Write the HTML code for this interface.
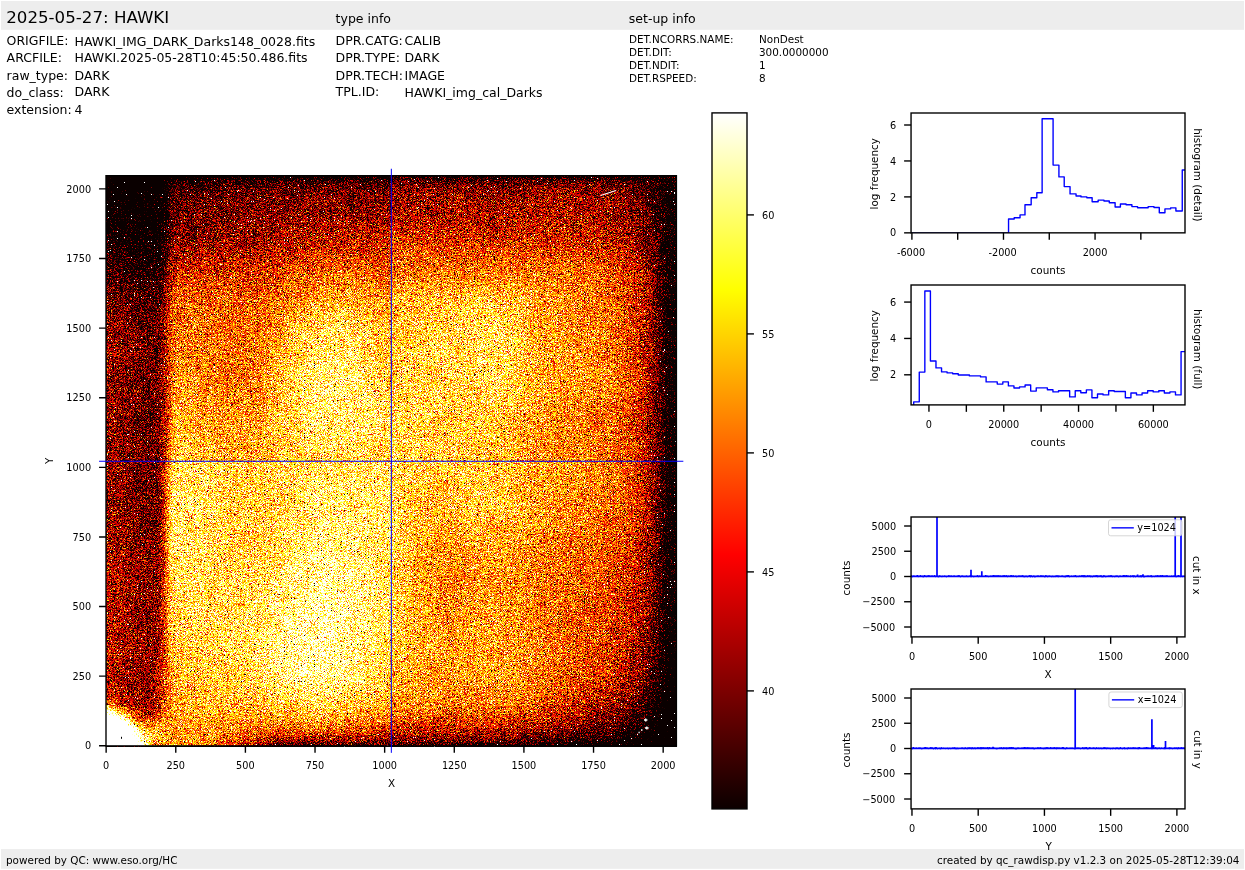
<!DOCTYPE html>
<html lang="en"><head><meta charset="utf-8"><title>HAWKI raw display</title>
<style>html,body{margin:0;padding:0;background:#fff}body{width:1245px;height:870px;overflow:hidden}svg{display:block}text{font-family:"DejaVu Sans","Liberation Sans",sans-serif;fill:#000}.sp{fill:none;stroke:#000;stroke-width:1.39;stroke-linecap:square}.tk{stroke:#000;stroke-width:1.39;fill:none}.bl{stroke:#0000ff;fill:none;stroke-width:1.39;stroke-linejoin:round}</style></head><body>
<svg width="1245" height="870" viewBox="0 0 1245 870">
<rect width="1245" height="870" fill="#fff"/>
<rect x="1" y="1" width="1243" height="28.8" fill="#ededed"/>
<rect x="1" y="849.1" width="1243" height="19.7" fill="#ededed"/>
<defs><filter id="hm" x="0" y="0" width="1" height="1" color-interpolation-filters="sRGB"><feTurbulence type="fractalNoise" baseFrequency="1.7" numOctaves="1" seed="7" result="t"/><feComponentTransfer in="t" result="t2"><feFuncG type="discrete" tableValues="0 0 0 0 0 0 0 0 0 0 0 0 0 0 0 0 0 0 0 0 0 0 0 0 0 0 .5 .5 .5 .5 .5 .5 .5 .5 .5 .5 .5 .5 .5 .5 .5 .5 .5 .5 .5 .5 .5 .5 .5 .5 .5 .5 .5 .5 .5 .5 .5 .5 .5 .5 .5 .5 .5 .5 .5 .5 .5 .5 .5 .5 .5 .5 .5 .5 1 1 1 1 1 1 1 1 1 1 1 1 1 1 1 1 1 1 1 1 1 1 1 1 1 1"/></feComponentTransfer><feColorMatrix in="t2" type="matrix" values="0.4953 1 0 0 -0.2476 0.4953 1 0 0 -0.2476 0.4953 1 0 0 -0.2476 0 0 0 0 1" result="nz"/><feComposite in="SourceGraphic" in2="nz" operator="arithmetic" k1="0" k2="1" k3="2" k4="-1" result="v"/><feComponentTransfer in="v"><feFuncR type="table" tableValues="0.042 0.042 0.042 0.042 0.042 0.042 0.042 0.042 0.042 0.042 0.042 0.042 0.042 0.042 0.042 0.042 0.042 0.042 0.042 0.042 0.042 0.107 0.173 0.238 0.304 0.370 0.435 0.501 0.567 0.632 0.698 0.764 0.829 0.895 0.960 1.000 1.000 1.000 1.000 1.000 1.000 1.000 1.000 1.000 1.000 1.000 1.000 1.000 1.000 1.000 1.000 1.000 1.000 1.000 1.000 1.000 1.000 1.000 1.000 1.000 1.000 1.000 1.000 1.000 1.000 1.000 1.000 1.000 1.000 1.000 1.000 1.000 1.000 1.000 1.000 1.000 1.000 1.000 1.000 1.000 1.000"/><feFuncG type="table" tableValues="0.000 0.000 0.000 0.000 0.000 0.000 0.000 0.000 0.000 0.000 0.000 0.000 0.000 0.000 0.000 0.000 0.000 0.000 0.000 0.000 0.000 0.000 0.000 0.000 0.000 0.000 0.000 0.000 0.000 0.000 0.000 0.000 0.000 0.000 0.000 0.026 0.092 0.157 0.223 0.289 0.354 0.420 0.485 0.551 0.617 0.682 0.748 0.814 0.879 0.945 1.000 1.000 1.000 1.000 1.000 1.000 1.000 1.000 1.000 1.000 1.000 1.000 1.000 1.000 1.000 1.000 1.000 1.000 1.000 1.000 1.000 1.000 1.000 1.000 1.000 1.000 1.000 1.000 1.000 1.000 1.000"/><feFuncB type="table" tableValues="0.000 0.000 0.000 0.000 0.000 0.000 0.000 0.000 0.000 0.000 0.000 0.000 0.000 0.000 0.000 0.000 0.000 0.000 0.000 0.000 0.000 0.000 0.000 0.000 0.000 0.000 0.000 0.000 0.000 0.000 0.000 0.000 0.000 0.000 0.000 0.000 0.000 0.000 0.000 0.000 0.000 0.000 0.000 0.000 0.000 0.000 0.000 0.000 0.000 0.000 0.016 0.114 0.212 0.311 0.409 0.508 0.606 0.705 0.803 0.902 1.000 1.000 1.000 1.000 1.000 1.000 1.000 1.000 1.000 1.000 1.000 1.000 1.000 1.000 1.000 1.000 1.000 1.000 1.000 1.000 1.000"/></feComponentTransfer></filter><linearGradient id="vm" x1="0" y1="0" x2="0" y2="1"><stop offset="0" stop-color="#fff"/><stop offset="1" stop-color="#000"/></linearGradient><mask id="mk" maskContentUnits="objectBoundingBox"><rect width="1" height="1" fill="url(#vm)"/></mask><linearGradient id="r0" gradientUnits="userSpaceOnUse" x1="106.0" y1="0" x2="676.4" y2="0"><stop offset="0.0000" stop-color="#ffffff"/><stop offset="0.0105" stop-color="#ffffff"/><stop offset="0.0245" stop-color="#ffffff"/><stop offset="0.0421" stop-color="#ffffff"/><stop offset="0.0596" stop-color="#e1e1e1"/><stop offset="0.0771" stop-color="#9e9e9e"/><stop offset="0.0912" stop-color="#929292"/><stop offset="0.1017" stop-color="#8e8e8e"/><stop offset="0.1069" stop-color="#8c8c8c"/><stop offset="0.1122" stop-color="#8a8a8a"/><stop offset="0.1175" stop-color="#898989"/><stop offset="0.1262" stop-color="#888888"/><stop offset="0.1403" stop-color="#8a8a8a"/><stop offset="0.1648" stop-color="#898989"/><stop offset="0.1911" stop-color="#818181"/><stop offset="0.2174" stop-color="#767676"/><stop offset="0.2437" stop-color="#696969"/><stop offset="0.2700" stop-color="#5b5b5b"/><stop offset="0.2963" stop-color="#4f4f4f"/><stop offset="0.3226" stop-color="#464646"/><stop offset="0.3489" stop-color="#444444"/><stop offset="0.3752" stop-color="#454545"/><stop offset="0.4015" stop-color="#444444"/><stop offset="0.4278" stop-color="#434343"/><stop offset="0.4541" stop-color="#434343"/><stop offset="0.4804" stop-color="#424242"/><stop offset="0.4988" stop-color="#414141"/><stop offset="0.5014" stop-color="#404040"/><stop offset="0.5242" stop-color="#3f3f3f"/><stop offset="0.5505" stop-color="#3f3f3f"/><stop offset="0.5768" stop-color="#3e3e3e"/><stop offset="0.6031" stop-color="#3d3d3d"/><stop offset="0.6294" stop-color="#3c3c3c"/><stop offset="0.6557" stop-color="#3b3b3b"/><stop offset="0.6820" stop-color="#393939"/><stop offset="0.7083" stop-color="#373737"/><stop offset="0.7346" stop-color="#353535"/><stop offset="0.7609" stop-color="#313131"/><stop offset="0.7872" stop-color="#2e2e2e"/><stop offset="0.8135" stop-color="#292929"/><stop offset="0.8398" stop-color="#242424"/><stop offset="0.8661" stop-color="#1e1e1e"/><stop offset="0.8871" stop-color="#181818"/><stop offset="0.9081" stop-color="#111111"/><stop offset="0.9257" stop-color="#0a0a0a"/><stop offset="0.9397" stop-color="#040404"/><stop offset="0.9537" stop-color="#000000"/><stop offset="0.9660" stop-color="#000000"/><stop offset="0.9765" stop-color="#000000"/><stop offset="0.9853" stop-color="#000000"/><stop offset="0.9923" stop-color="#000000"/><stop offset="1.0007" stop-color="#000000"/></linearGradient><linearGradient id="r1" gradientUnits="userSpaceOnUse" x1="106.0" y1="0" x2="676.4" y2="0"><stop offset="0.0000" stop-color="#ffffff"/><stop offset="0.0105" stop-color="#ffffff"/><stop offset="0.0245" stop-color="#ffffff"/><stop offset="0.0421" stop-color="#ffffff"/><stop offset="0.0596" stop-color="#dcdcdc"/><stop offset="0.0771" stop-color="#9f9f9f"/><stop offset="0.0912" stop-color="#949494"/><stop offset="0.1017" stop-color="#909090"/><stop offset="0.1069" stop-color="#8e8e8e"/><stop offset="0.1122" stop-color="#8c8c8c"/><stop offset="0.1175" stop-color="#8a8a8a"/><stop offset="0.1262" stop-color="#8a8a8a"/><stop offset="0.1403" stop-color="#8c8c8c"/><stop offset="0.1648" stop-color="#8b8b8b"/><stop offset="0.1911" stop-color="#858585"/><stop offset="0.2174" stop-color="#7c7c7c"/><stop offset="0.2437" stop-color="#727272"/><stop offset="0.2700" stop-color="#676767"/><stop offset="0.2963" stop-color="#5e5e5e"/><stop offset="0.3226" stop-color="#585858"/><stop offset="0.3489" stop-color="#575757"/><stop offset="0.3752" stop-color="#575757"/><stop offset="0.4015" stop-color="#565656"/><stop offset="0.4278" stop-color="#545454"/><stop offset="0.4541" stop-color="#535353"/><stop offset="0.4804" stop-color="#525252"/><stop offset="0.4988" stop-color="#515151"/><stop offset="0.5014" stop-color="#4f4f4f"/><stop offset="0.5242" stop-color="#4e4e4e"/><stop offset="0.5505" stop-color="#4d4d4d"/><stop offset="0.5768" stop-color="#4c4c4c"/><stop offset="0.6031" stop-color="#4b4b4b"/><stop offset="0.6294" stop-color="#4a4a4a"/><stop offset="0.6557" stop-color="#494949"/><stop offset="0.6820" stop-color="#484848"/><stop offset="0.7083" stop-color="#464646"/><stop offset="0.7346" stop-color="#434343"/><stop offset="0.7609" stop-color="#3f3f3f"/><stop offset="0.7872" stop-color="#3c3c3c"/><stop offset="0.8135" stop-color="#373737"/><stop offset="0.8398" stop-color="#323232"/><stop offset="0.8661" stop-color="#2b2b2b"/><stop offset="0.8871" stop-color="#252525"/><stop offset="0.9081" stop-color="#1e1e1e"/><stop offset="0.9257" stop-color="#171717"/><stop offset="0.9397" stop-color="#101010"/><stop offset="0.9537" stop-color="#080808"/><stop offset="0.9660" stop-color="#000000"/><stop offset="0.9765" stop-color="#000000"/><stop offset="0.9853" stop-color="#000000"/><stop offset="0.9923" stop-color="#000000"/><stop offset="1.0007" stop-color="#000000"/></linearGradient><linearGradient id="r2" gradientUnits="userSpaceOnUse" x1="106.0" y1="0" x2="676.4" y2="0"><stop offset="0.0000" stop-color="#ffffff"/><stop offset="0.0105" stop-color="#ffffff"/><stop offset="0.0245" stop-color="#ffffff"/><stop offset="0.0421" stop-color="#ffffff"/><stop offset="0.0596" stop-color="#d1d1d1"/><stop offset="0.0771" stop-color="#9e9e9e"/><stop offset="0.0912" stop-color="#959595"/><stop offset="0.1017" stop-color="#919191"/><stop offset="0.1069" stop-color="#8f8f8f"/><stop offset="0.1122" stop-color="#8d8d8d"/><stop offset="0.1175" stop-color="#8c8c8c"/><stop offset="0.1262" stop-color="#8b8b8b"/><stop offset="0.1403" stop-color="#8d8d8d"/><stop offset="0.1648" stop-color="#8d8d8d"/><stop offset="0.1911" stop-color="#888888"/><stop offset="0.2174" stop-color="#818181"/><stop offset="0.2437" stop-color="#797979"/><stop offset="0.2700" stop-color="#707070"/><stop offset="0.2963" stop-color="#696969"/><stop offset="0.3226" stop-color="#656565"/><stop offset="0.3489" stop-color="#646464"/><stop offset="0.3752" stop-color="#656565"/><stop offset="0.4015" stop-color="#636363"/><stop offset="0.4278" stop-color="#626262"/><stop offset="0.4541" stop-color="#606060"/><stop offset="0.4804" stop-color="#5e5e5e"/><stop offset="0.4988" stop-color="#5d5d5d"/><stop offset="0.5014" stop-color="#595959"/><stop offset="0.5242" stop-color="#595959"/><stop offset="0.5505" stop-color="#585858"/><stop offset="0.5768" stop-color="#575757"/><stop offset="0.6031" stop-color="#555555"/><stop offset="0.6294" stop-color="#555555"/><stop offset="0.6557" stop-color="#545454"/><stop offset="0.6820" stop-color="#535353"/><stop offset="0.7083" stop-color="#515151"/><stop offset="0.7346" stop-color="#4e4e4e"/><stop offset="0.7609" stop-color="#4a4a4a"/><stop offset="0.7872" stop-color="#464646"/><stop offset="0.8135" stop-color="#414141"/><stop offset="0.8398" stop-color="#3b3b3b"/><stop offset="0.8661" stop-color="#353535"/><stop offset="0.8871" stop-color="#2f2f2f"/><stop offset="0.9081" stop-color="#282828"/><stop offset="0.9257" stop-color="#202020"/><stop offset="0.9397" stop-color="#191919"/><stop offset="0.9537" stop-color="#101010"/><stop offset="0.9660" stop-color="#070707"/><stop offset="0.9765" stop-color="#000000"/><stop offset="0.9853" stop-color="#000000"/><stop offset="0.9923" stop-color="#000000"/><stop offset="1.0007" stop-color="#000000"/></linearGradient><linearGradient id="r3" gradientUnits="userSpaceOnUse" x1="106.0" y1="0" x2="676.4" y2="0"><stop offset="0.0000" stop-color="#ffffff"/><stop offset="0.0105" stop-color="#ffffff"/><stop offset="0.0245" stop-color="#ffffff"/><stop offset="0.0421" stop-color="#ffffff"/><stop offset="0.0596" stop-color="#c2c2c2"/><stop offset="0.0771" stop-color="#9b9b9b"/><stop offset="0.0912" stop-color="#959595"/><stop offset="0.1017" stop-color="#929292"/><stop offset="0.1069" stop-color="#909090"/><stop offset="0.1122" stop-color="#8e8e8e"/><stop offset="0.1175" stop-color="#8d8d8d"/><stop offset="0.1262" stop-color="#8c8c8c"/><stop offset="0.1403" stop-color="#8e8e8e"/><stop offset="0.1648" stop-color="#8e8e8e"/><stop offset="0.1911" stop-color="#8b8b8b"/><stop offset="0.2174" stop-color="#858585"/><stop offset="0.2437" stop-color="#7f7f7f"/><stop offset="0.2700" stop-color="#797979"/><stop offset="0.2963" stop-color="#737373"/><stop offset="0.3226" stop-color="#717171"/><stop offset="0.3489" stop-color="#717171"/><stop offset="0.3752" stop-color="#727272"/><stop offset="0.4015" stop-color="#707070"/><stop offset="0.4278" stop-color="#6e6e6e"/><stop offset="0.4541" stop-color="#6c6c6c"/><stop offset="0.4804" stop-color="#686868"/><stop offset="0.4988" stop-color="#676767"/><stop offset="0.5014" stop-color="#636363"/><stop offset="0.5242" stop-color="#626262"/><stop offset="0.5505" stop-color="#616161"/><stop offset="0.5768" stop-color="#606060"/><stop offset="0.6031" stop-color="#5f5f5f"/><stop offset="0.6294" stop-color="#5e5e5e"/><stop offset="0.6557" stop-color="#5e5e5e"/><stop offset="0.6820" stop-color="#5d5d5d"/><stop offset="0.7083" stop-color="#5b5b5b"/><stop offset="0.7346" stop-color="#575757"/><stop offset="0.7609" stop-color="#535353"/><stop offset="0.7872" stop-color="#4f4f4f"/><stop offset="0.8135" stop-color="#4a4a4a"/><stop offset="0.8398" stop-color="#444444"/><stop offset="0.8661" stop-color="#3e3e3e"/><stop offset="0.8871" stop-color="#383838"/><stop offset="0.9081" stop-color="#303030"/><stop offset="0.9257" stop-color="#292929"/><stop offset="0.9397" stop-color="#212121"/><stop offset="0.9537" stop-color="#171717"/><stop offset="0.9660" stop-color="#0d0d0d"/><stop offset="0.9765" stop-color="#020202"/><stop offset="0.9853" stop-color="#000000"/><stop offset="0.9923" stop-color="#000000"/><stop offset="1.0007" stop-color="#000000"/></linearGradient><linearGradient id="r4" gradientUnits="userSpaceOnUse" x1="106.0" y1="0" x2="676.4" y2="0"><stop offset="0.0000" stop-color="#ffffff"/><stop offset="0.0105" stop-color="#ffffff"/><stop offset="0.0245" stop-color="#ffffff"/><stop offset="0.0421" stop-color="#ffffff"/><stop offset="0.0596" stop-color="#acacac"/><stop offset="0.0771" stop-color="#949494"/><stop offset="0.0912" stop-color="#919191"/><stop offset="0.1017" stop-color="#909090"/><stop offset="0.1069" stop-color="#8f8f8f"/><stop offset="0.1122" stop-color="#8f8f8f"/><stop offset="0.1175" stop-color="#8e8e8e"/><stop offset="0.1262" stop-color="#8e8e8e"/><stop offset="0.1403" stop-color="#909090"/><stop offset="0.1648" stop-color="#909090"/><stop offset="0.1911" stop-color="#8e8e8e"/><stop offset="0.2174" stop-color="#8a8a8a"/><stop offset="0.2437" stop-color="#868686"/><stop offset="0.2700" stop-color="#818181"/><stop offset="0.2963" stop-color="#7e7e7e"/><stop offset="0.3226" stop-color="#7d7d7d"/><stop offset="0.3489" stop-color="#7e7e7e"/><stop offset="0.3752" stop-color="#808080"/><stop offset="0.4015" stop-color="#7d7d7d"/><stop offset="0.4278" stop-color="#7a7a7a"/><stop offset="0.4541" stop-color="#777777"/><stop offset="0.4804" stop-color="#747474"/><stop offset="0.4988" stop-color="#727272"/><stop offset="0.5014" stop-color="#6d6d6d"/><stop offset="0.5242" stop-color="#6c6c6c"/><stop offset="0.5505" stop-color="#6b6b6b"/><stop offset="0.5768" stop-color="#6a6a6a"/><stop offset="0.6031" stop-color="#686868"/><stop offset="0.6294" stop-color="#686868"/><stop offset="0.6557" stop-color="#686868"/><stop offset="0.6820" stop-color="#676767"/><stop offset="0.7083" stop-color="#656565"/><stop offset="0.7346" stop-color="#616161"/><stop offset="0.7609" stop-color="#5d5d5d"/><stop offset="0.7872" stop-color="#585858"/><stop offset="0.8135" stop-color="#535353"/><stop offset="0.8398" stop-color="#4e4e4e"/><stop offset="0.8661" stop-color="#474747"/><stop offset="0.8871" stop-color="#414141"/><stop offset="0.9081" stop-color="#3a3a3a"/><stop offset="0.9257" stop-color="#323232"/><stop offset="0.9397" stop-color="#2a2a2a"/><stop offset="0.9537" stop-color="#1f1f1f"/><stop offset="0.9660" stop-color="#141414"/><stop offset="0.9765" stop-color="#080808"/><stop offset="0.9853" stop-color="#000000"/><stop offset="0.9923" stop-color="#000000"/><stop offset="1.0007" stop-color="#000000"/></linearGradient><linearGradient id="r5" gradientUnits="userSpaceOnUse" x1="106.0" y1="0" x2="676.4" y2="0"><stop offset="0.0000" stop-color="#ffffff"/><stop offset="0.0105" stop-color="#ffffff"/><stop offset="0.0245" stop-color="#ffffff"/><stop offset="0.0421" stop-color="#d0d0d0"/><stop offset="0.0596" stop-color="#969696"/><stop offset="0.0771" stop-color="#898989"/><stop offset="0.0912" stop-color="#8a8a8a"/><stop offset="0.1017" stop-color="#8d8d8d"/><stop offset="0.1069" stop-color="#8d8d8d"/><stop offset="0.1122" stop-color="#8e8e8e"/><stop offset="0.1175" stop-color="#8e8e8e"/><stop offset="0.1262" stop-color="#8f8f8f"/><stop offset="0.1403" stop-color="#919191"/><stop offset="0.1648" stop-color="#929292"/><stop offset="0.1911" stop-color="#909090"/><stop offset="0.2174" stop-color="#8d8d8d"/><stop offset="0.2437" stop-color="#8b8b8b"/><stop offset="0.2700" stop-color="#888888"/><stop offset="0.2963" stop-color="#878787"/><stop offset="0.3226" stop-color="#878787"/><stop offset="0.3489" stop-color="#898989"/><stop offset="0.3752" stop-color="#8a8a8a"/><stop offset="0.4015" stop-color="#878787"/><stop offset="0.4278" stop-color="#848484"/><stop offset="0.4541" stop-color="#818181"/><stop offset="0.4804" stop-color="#7c7c7c"/><stop offset="0.4988" stop-color="#7b7b7b"/><stop offset="0.5014" stop-color="#757575"/><stop offset="0.5242" stop-color="#747474"/><stop offset="0.5505" stop-color="#737373"/><stop offset="0.5768" stop-color="#727272"/><stop offset="0.6031" stop-color="#707070"/><stop offset="0.6294" stop-color="#707070"/><stop offset="0.6557" stop-color="#707070"/><stop offset="0.6820" stop-color="#6f6f6f"/><stop offset="0.7083" stop-color="#6e6e6e"/><stop offset="0.7346" stop-color="#6a6a6a"/><stop offset="0.7609" stop-color="#656565"/><stop offset="0.7872" stop-color="#606060"/><stop offset="0.8135" stop-color="#5b5b5b"/><stop offset="0.8398" stop-color="#555555"/><stop offset="0.8661" stop-color="#4f4f4f"/><stop offset="0.8871" stop-color="#494949"/><stop offset="0.9081" stop-color="#414141"/><stop offset="0.9257" stop-color="#393939"/><stop offset="0.9397" stop-color="#313131"/><stop offset="0.9537" stop-color="#262626"/><stop offset="0.9660" stop-color="#1a1a1a"/><stop offset="0.9765" stop-color="#0d0d0d"/><stop offset="0.9853" stop-color="#000000"/><stop offset="0.9923" stop-color="#000000"/><stop offset="1.0007" stop-color="#000000"/></linearGradient><linearGradient id="r6" gradientUnits="userSpaceOnUse" x1="106.0" y1="0" x2="676.4" y2="0"><stop offset="0.0000" stop-color="#ffffff"/><stop offset="0.0105" stop-color="#ffffff"/><stop offset="0.0245" stop-color="#e6e6e6"/><stop offset="0.0421" stop-color="#9e9e9e"/><stop offset="0.0596" stop-color="#7f7f7f"/><stop offset="0.0771" stop-color="#797979"/><stop offset="0.0912" stop-color="#808080"/><stop offset="0.1017" stop-color="#878787"/><stop offset="0.1069" stop-color="#8a8a8a"/><stop offset="0.1122" stop-color="#8c8c8c"/><stop offset="0.1175" stop-color="#8e8e8e"/><stop offset="0.1262" stop-color="#909090"/><stop offset="0.1403" stop-color="#929292"/><stop offset="0.1648" stop-color="#949494"/><stop offset="0.1911" stop-color="#939393"/><stop offset="0.2174" stop-color="#919191"/><stop offset="0.2437" stop-color="#909090"/><stop offset="0.2700" stop-color="#8f8f8f"/><stop offset="0.2963" stop-color="#8f8f8f"/><stop offset="0.3226" stop-color="#919191"/><stop offset="0.3489" stop-color="#939393"/><stop offset="0.3752" stop-color="#959595"/><stop offset="0.4015" stop-color="#919191"/><stop offset="0.4278" stop-color="#8e8e8e"/><stop offset="0.4541" stop-color="#8b8b8b"/><stop offset="0.4804" stop-color="#858585"/><stop offset="0.4988" stop-color="#838383"/><stop offset="0.5014" stop-color="#7d7d7d"/><stop offset="0.5242" stop-color="#7c7c7c"/><stop offset="0.5505" stop-color="#7b7b7b"/><stop offset="0.5768" stop-color="#7a7a7a"/><stop offset="0.6031" stop-color="#787878"/><stop offset="0.6294" stop-color="#787878"/><stop offset="0.6557" stop-color="#787878"/><stop offset="0.6820" stop-color="#777777"/><stop offset="0.7083" stop-color="#767676"/><stop offset="0.7346" stop-color="#727272"/><stop offset="0.7609" stop-color="#6d6d6d"/><stop offset="0.7872" stop-color="#686868"/><stop offset="0.8135" stop-color="#636363"/><stop offset="0.8398" stop-color="#5d5d5d"/><stop offset="0.8661" stop-color="#575757"/><stop offset="0.8871" stop-color="#515151"/><stop offset="0.9081" stop-color="#494949"/><stop offset="0.9257" stop-color="#414141"/><stop offset="0.9397" stop-color="#383838"/><stop offset="0.9537" stop-color="#2d2d2d"/><stop offset="0.9660" stop-color="#202020"/><stop offset="0.9765" stop-color="#121212"/><stop offset="0.9853" stop-color="#040404"/><stop offset="0.9923" stop-color="#010101"/><stop offset="1.0007" stop-color="#000000"/></linearGradient><linearGradient id="r7" gradientUnits="userSpaceOnUse" x1="106.0" y1="0" x2="676.4" y2="0"><stop offset="0.0000" stop-color="#d6d6d6"/><stop offset="0.0105" stop-color="#c2c2c2"/><stop offset="0.0245" stop-color="#999999"/><stop offset="0.0421" stop-color="#767676"/><stop offset="0.0596" stop-color="#6a6a6a"/><stop offset="0.0771" stop-color="#686868"/><stop offset="0.0912" stop-color="#737373"/><stop offset="0.1017" stop-color="#7f7f7f"/><stop offset="0.1069" stop-color="#858585"/><stop offset="0.1122" stop-color="#8a8a8a"/><stop offset="0.1175" stop-color="#8e8e8e"/><stop offset="0.1262" stop-color="#929292"/><stop offset="0.1403" stop-color="#949494"/><stop offset="0.1648" stop-color="#959595"/><stop offset="0.1911" stop-color="#959595"/><stop offset="0.2174" stop-color="#949494"/><stop offset="0.2437" stop-color="#959595"/><stop offset="0.2700" stop-color="#959595"/><stop offset="0.2963" stop-color="#979797"/><stop offset="0.3226" stop-color="#9a9a9a"/><stop offset="0.3489" stop-color="#9d9d9d"/><stop offset="0.3752" stop-color="#9f9f9f"/><stop offset="0.4015" stop-color="#9b9b9b"/><stop offset="0.4278" stop-color="#979797"/><stop offset="0.4541" stop-color="#939393"/><stop offset="0.4804" stop-color="#8d8d8d"/><stop offset="0.4988" stop-color="#8b8b8b"/><stop offset="0.5014" stop-color="#858585"/><stop offset="0.5242" stop-color="#838383"/><stop offset="0.5505" stop-color="#828282"/><stop offset="0.5768" stop-color="#818181"/><stop offset="0.6031" stop-color="#7f7f7f"/><stop offset="0.6294" stop-color="#808080"/><stop offset="0.6557" stop-color="#808080"/><stop offset="0.6820" stop-color="#7f7f7f"/><stop offset="0.7083" stop-color="#7e7e7e"/><stop offset="0.7346" stop-color="#797979"/><stop offset="0.7609" stop-color="#747474"/><stop offset="0.7872" stop-color="#6f6f6f"/><stop offset="0.8135" stop-color="#6a6a6a"/><stop offset="0.8398" stop-color="#656565"/><stop offset="0.8661" stop-color="#5e5e5e"/><stop offset="0.8871" stop-color="#595959"/><stop offset="0.9081" stop-color="#515151"/><stop offset="0.9257" stop-color="#494949"/><stop offset="0.9397" stop-color="#404040"/><stop offset="0.9537" stop-color="#343434"/><stop offset="0.9660" stop-color="#272727"/><stop offset="0.9765" stop-color="#181818"/><stop offset="0.9853" stop-color="#090909"/><stop offset="0.9923" stop-color="#050505"/><stop offset="1.0007" stop-color="#020202"/></linearGradient><linearGradient id="r8" gradientUnits="userSpaceOnUse" x1="106.0" y1="0" x2="676.4" y2="0"><stop offset="0.0000" stop-color="#848484"/><stop offset="0.0105" stop-color="#7c7c7c"/><stop offset="0.0245" stop-color="#6c6c6c"/><stop offset="0.0421" stop-color="#616161"/><stop offset="0.0596" stop-color="#5c5c5c"/><stop offset="0.0771" stop-color="#5a5a5a"/><stop offset="0.0912" stop-color="#686868"/><stop offset="0.1017" stop-color="#797979"/><stop offset="0.1069" stop-color="#828282"/><stop offset="0.1122" stop-color="#898989"/><stop offset="0.1175" stop-color="#8e8e8e"/><stop offset="0.1262" stop-color="#939393"/><stop offset="0.1403" stop-color="#959595"/><stop offset="0.1648" stop-color="#969696"/><stop offset="0.1911" stop-color="#979797"/><stop offset="0.2174" stop-color="#979797"/><stop offset="0.2437" stop-color="#999999"/><stop offset="0.2700" stop-color="#9b9b9b"/><stop offset="0.2963" stop-color="#9e9e9e"/><stop offset="0.3226" stop-color="#a2a2a2"/><stop offset="0.3489" stop-color="#a5a5a5"/><stop offset="0.3752" stop-color="#a7a7a7"/><stop offset="0.4015" stop-color="#a3a3a3"/><stop offset="0.4278" stop-color="#9e9e9e"/><stop offset="0.4541" stop-color="#9b9b9b"/><stop offset="0.4804" stop-color="#949494"/><stop offset="0.4988" stop-color="#919191"/><stop offset="0.5014" stop-color="#8b8b8b"/><stop offset="0.5242" stop-color="#8a8a8a"/><stop offset="0.5505" stop-color="#888888"/><stop offset="0.5768" stop-color="#878787"/><stop offset="0.6031" stop-color="#858585"/><stop offset="0.6294" stop-color="#868686"/><stop offset="0.6557" stop-color="#878787"/><stop offset="0.6820" stop-color="#868686"/><stop offset="0.7083" stop-color="#858585"/><stop offset="0.7346" stop-color="#808080"/><stop offset="0.7609" stop-color="#7b7b7b"/><stop offset="0.7872" stop-color="#767676"/><stop offset="0.8135" stop-color="#707070"/><stop offset="0.8398" stop-color="#6b6b6b"/><stop offset="0.8661" stop-color="#656565"/><stop offset="0.8871" stop-color="#606060"/><stop offset="0.9081" stop-color="#585858"/><stop offset="0.9257" stop-color="#505050"/><stop offset="0.9397" stop-color="#474747"/><stop offset="0.9537" stop-color="#3b3b3b"/><stop offset="0.9660" stop-color="#2d2d2d"/><stop offset="0.9765" stop-color="#1d1d1d"/><stop offset="0.9853" stop-color="#0d0d0d"/><stop offset="0.9923" stop-color="#0a0a0a"/><stop offset="1.0007" stop-color="#080808"/></linearGradient><linearGradient id="r9" gradientUnits="userSpaceOnUse" x1="106.0" y1="0" x2="676.4" y2="0"><stop offset="0.0000" stop-color="#686868"/><stop offset="0.0105" stop-color="#676767"/><stop offset="0.0245" stop-color="#626262"/><stop offset="0.0421" stop-color="#5d5d5d"/><stop offset="0.0596" stop-color="#5a5a5a"/><stop offset="0.0771" stop-color="#585858"/><stop offset="0.0912" stop-color="#646464"/><stop offset="0.1017" stop-color="#787878"/><stop offset="0.1069" stop-color="#818181"/><stop offset="0.1122" stop-color="#8a8a8a"/><stop offset="0.1175" stop-color="#909090"/><stop offset="0.1262" stop-color="#949494"/><stop offset="0.1403" stop-color="#969696"/><stop offset="0.1648" stop-color="#989898"/><stop offset="0.1911" stop-color="#999999"/><stop offset="0.2174" stop-color="#9a9a9a"/><stop offset="0.2437" stop-color="#9d9d9d"/><stop offset="0.2700" stop-color="#a0a0a0"/><stop offset="0.2963" stop-color="#a3a3a3"/><stop offset="0.3226" stop-color="#a9a9a9"/><stop offset="0.3489" stop-color="#acacac"/><stop offset="0.3752" stop-color="#aeaeae"/><stop offset="0.4015" stop-color="#aaaaaa"/><stop offset="0.4278" stop-color="#a5a5a5"/><stop offset="0.4541" stop-color="#a1a1a1"/><stop offset="0.4804" stop-color="#9a9a9a"/><stop offset="0.4988" stop-color="#979797"/><stop offset="0.5014" stop-color="#909090"/><stop offset="0.5242" stop-color="#8f8f8f"/><stop offset="0.5505" stop-color="#8d8d8d"/><stop offset="0.5768" stop-color="#8c8c8c"/><stop offset="0.6031" stop-color="#8a8a8a"/><stop offset="0.6294" stop-color="#8b8b8b"/><stop offset="0.6557" stop-color="#8c8c8c"/><stop offset="0.6820" stop-color="#8b8b8b"/><stop offset="0.7083" stop-color="#8b8b8b"/><stop offset="0.7346" stop-color="#868686"/><stop offset="0.7609" stop-color="#818181"/><stop offset="0.7872" stop-color="#7c7c7c"/><stop offset="0.8135" stop-color="#767676"/><stop offset="0.8398" stop-color="#717171"/><stop offset="0.8661" stop-color="#6b6b6b"/><stop offset="0.8871" stop-color="#666666"/><stop offset="0.9081" stop-color="#5e5e5e"/><stop offset="0.9257" stop-color="#565656"/><stop offset="0.9397" stop-color="#4d4d4d"/><stop offset="0.9537" stop-color="#414141"/><stop offset="0.9660" stop-color="#333333"/><stop offset="0.9765" stop-color="#232323"/><stop offset="0.9853" stop-color="#121212"/><stop offset="0.9923" stop-color="#101010"/><stop offset="1.0007" stop-color="#0d0d0d"/></linearGradient><linearGradient id="r10" gradientUnits="userSpaceOnUse" x1="106.0" y1="0" x2="676.4" y2="0"><stop offset="0.0000" stop-color="#666666"/><stop offset="0.0105" stop-color="#656565"/><stop offset="0.0245" stop-color="#626262"/><stop offset="0.0421" stop-color="#5d5d5d"/><stop offset="0.0596" stop-color="#5a5a5a"/><stop offset="0.0771" stop-color="#585858"/><stop offset="0.0912" stop-color="#616161"/><stop offset="0.1017" stop-color="#777777"/><stop offset="0.1069" stop-color="#828282"/><stop offset="0.1122" stop-color="#8c8c8c"/><stop offset="0.1175" stop-color="#949494"/><stop offset="0.1262" stop-color="#979797"/><stop offset="0.1403" stop-color="#999999"/><stop offset="0.1648" stop-color="#9b9b9b"/><stop offset="0.1911" stop-color="#9d9d9d"/><stop offset="0.2174" stop-color="#9e9e9e"/><stop offset="0.2437" stop-color="#a1a1a1"/><stop offset="0.2700" stop-color="#a4a4a4"/><stop offset="0.2963" stop-color="#a9a9a9"/><stop offset="0.3226" stop-color="#afafaf"/><stop offset="0.3489" stop-color="#b2b2b2"/><stop offset="0.3752" stop-color="#b5b5b5"/><stop offset="0.4015" stop-color="#b0b0b0"/><stop offset="0.4278" stop-color="#acacac"/><stop offset="0.4541" stop-color="#a7a7a7"/><stop offset="0.4804" stop-color="#a0a0a0"/><stop offset="0.4988" stop-color="#9d9d9d"/><stop offset="0.5014" stop-color="#969696"/><stop offset="0.5242" stop-color="#939393"/><stop offset="0.5505" stop-color="#909090"/><stop offset="0.5768" stop-color="#8e8e8e"/><stop offset="0.6031" stop-color="#8d8d8d"/><stop offset="0.6294" stop-color="#8f8f8f"/><stop offset="0.6557" stop-color="#909090"/><stop offset="0.6820" stop-color="#909090"/><stop offset="0.7083" stop-color="#8f8f8f"/><stop offset="0.7346" stop-color="#8a8a8a"/><stop offset="0.7609" stop-color="#858585"/><stop offset="0.7872" stop-color="#808080"/><stop offset="0.8135" stop-color="#7a7a7a"/><stop offset="0.8398" stop-color="#757575"/><stop offset="0.8661" stop-color="#6f6f6f"/><stop offset="0.8871" stop-color="#6a6a6a"/><stop offset="0.9081" stop-color="#636363"/><stop offset="0.9257" stop-color="#5b5b5b"/><stop offset="0.9397" stop-color="#525252"/><stop offset="0.9537" stop-color="#464646"/><stop offset="0.9660" stop-color="#383838"/><stop offset="0.9765" stop-color="#282828"/><stop offset="0.9853" stop-color="#181818"/><stop offset="0.9923" stop-color="#151515"/><stop offset="1.0007" stop-color="#141414"/></linearGradient><linearGradient id="r11" gradientUnits="userSpaceOnUse" x1="106.0" y1="0" x2="676.4" y2="0"><stop offset="0.0000" stop-color="#666666"/><stop offset="0.0105" stop-color="#656565"/><stop offset="0.0245" stop-color="#626262"/><stop offset="0.0421" stop-color="#5d5d5d"/><stop offset="0.0596" stop-color="#5a5a5a"/><stop offset="0.0771" stop-color="#585858"/><stop offset="0.0912" stop-color="#5d5d5d"/><stop offset="0.1017" stop-color="#757575"/><stop offset="0.1069" stop-color="#828282"/><stop offset="0.1122" stop-color="#8e8e8e"/><stop offset="0.1175" stop-color="#969696"/><stop offset="0.1262" stop-color="#999999"/><stop offset="0.1403" stop-color="#9b9b9b"/><stop offset="0.1648" stop-color="#9d9d9d"/><stop offset="0.1911" stop-color="#a0a0a0"/><stop offset="0.2174" stop-color="#a1a1a1"/><stop offset="0.2437" stop-color="#a4a4a4"/><stop offset="0.2700" stop-color="#a7a7a7"/><stop offset="0.2963" stop-color="#adadad"/><stop offset="0.3226" stop-color="#b3b3b3"/><stop offset="0.3489" stop-color="#b7b7b7"/><stop offset="0.3752" stop-color="#bababa"/><stop offset="0.4015" stop-color="#b5b5b5"/><stop offset="0.4278" stop-color="#b0b0b0"/><stop offset="0.4541" stop-color="#ababab"/><stop offset="0.4804" stop-color="#a3a3a3"/><stop offset="0.4988" stop-color="#a1a1a1"/><stop offset="0.5014" stop-color="#999999"/><stop offset="0.5242" stop-color="#969696"/><stop offset="0.5505" stop-color="#929292"/><stop offset="0.5768" stop-color="#909090"/><stop offset="0.6031" stop-color="#8e8e8e"/><stop offset="0.6294" stop-color="#919191"/><stop offset="0.6557" stop-color="#939393"/><stop offset="0.6820" stop-color="#939393"/><stop offset="0.7083" stop-color="#929292"/><stop offset="0.7346" stop-color="#8d8d8d"/><stop offset="0.7609" stop-color="#888888"/><stop offset="0.7872" stop-color="#828282"/><stop offset="0.8135" stop-color="#7c7c7c"/><stop offset="0.8398" stop-color="#777777"/><stop offset="0.8661" stop-color="#727272"/><stop offset="0.8871" stop-color="#6d6d6d"/><stop offset="0.9081" stop-color="#676767"/><stop offset="0.9257" stop-color="#5f5f5f"/><stop offset="0.9397" stop-color="#565656"/><stop offset="0.9537" stop-color="#4a4a4a"/><stop offset="0.9660" stop-color="#3c3c3c"/><stop offset="0.9765" stop-color="#2d2d2d"/><stop offset="0.9853" stop-color="#1d1d1d"/><stop offset="0.9923" stop-color="#1a1a1a"/><stop offset="1.0007" stop-color="#191919"/></linearGradient><linearGradient id="r12" gradientUnits="userSpaceOnUse" x1="106.0" y1="0" x2="676.4" y2="0"><stop offset="0.0000" stop-color="#666666"/><stop offset="0.0105" stop-color="#656565"/><stop offset="0.0245" stop-color="#626262"/><stop offset="0.0421" stop-color="#5e5e5e"/><stop offset="0.0596" stop-color="#5a5a5a"/><stop offset="0.0771" stop-color="#585858"/><stop offset="0.0912" stop-color="#5a5a5a"/><stop offset="0.1017" stop-color="#717171"/><stop offset="0.1069" stop-color="#828282"/><stop offset="0.1122" stop-color="#919191"/><stop offset="0.1175" stop-color="#9a9a9a"/><stop offset="0.1262" stop-color="#9c9c9c"/><stop offset="0.1403" stop-color="#9e9e9e"/><stop offset="0.1648" stop-color="#a0a0a0"/><stop offset="0.1911" stop-color="#a1a1a1"/><stop offset="0.2174" stop-color="#a2a2a2"/><stop offset="0.2437" stop-color="#a5a5a5"/><stop offset="0.2700" stop-color="#a9a9a9"/><stop offset="0.2963" stop-color="#afafaf"/><stop offset="0.3226" stop-color="#b5b5b5"/><stop offset="0.3489" stop-color="#b9b9b9"/><stop offset="0.3752" stop-color="#bcbcbc"/><stop offset="0.4015" stop-color="#b7b7b7"/><stop offset="0.4278" stop-color="#b2b2b2"/><stop offset="0.4541" stop-color="#aeaeae"/><stop offset="0.4804" stop-color="#a7a7a7"/><stop offset="0.4988" stop-color="#a4a4a4"/><stop offset="0.5014" stop-color="#9d9d9d"/><stop offset="0.5242" stop-color="#999999"/><stop offset="0.5505" stop-color="#949494"/><stop offset="0.5768" stop-color="#919191"/><stop offset="0.6031" stop-color="#8e8e8e"/><stop offset="0.6294" stop-color="#919191"/><stop offset="0.6557" stop-color="#939393"/><stop offset="0.6820" stop-color="#929292"/><stop offset="0.7083" stop-color="#929292"/><stop offset="0.7346" stop-color="#8d8d8d"/><stop offset="0.7609" stop-color="#888888"/><stop offset="0.7872" stop-color="#828282"/><stop offset="0.8135" stop-color="#7d7d7d"/><stop offset="0.8398" stop-color="#797979"/><stop offset="0.8661" stop-color="#757575"/><stop offset="0.8871" stop-color="#717171"/><stop offset="0.9081" stop-color="#6a6a6a"/><stop offset="0.9257" stop-color="#636363"/><stop offset="0.9397" stop-color="#5a5a5a"/><stop offset="0.9537" stop-color="#4f4f4f"/><stop offset="0.9660" stop-color="#414141"/><stop offset="0.9765" stop-color="#313131"/><stop offset="0.9853" stop-color="#212121"/><stop offset="0.9923" stop-color="#1f1f1f"/><stop offset="1.0007" stop-color="#1d1d1d"/></linearGradient><linearGradient id="r13" gradientUnits="userSpaceOnUse" x1="106.0" y1="0" x2="676.4" y2="0"><stop offset="0.0000" stop-color="#666666"/><stop offset="0.0105" stop-color="#656565"/><stop offset="0.0245" stop-color="#626262"/><stop offset="0.0421" stop-color="#5e5e5e"/><stop offset="0.0596" stop-color="#5a5a5a"/><stop offset="0.0771" stop-color="#585858"/><stop offset="0.0912" stop-color="#595959"/><stop offset="0.1017" stop-color="#707070"/><stop offset="0.1069" stop-color="#838383"/><stop offset="0.1122" stop-color="#949494"/><stop offset="0.1175" stop-color="#9d9d9d"/><stop offset="0.1262" stop-color="#9e9e9e"/><stop offset="0.1403" stop-color="#a1a1a1"/><stop offset="0.1648" stop-color="#a3a3a3"/><stop offset="0.1911" stop-color="#a3a3a3"/><stop offset="0.2174" stop-color="#a3a3a3"/><stop offset="0.2437" stop-color="#a6a6a6"/><stop offset="0.2700" stop-color="#aaaaaa"/><stop offset="0.2963" stop-color="#b0b0b0"/><stop offset="0.3226" stop-color="#b7b7b7"/><stop offset="0.3489" stop-color="#bababa"/><stop offset="0.3752" stop-color="#bdbdbd"/><stop offset="0.4015" stop-color="#b8b8b8"/><stop offset="0.4278" stop-color="#b3b3b3"/><stop offset="0.4541" stop-color="#afafaf"/><stop offset="0.4804" stop-color="#a9a9a9"/><stop offset="0.4988" stop-color="#a7a7a7"/><stop offset="0.5014" stop-color="#9f9f9f"/><stop offset="0.5242" stop-color="#9b9b9b"/><stop offset="0.5505" stop-color="#969696"/><stop offset="0.5768" stop-color="#929292"/><stop offset="0.6031" stop-color="#8e8e8e"/><stop offset="0.6294" stop-color="#909090"/><stop offset="0.6557" stop-color="#929292"/><stop offset="0.6820" stop-color="#919191"/><stop offset="0.7083" stop-color="#909090"/><stop offset="0.7346" stop-color="#8b8b8b"/><stop offset="0.7609" stop-color="#868686"/><stop offset="0.7872" stop-color="#818181"/><stop offset="0.8135" stop-color="#7d7d7d"/><stop offset="0.8398" stop-color="#7a7a7a"/><stop offset="0.8661" stop-color="#777777"/><stop offset="0.8871" stop-color="#737373"/><stop offset="0.9081" stop-color="#6d6d6d"/><stop offset="0.9257" stop-color="#666666"/><stop offset="0.9397" stop-color="#5d5d5d"/><stop offset="0.9537" stop-color="#525252"/><stop offset="0.9660" stop-color="#444444"/><stop offset="0.9765" stop-color="#343434"/><stop offset="0.9853" stop-color="#242424"/><stop offset="0.9923" stop-color="#222222"/><stop offset="1.0007" stop-color="#212121"/></linearGradient><linearGradient id="r14" gradientUnits="userSpaceOnUse" x1="106.0" y1="0" x2="676.4" y2="0"><stop offset="0.0000" stop-color="#666666"/><stop offset="0.0105" stop-color="#656565"/><stop offset="0.0245" stop-color="#626262"/><stop offset="0.0421" stop-color="#5e5e5e"/><stop offset="0.0596" stop-color="#5a5a5a"/><stop offset="0.0771" stop-color="#585858"/><stop offset="0.0912" stop-color="#595959"/><stop offset="0.1017" stop-color="#717171"/><stop offset="0.1069" stop-color="#848484"/><stop offset="0.1122" stop-color="#969696"/><stop offset="0.1175" stop-color="#a0a0a0"/><stop offset="0.1262" stop-color="#a1a1a1"/><stop offset="0.1403" stop-color="#a2a2a2"/><stop offset="0.1648" stop-color="#a4a4a4"/><stop offset="0.1911" stop-color="#a4a4a4"/><stop offset="0.2174" stop-color="#a3a3a3"/><stop offset="0.2437" stop-color="#a6a6a6"/><stop offset="0.2700" stop-color="#a9a9a9"/><stop offset="0.2963" stop-color="#afafaf"/><stop offset="0.3226" stop-color="#b5b5b5"/><stop offset="0.3489" stop-color="#b9b9b9"/><stop offset="0.3752" stop-color="#bdbdbd"/><stop offset="0.4015" stop-color="#b8b8b8"/><stop offset="0.4278" stop-color="#b4b4b4"/><stop offset="0.4541" stop-color="#b0b0b0"/><stop offset="0.4804" stop-color="#aaaaaa"/><stop offset="0.4988" stop-color="#a7a7a7"/><stop offset="0.5014" stop-color="#a1a1a1"/><stop offset="0.5242" stop-color="#9b9b9b"/><stop offset="0.5505" stop-color="#959595"/><stop offset="0.5768" stop-color="#919191"/><stop offset="0.6031" stop-color="#8c8c8c"/><stop offset="0.6294" stop-color="#8f8f8f"/><stop offset="0.6557" stop-color="#919191"/><stop offset="0.6820" stop-color="#909090"/><stop offset="0.7083" stop-color="#8f8f8f"/><stop offset="0.7346" stop-color="#8b8b8b"/><stop offset="0.7609" stop-color="#868686"/><stop offset="0.7872" stop-color="#828282"/><stop offset="0.8135" stop-color="#7e7e7e"/><stop offset="0.8398" stop-color="#7c7c7c"/><stop offset="0.8661" stop-color="#787878"/><stop offset="0.8871" stop-color="#757575"/><stop offset="0.9081" stop-color="#6f6f6f"/><stop offset="0.9257" stop-color="#686868"/><stop offset="0.9397" stop-color="#5f5f5f"/><stop offset="0.9537" stop-color="#545454"/><stop offset="0.9660" stop-color="#464646"/><stop offset="0.9765" stop-color="#373737"/><stop offset="0.9853" stop-color="#272727"/><stop offset="0.9923" stop-color="#252525"/><stop offset="1.0007" stop-color="#242424"/></linearGradient><linearGradient id="r15" gradientUnits="userSpaceOnUse" x1="106.0" y1="0" x2="676.4" y2="0"><stop offset="0.0000" stop-color="#666666"/><stop offset="0.0105" stop-color="#656565"/><stop offset="0.0245" stop-color="#626262"/><stop offset="0.0421" stop-color="#5e5e5e"/><stop offset="0.0596" stop-color="#5a5a5a"/><stop offset="0.0771" stop-color="#585858"/><stop offset="0.0912" stop-color="#595959"/><stop offset="0.1017" stop-color="#727272"/><stop offset="0.1069" stop-color="#868686"/><stop offset="0.1122" stop-color="#989898"/><stop offset="0.1175" stop-color="#a2a2a2"/><stop offset="0.1262" stop-color="#a3a3a3"/><stop offset="0.1403" stop-color="#a4a4a4"/><stop offset="0.1648" stop-color="#a6a6a6"/><stop offset="0.1911" stop-color="#a4a4a4"/><stop offset="0.2174" stop-color="#a3a3a3"/><stop offset="0.2437" stop-color="#a5a5a5"/><stop offset="0.2700" stop-color="#a8a8a8"/><stop offset="0.2963" stop-color="#adadad"/><stop offset="0.3226" stop-color="#b3b3b3"/><stop offset="0.3489" stop-color="#b8b8b8"/><stop offset="0.3752" stop-color="#bcbcbc"/><stop offset="0.4015" stop-color="#b8b8b8"/><stop offset="0.4278" stop-color="#b4b4b4"/><stop offset="0.4541" stop-color="#b1b1b1"/><stop offset="0.4804" stop-color="#aaaaaa"/><stop offset="0.4988" stop-color="#a8a8a8"/><stop offset="0.5014" stop-color="#a3a3a3"/><stop offset="0.5242" stop-color="#9c9c9c"/><stop offset="0.5505" stop-color="#959595"/><stop offset="0.5768" stop-color="#8f8f8f"/><stop offset="0.6031" stop-color="#8a8a8a"/><stop offset="0.6294" stop-color="#8d8d8d"/><stop offset="0.6557" stop-color="#909090"/><stop offset="0.6820" stop-color="#8f8f8f"/><stop offset="0.7083" stop-color="#8f8f8f"/><stop offset="0.7346" stop-color="#8a8a8a"/><stop offset="0.7609" stop-color="#858585"/><stop offset="0.7872" stop-color="#828282"/><stop offset="0.8135" stop-color="#7e7e7e"/><stop offset="0.8398" stop-color="#7c7c7c"/><stop offset="0.8661" stop-color="#797979"/><stop offset="0.8871" stop-color="#767676"/><stop offset="0.9081" stop-color="#707070"/><stop offset="0.9257" stop-color="#696969"/><stop offset="0.9397" stop-color="#616161"/><stop offset="0.9537" stop-color="#565656"/><stop offset="0.9660" stop-color="#484848"/><stop offset="0.9765" stop-color="#393939"/><stop offset="0.9853" stop-color="#292929"/><stop offset="0.9923" stop-color="#272727"/><stop offset="1.0007" stop-color="#262626"/></linearGradient><linearGradient id="r16" gradientUnits="userSpaceOnUse" x1="106.0" y1="0" x2="676.4" y2="0"><stop offset="0.0000" stop-color="#666666"/><stop offset="0.0105" stop-color="#656565"/><stop offset="0.0245" stop-color="#626262"/><stop offset="0.0421" stop-color="#5e5e5e"/><stop offset="0.0596" stop-color="#5a5a5a"/><stop offset="0.0771" stop-color="#585858"/><stop offset="0.0912" stop-color="#595959"/><stop offset="0.1017" stop-color="#727272"/><stop offset="0.1069" stop-color="#878787"/><stop offset="0.1122" stop-color="#9a9a9a"/><stop offset="0.1175" stop-color="#a4a4a4"/><stop offset="0.1262" stop-color="#a5a5a5"/><stop offset="0.1403" stop-color="#a6a6a6"/><stop offset="0.1648" stop-color="#a6a6a6"/><stop offset="0.1911" stop-color="#a4a4a4"/><stop offset="0.2174" stop-color="#a2a2a2"/><stop offset="0.2437" stop-color="#a4a4a4"/><stop offset="0.2700" stop-color="#a6a6a6"/><stop offset="0.2963" stop-color="#ababab"/><stop offset="0.3226" stop-color="#b0b0b0"/><stop offset="0.3489" stop-color="#b5b5b5"/><stop offset="0.3752" stop-color="#bababa"/><stop offset="0.4015" stop-color="#b7b7b7"/><stop offset="0.4278" stop-color="#b3b3b3"/><stop offset="0.4541" stop-color="#b0b0b0"/><stop offset="0.4804" stop-color="#aaaaaa"/><stop offset="0.4988" stop-color="#a8a8a8"/><stop offset="0.5014" stop-color="#a3a3a3"/><stop offset="0.5242" stop-color="#9c9c9c"/><stop offset="0.5505" stop-color="#949494"/><stop offset="0.5768" stop-color="#8e8e8e"/><stop offset="0.6031" stop-color="#898989"/><stop offset="0.6294" stop-color="#8c8c8c"/><stop offset="0.6557" stop-color="#8f8f8f"/><stop offset="0.6820" stop-color="#8f8f8f"/><stop offset="0.7083" stop-color="#8e8e8e"/><stop offset="0.7346" stop-color="#8a8a8a"/><stop offset="0.7609" stop-color="#858585"/><stop offset="0.7872" stop-color="#828282"/><stop offset="0.8135" stop-color="#7f7f7f"/><stop offset="0.8398" stop-color="#7d7d7d"/><stop offset="0.8661" stop-color="#7a7a7a"/><stop offset="0.8871" stop-color="#777777"/><stop offset="0.9081" stop-color="#717171"/><stop offset="0.9257" stop-color="#6a6a6a"/><stop offset="0.9397" stop-color="#626262"/><stop offset="0.9537" stop-color="#575757"/><stop offset="0.9660" stop-color="#4a4a4a"/><stop offset="0.9765" stop-color="#3a3a3a"/><stop offset="0.9853" stop-color="#2a2a2a"/><stop offset="0.9923" stop-color="#292929"/><stop offset="1.0007" stop-color="#282828"/></linearGradient><linearGradient id="r17" gradientUnits="userSpaceOnUse" x1="106.0" y1="0" x2="676.4" y2="0"><stop offset="0.0000" stop-color="#656565"/><stop offset="0.0105" stop-color="#656565"/><stop offset="0.0245" stop-color="#626262"/><stop offset="0.0421" stop-color="#5d5d5d"/><stop offset="0.0596" stop-color="#595959"/><stop offset="0.0771" stop-color="#575757"/><stop offset="0.0912" stop-color="#595959"/><stop offset="0.1017" stop-color="#737373"/><stop offset="0.1069" stop-color="#888888"/><stop offset="0.1122" stop-color="#9b9b9b"/><stop offset="0.1175" stop-color="#a6a6a6"/><stop offset="0.1262" stop-color="#a7a7a7"/><stop offset="0.1403" stop-color="#a7a7a7"/><stop offset="0.1648" stop-color="#a7a7a7"/><stop offset="0.1911" stop-color="#a4a4a4"/><stop offset="0.2174" stop-color="#a2a2a2"/><stop offset="0.2437" stop-color="#a3a3a3"/><stop offset="0.2700" stop-color="#a4a4a4"/><stop offset="0.2963" stop-color="#a9a9a9"/><stop offset="0.3226" stop-color="#aeaeae"/><stop offset="0.3489" stop-color="#b3b3b3"/><stop offset="0.3752" stop-color="#b7b7b7"/><stop offset="0.4015" stop-color="#b5b5b5"/><stop offset="0.4278" stop-color="#b2b2b2"/><stop offset="0.4541" stop-color="#afafaf"/><stop offset="0.4804" stop-color="#aaaaaa"/><stop offset="0.4988" stop-color="#a8a8a8"/><stop offset="0.5014" stop-color="#a3a3a3"/><stop offset="0.5242" stop-color="#9b9b9b"/><stop offset="0.5505" stop-color="#929292"/><stop offset="0.5768" stop-color="#8d8d8d"/><stop offset="0.6031" stop-color="#888888"/><stop offset="0.6294" stop-color="#8b8b8b"/><stop offset="0.6557" stop-color="#8e8e8e"/><stop offset="0.6820" stop-color="#8e8e8e"/><stop offset="0.7083" stop-color="#8d8d8d"/><stop offset="0.7346" stop-color="#898989"/><stop offset="0.7609" stop-color="#868686"/><stop offset="0.7872" stop-color="#838383"/><stop offset="0.8135" stop-color="#808080"/><stop offset="0.8398" stop-color="#7e7e7e"/><stop offset="0.8661" stop-color="#7b7b7b"/><stop offset="0.8871" stop-color="#777777"/><stop offset="0.9081" stop-color="#727272"/><stop offset="0.9257" stop-color="#6b6b6b"/><stop offset="0.9397" stop-color="#636363"/><stop offset="0.9537" stop-color="#585858"/><stop offset="0.9660" stop-color="#4b4b4b"/><stop offset="0.9765" stop-color="#3c3c3c"/><stop offset="0.9853" stop-color="#2b2b2b"/><stop offset="0.9923" stop-color="#2a2a2a"/><stop offset="1.0007" stop-color="#292929"/></linearGradient><linearGradient id="r18" gradientUnits="userSpaceOnUse" x1="106.0" y1="0" x2="676.4" y2="0"><stop offset="0.0000" stop-color="#656565"/><stop offset="0.0105" stop-color="#646464"/><stop offset="0.0245" stop-color="#616161"/><stop offset="0.0421" stop-color="#5c5c5c"/><stop offset="0.0596" stop-color="#585858"/><stop offset="0.0771" stop-color="#575757"/><stop offset="0.0912" stop-color="#585858"/><stop offset="0.1017" stop-color="#727272"/><stop offset="0.1069" stop-color="#888888"/><stop offset="0.1122" stop-color="#9c9c9c"/><stop offset="0.1175" stop-color="#a7a7a7"/><stop offset="0.1262" stop-color="#a8a8a8"/><stop offset="0.1403" stop-color="#a8a8a8"/><stop offset="0.1648" stop-color="#a7a7a7"/><stop offset="0.1911" stop-color="#a4a4a4"/><stop offset="0.2174" stop-color="#a1a1a1"/><stop offset="0.2437" stop-color="#a1a1a1"/><stop offset="0.2700" stop-color="#a2a2a2"/><stop offset="0.2963" stop-color="#a6a6a6"/><stop offset="0.3226" stop-color="#ababab"/><stop offset="0.3489" stop-color="#b0b0b0"/><stop offset="0.3752" stop-color="#b5b5b5"/><stop offset="0.4015" stop-color="#b3b3b3"/><stop offset="0.4278" stop-color="#b1b1b1"/><stop offset="0.4541" stop-color="#aeaeae"/><stop offset="0.4804" stop-color="#aaaaaa"/><stop offset="0.4988" stop-color="#a8a8a8"/><stop offset="0.5014" stop-color="#a3a3a3"/><stop offset="0.5242" stop-color="#9b9b9b"/><stop offset="0.5505" stop-color="#929292"/><stop offset="0.5768" stop-color="#8e8e8e"/><stop offset="0.6031" stop-color="#898989"/><stop offset="0.6294" stop-color="#8d8d8d"/><stop offset="0.6557" stop-color="#909090"/><stop offset="0.6820" stop-color="#8f8f8f"/><stop offset="0.7083" stop-color="#8e8e8e"/><stop offset="0.7346" stop-color="#8b8b8b"/><stop offset="0.7609" stop-color="#878787"/><stop offset="0.7872" stop-color="#848484"/><stop offset="0.8135" stop-color="#818181"/><stop offset="0.8398" stop-color="#7f7f7f"/><stop offset="0.8661" stop-color="#7c7c7c"/><stop offset="0.8871" stop-color="#797979"/><stop offset="0.9081" stop-color="#737373"/><stop offset="0.9257" stop-color="#6d6d6d"/><stop offset="0.9397" stop-color="#656565"/><stop offset="0.9537" stop-color="#595959"/><stop offset="0.9660" stop-color="#4c4c4c"/><stop offset="0.9765" stop-color="#3c3c3c"/><stop offset="0.9853" stop-color="#2c2c2c"/><stop offset="0.9923" stop-color="#2b2b2b"/><stop offset="1.0007" stop-color="#2a2a2a"/></linearGradient><linearGradient id="r19" gradientUnits="userSpaceOnUse" x1="106.0" y1="0" x2="676.4" y2="0"><stop offset="0.0000" stop-color="#636363"/><stop offset="0.0105" stop-color="#636363"/><stop offset="0.0245" stop-color="#606060"/><stop offset="0.0421" stop-color="#5b5b5b"/><stop offset="0.0596" stop-color="#575757"/><stop offset="0.0771" stop-color="#555555"/><stop offset="0.0912" stop-color="#575757"/><stop offset="0.1017" stop-color="#727272"/><stop offset="0.1069" stop-color="#898989"/><stop offset="0.1122" stop-color="#9d9d9d"/><stop offset="0.1175" stop-color="#a9a9a9"/><stop offset="0.1262" stop-color="#a9a9a9"/><stop offset="0.1403" stop-color="#a8a8a8"/><stop offset="0.1648" stop-color="#a7a7a7"/><stop offset="0.1911" stop-color="#a3a3a3"/><stop offset="0.2174" stop-color="#9f9f9f"/><stop offset="0.2437" stop-color="#9f9f9f"/><stop offset="0.2700" stop-color="#9f9f9f"/><stop offset="0.2963" stop-color="#a4a4a4"/><stop offset="0.3226" stop-color="#a9a9a9"/><stop offset="0.3489" stop-color="#aeaeae"/><stop offset="0.3752" stop-color="#b2b2b2"/><stop offset="0.4015" stop-color="#b1b1b1"/><stop offset="0.4278" stop-color="#b0b0b0"/><stop offset="0.4541" stop-color="#aeaeae"/><stop offset="0.4804" stop-color="#aaaaaa"/><stop offset="0.4988" stop-color="#a8a8a8"/><stop offset="0.5014" stop-color="#a3a3a3"/><stop offset="0.5242" stop-color="#9b9b9b"/><stop offset="0.5505" stop-color="#929292"/><stop offset="0.5768" stop-color="#8f8f8f"/><stop offset="0.6031" stop-color="#8b8b8b"/><stop offset="0.6294" stop-color="#8e8e8e"/><stop offset="0.6557" stop-color="#919191"/><stop offset="0.6820" stop-color="#909090"/><stop offset="0.7083" stop-color="#8f8f8f"/><stop offset="0.7346" stop-color="#8c8c8c"/><stop offset="0.7609" stop-color="#898989"/><stop offset="0.7872" stop-color="#868686"/><stop offset="0.8135" stop-color="#828282"/><stop offset="0.8398" stop-color="#818181"/><stop offset="0.8661" stop-color="#7e7e7e"/><stop offset="0.8871" stop-color="#7a7a7a"/><stop offset="0.9081" stop-color="#757575"/><stop offset="0.9257" stop-color="#6e6e6e"/><stop offset="0.9397" stop-color="#666666"/><stop offset="0.9537" stop-color="#5b5b5b"/><stop offset="0.9660" stop-color="#4d4d4d"/><stop offset="0.9765" stop-color="#3d3d3d"/><stop offset="0.9853" stop-color="#2d2d2d"/><stop offset="0.9923" stop-color="#2b2b2b"/><stop offset="1.0007" stop-color="#2b2b2b"/></linearGradient><linearGradient id="r20" gradientUnits="userSpaceOnUse" x1="106.0" y1="0" x2="676.4" y2="0"><stop offset="0.0000" stop-color="#626262"/><stop offset="0.0105" stop-color="#616161"/><stop offset="0.0245" stop-color="#5e5e5e"/><stop offset="0.0421" stop-color="#5a5a5a"/><stop offset="0.0596" stop-color="#565656"/><stop offset="0.0771" stop-color="#545454"/><stop offset="0.0912" stop-color="#555555"/><stop offset="0.1017" stop-color="#717171"/><stop offset="0.1069" stop-color="#888888"/><stop offset="0.1122" stop-color="#9d9d9d"/><stop offset="0.1175" stop-color="#a9a9a9"/><stop offset="0.1262" stop-color="#a9a9a9"/><stop offset="0.1403" stop-color="#a8a8a8"/><stop offset="0.1648" stop-color="#a7a7a7"/><stop offset="0.1911" stop-color="#a3a3a3"/><stop offset="0.2174" stop-color="#9f9f9f"/><stop offset="0.2437" stop-color="#9f9f9f"/><stop offset="0.2700" stop-color="#9e9e9e"/><stop offset="0.2963" stop-color="#a2a2a2"/><stop offset="0.3226" stop-color="#a8a8a8"/><stop offset="0.3489" stop-color="#acacac"/><stop offset="0.3752" stop-color="#b0b0b0"/><stop offset="0.4015" stop-color="#afafaf"/><stop offset="0.4278" stop-color="#afafaf"/><stop offset="0.4541" stop-color="#adadad"/><stop offset="0.4804" stop-color="#a9a9a9"/><stop offset="0.4988" stop-color="#a8a8a8"/><stop offset="0.5014" stop-color="#a4a4a4"/><stop offset="0.5242" stop-color="#9e9e9e"/><stop offset="0.5505" stop-color="#969696"/><stop offset="0.5768" stop-color="#949494"/><stop offset="0.6031" stop-color="#919191"/><stop offset="0.6294" stop-color="#949494"/><stop offset="0.6557" stop-color="#979797"/><stop offset="0.6820" stop-color="#959595"/><stop offset="0.7083" stop-color="#939393"/><stop offset="0.7346" stop-color="#8f8f8f"/><stop offset="0.7609" stop-color="#8b8b8b"/><stop offset="0.7872" stop-color="#898989"/><stop offset="0.8135" stop-color="#868686"/><stop offset="0.8398" stop-color="#848484"/><stop offset="0.8661" stop-color="#818181"/><stop offset="0.8871" stop-color="#7e7e7e"/><stop offset="0.9081" stop-color="#787878"/><stop offset="0.9257" stop-color="#717171"/><stop offset="0.9397" stop-color="#686868"/><stop offset="0.9537" stop-color="#5c5c5c"/><stop offset="0.9660" stop-color="#4e4e4e"/><stop offset="0.9765" stop-color="#3e3e3e"/><stop offset="0.9853" stop-color="#2c2c2c"/><stop offset="0.9923" stop-color="#2b2b2b"/><stop offset="1.0007" stop-color="#2a2a2a"/></linearGradient><linearGradient id="r21" gradientUnits="userSpaceOnUse" x1="106.0" y1="0" x2="676.4" y2="0"><stop offset="0.0000" stop-color="#606060"/><stop offset="0.0105" stop-color="#5f5f5f"/><stop offset="0.0245" stop-color="#5d5d5d"/><stop offset="0.0421" stop-color="#585858"/><stop offset="0.0596" stop-color="#545454"/><stop offset="0.0771" stop-color="#525252"/><stop offset="0.0912" stop-color="#545454"/><stop offset="0.1017" stop-color="#6f6f6f"/><stop offset="0.1069" stop-color="#878787"/><stop offset="0.1122" stop-color="#9c9c9c"/><stop offset="0.1175" stop-color="#a8a8a8"/><stop offset="0.1262" stop-color="#a9a9a9"/><stop offset="0.1403" stop-color="#a8a8a8"/><stop offset="0.1648" stop-color="#a7a7a7"/><stop offset="0.1911" stop-color="#a3a3a3"/><stop offset="0.2174" stop-color="#9f9f9f"/><stop offset="0.2437" stop-color="#9e9e9e"/><stop offset="0.2700" stop-color="#9d9d9d"/><stop offset="0.2963" stop-color="#a1a1a1"/><stop offset="0.3226" stop-color="#a6a6a6"/><stop offset="0.3489" stop-color="#aaaaaa"/><stop offset="0.3752" stop-color="#adadad"/><stop offset="0.4015" stop-color="#adadad"/><stop offset="0.4278" stop-color="#adadad"/><stop offset="0.4541" stop-color="#acacac"/><stop offset="0.4804" stop-color="#a9a9a9"/><stop offset="0.4988" stop-color="#a8a8a8"/><stop offset="0.5014" stop-color="#a6a6a6"/><stop offset="0.5242" stop-color="#a0a0a0"/><stop offset="0.5505" stop-color="#9a9a9a"/><stop offset="0.5768" stop-color="#999999"/><stop offset="0.6031" stop-color="#989898"/><stop offset="0.6294" stop-color="#9a9a9a"/><stop offset="0.6557" stop-color="#9d9d9d"/><stop offset="0.6820" stop-color="#9a9a9a"/><stop offset="0.7083" stop-color="#979797"/><stop offset="0.7346" stop-color="#939393"/><stop offset="0.7609" stop-color="#8e8e8e"/><stop offset="0.7872" stop-color="#8c8c8c"/><stop offset="0.8135" stop-color="#898989"/><stop offset="0.8398" stop-color="#878787"/><stop offset="0.8661" stop-color="#848484"/><stop offset="0.8871" stop-color="#818181"/><stop offset="0.9081" stop-color="#7b7b7b"/><stop offset="0.9257" stop-color="#737373"/><stop offset="0.9397" stop-color="#6b6b6b"/><stop offset="0.9537" stop-color="#5e5e5e"/><stop offset="0.9660" stop-color="#4f4f4f"/><stop offset="0.9765" stop-color="#3e3e3e"/><stop offset="0.9853" stop-color="#2c2c2c"/><stop offset="0.9923" stop-color="#2a2a2a"/><stop offset="1.0007" stop-color="#2a2a2a"/></linearGradient><linearGradient id="r22" gradientUnits="userSpaceOnUse" x1="106.0" y1="0" x2="676.4" y2="0"><stop offset="0.0000" stop-color="#5f5f5f"/><stop offset="0.0105" stop-color="#5e5e5e"/><stop offset="0.0245" stop-color="#5b5b5b"/><stop offset="0.0421" stop-color="#575757"/><stop offset="0.0596" stop-color="#535353"/><stop offset="0.0771" stop-color="#515151"/><stop offset="0.0912" stop-color="#525252"/><stop offset="0.1017" stop-color="#6d6d6d"/><stop offset="0.1069" stop-color="#848484"/><stop offset="0.1122" stop-color="#9a9a9a"/><stop offset="0.1175" stop-color="#a7a7a7"/><stop offset="0.1262" stop-color="#a9a9a9"/><stop offset="0.1403" stop-color="#a8a8a8"/><stop offset="0.1648" stop-color="#a7a7a7"/><stop offset="0.1911" stop-color="#a3a3a3"/><stop offset="0.2174" stop-color="#9f9f9f"/><stop offset="0.2437" stop-color="#9e9e9e"/><stop offset="0.2700" stop-color="#9d9d9d"/><stop offset="0.2963" stop-color="#a1a1a1"/><stop offset="0.3226" stop-color="#a5a5a5"/><stop offset="0.3489" stop-color="#a9a9a9"/><stop offset="0.3752" stop-color="#acacac"/><stop offset="0.4015" stop-color="#acacac"/><stop offset="0.4278" stop-color="#acacac"/><stop offset="0.4541" stop-color="#ababab"/><stop offset="0.4804" stop-color="#a9a9a9"/><stop offset="0.4988" stop-color="#a8a8a8"/><stop offset="0.5014" stop-color="#a6a6a6"/><stop offset="0.5242" stop-color="#a1a1a1"/><stop offset="0.5505" stop-color="#9b9b9b"/><stop offset="0.5768" stop-color="#9a9a9a"/><stop offset="0.6031" stop-color="#9a9a9a"/><stop offset="0.6294" stop-color="#9c9c9c"/><stop offset="0.6557" stop-color="#9e9e9e"/><stop offset="0.6820" stop-color="#9c9c9c"/><stop offset="0.7083" stop-color="#999999"/><stop offset="0.7346" stop-color="#949494"/><stop offset="0.7609" stop-color="#8f8f8f"/><stop offset="0.7872" stop-color="#8d8d8d"/><stop offset="0.8135" stop-color="#8a8a8a"/><stop offset="0.8398" stop-color="#898989"/><stop offset="0.8661" stop-color="#868686"/><stop offset="0.8871" stop-color="#828282"/><stop offset="0.9081" stop-color="#7c7c7c"/><stop offset="0.9257" stop-color="#757575"/><stop offset="0.9397" stop-color="#6c6c6c"/><stop offset="0.9537" stop-color="#5f5f5f"/><stop offset="0.9660" stop-color="#505050"/><stop offset="0.9765" stop-color="#3f3f3f"/><stop offset="0.9853" stop-color="#2c2c2c"/><stop offset="0.9923" stop-color="#2a2a2a"/><stop offset="1.0007" stop-color="#2a2a2a"/></linearGradient><linearGradient id="r23" gradientUnits="userSpaceOnUse" x1="106.0" y1="0" x2="676.4" y2="0"><stop offset="0.0000" stop-color="#5e5e5e"/><stop offset="0.0105" stop-color="#5d5d5d"/><stop offset="0.0245" stop-color="#5a5a5a"/><stop offset="0.0421" stop-color="#555555"/><stop offset="0.0596" stop-color="#515151"/><stop offset="0.0771" stop-color="#505050"/><stop offset="0.0912" stop-color="#515151"/><stop offset="0.1017" stop-color="#6b6b6b"/><stop offset="0.1069" stop-color="#828282"/><stop offset="0.1122" stop-color="#979797"/><stop offset="0.1175" stop-color="#a6a6a6"/><stop offset="0.1262" stop-color="#a9a9a9"/><stop offset="0.1403" stop-color="#a8a8a8"/><stop offset="0.1648" stop-color="#a7a7a7"/><stop offset="0.1911" stop-color="#a3a3a3"/><stop offset="0.2174" stop-color="#9f9f9f"/><stop offset="0.2437" stop-color="#9e9e9e"/><stop offset="0.2700" stop-color="#9d9d9d"/><stop offset="0.2963" stop-color="#a0a0a0"/><stop offset="0.3226" stop-color="#a4a4a4"/><stop offset="0.3489" stop-color="#a8a8a8"/><stop offset="0.3752" stop-color="#ababab"/><stop offset="0.4015" stop-color="#ababab"/><stop offset="0.4278" stop-color="#ababab"/><stop offset="0.4541" stop-color="#aaaaaa"/><stop offset="0.4804" stop-color="#a9a9a9"/><stop offset="0.4988" stop-color="#a8a8a8"/><stop offset="0.5014" stop-color="#a6a6a6"/><stop offset="0.5242" stop-color="#a1a1a1"/><stop offset="0.5505" stop-color="#9b9b9b"/><stop offset="0.5768" stop-color="#9b9b9b"/><stop offset="0.6031" stop-color="#9b9b9b"/><stop offset="0.6294" stop-color="#9d9d9d"/><stop offset="0.6557" stop-color="#9f9f9f"/><stop offset="0.6820" stop-color="#9d9d9d"/><stop offset="0.7083" stop-color="#9b9b9b"/><stop offset="0.7346" stop-color="#969696"/><stop offset="0.7609" stop-color="#919191"/><stop offset="0.7872" stop-color="#8e8e8e"/><stop offset="0.8135" stop-color="#8c8c8c"/><stop offset="0.8398" stop-color="#8a8a8a"/><stop offset="0.8661" stop-color="#878787"/><stop offset="0.8871" stop-color="#838383"/><stop offset="0.9081" stop-color="#7d7d7d"/><stop offset="0.9257" stop-color="#767676"/><stop offset="0.9397" stop-color="#6d6d6d"/><stop offset="0.9537" stop-color="#606060"/><stop offset="0.9660" stop-color="#505050"/><stop offset="0.9765" stop-color="#3f3f3f"/><stop offset="0.9853" stop-color="#2c2c2c"/><stop offset="0.9923" stop-color="#2a2a2a"/><stop offset="1.0007" stop-color="#2a2a2a"/></linearGradient><linearGradient id="r24" gradientUnits="userSpaceOnUse" x1="106.0" y1="0" x2="676.4" y2="0"><stop offset="0.0000" stop-color="#5d5d5d"/><stop offset="0.0105" stop-color="#5c5c5c"/><stop offset="0.0245" stop-color="#595959"/><stop offset="0.0421" stop-color="#545454"/><stop offset="0.0596" stop-color="#505050"/><stop offset="0.0771" stop-color="#4f4f4f"/><stop offset="0.0912" stop-color="#505050"/><stop offset="0.1017" stop-color="#696969"/><stop offset="0.1069" stop-color="#7f7f7f"/><stop offset="0.1122" stop-color="#949494"/><stop offset="0.1175" stop-color="#a4a4a4"/><stop offset="0.1262" stop-color="#a9a9a9"/><stop offset="0.1403" stop-color="#a8a8a8"/><stop offset="0.1648" stop-color="#a7a7a7"/><stop offset="0.1911" stop-color="#a4a4a4"/><stop offset="0.2174" stop-color="#a1a1a1"/><stop offset="0.2437" stop-color="#9f9f9f"/><stop offset="0.2700" stop-color="#9e9e9e"/><stop offset="0.2963" stop-color="#a1a1a1"/><stop offset="0.3226" stop-color="#a4a4a4"/><stop offset="0.3489" stop-color="#a7a7a7"/><stop offset="0.3752" stop-color="#a9a9a9"/><stop offset="0.4015" stop-color="#a9a9a9"/><stop offset="0.4278" stop-color="#a9a9a9"/><stop offset="0.4541" stop-color="#a9a9a9"/><stop offset="0.4804" stop-color="#a7a7a7"/><stop offset="0.4988" stop-color="#a7a7a7"/><stop offset="0.5014" stop-color="#a6a6a6"/><stop offset="0.5242" stop-color="#a2a2a2"/><stop offset="0.5505" stop-color="#9d9d9d"/><stop offset="0.5768" stop-color="#9d9d9d"/><stop offset="0.6031" stop-color="#9d9d9d"/><stop offset="0.6294" stop-color="#9e9e9e"/><stop offset="0.6557" stop-color="#9f9f9f"/><stop offset="0.6820" stop-color="#9d9d9d"/><stop offset="0.7083" stop-color="#9b9b9b"/><stop offset="0.7346" stop-color="#979797"/><stop offset="0.7609" stop-color="#929292"/><stop offset="0.7872" stop-color="#909090"/><stop offset="0.8135" stop-color="#8d8d8d"/><stop offset="0.8398" stop-color="#8b8b8b"/><stop offset="0.8661" stop-color="#888888"/><stop offset="0.8871" stop-color="#858585"/><stop offset="0.9081" stop-color="#7e7e7e"/><stop offset="0.9257" stop-color="#777777"/><stop offset="0.9397" stop-color="#6e6e6e"/><stop offset="0.9537" stop-color="#616161"/><stop offset="0.9660" stop-color="#515151"/><stop offset="0.9765" stop-color="#3f3f3f"/><stop offset="0.9853" stop-color="#2c2c2c"/><stop offset="0.9923" stop-color="#2a2a2a"/><stop offset="1.0007" stop-color="#2a2a2a"/></linearGradient><linearGradient id="r25" gradientUnits="userSpaceOnUse" x1="106.0" y1="0" x2="676.4" y2="0"><stop offset="0.0000" stop-color="#5c5c5c"/><stop offset="0.0105" stop-color="#5b5b5b"/><stop offset="0.0245" stop-color="#585858"/><stop offset="0.0421" stop-color="#545454"/><stop offset="0.0596" stop-color="#505050"/><stop offset="0.0771" stop-color="#4e4e4e"/><stop offset="0.0912" stop-color="#4f4f4f"/><stop offset="0.1017" stop-color="#686868"/><stop offset="0.1069" stop-color="#7d7d7d"/><stop offset="0.1122" stop-color="#929292"/><stop offset="0.1175" stop-color="#a3a3a3"/><stop offset="0.1262" stop-color="#a9a9a9"/><stop offset="0.1403" stop-color="#a8a8a8"/><stop offset="0.1648" stop-color="#a7a7a7"/><stop offset="0.1911" stop-color="#a4a4a4"/><stop offset="0.2174" stop-color="#a2a2a2"/><stop offset="0.2437" stop-color="#a1a1a1"/><stop offset="0.2700" stop-color="#9f9f9f"/><stop offset="0.2963" stop-color="#a1a1a1"/><stop offset="0.3226" stop-color="#a4a4a4"/><stop offset="0.3489" stop-color="#a6a6a6"/><stop offset="0.3752" stop-color="#a8a8a8"/><stop offset="0.4015" stop-color="#a8a8a8"/><stop offset="0.4278" stop-color="#a8a8a8"/><stop offset="0.4541" stop-color="#a8a8a8"/><stop offset="0.4804" stop-color="#a6a6a6"/><stop offset="0.4988" stop-color="#a6a6a6"/><stop offset="0.5014" stop-color="#a6a6a6"/><stop offset="0.5242" stop-color="#a2a2a2"/><stop offset="0.5505" stop-color="#9e9e9e"/><stop offset="0.5768" stop-color="#9e9e9e"/><stop offset="0.6031" stop-color="#9e9e9e"/><stop offset="0.6294" stop-color="#9f9f9f"/><stop offset="0.6557" stop-color="#9f9f9f"/><stop offset="0.6820" stop-color="#9d9d9d"/><stop offset="0.7083" stop-color="#9b9b9b"/><stop offset="0.7346" stop-color="#979797"/><stop offset="0.7609" stop-color="#939393"/><stop offset="0.7872" stop-color="#919191"/><stop offset="0.8135" stop-color="#8e8e8e"/><stop offset="0.8398" stop-color="#8d8d8d"/><stop offset="0.8661" stop-color="#898989"/><stop offset="0.8871" stop-color="#868686"/><stop offset="0.9081" stop-color="#7f7f7f"/><stop offset="0.9257" stop-color="#787878"/><stop offset="0.9397" stop-color="#6e6e6e"/><stop offset="0.9537" stop-color="#616161"/><stop offset="0.9660" stop-color="#515151"/><stop offset="0.9765" stop-color="#3f3f3f"/><stop offset="0.9853" stop-color="#2c2c2c"/><stop offset="0.9923" stop-color="#2a2a2a"/><stop offset="1.0007" stop-color="#2a2a2a"/></linearGradient><linearGradient id="r26" gradientUnits="userSpaceOnUse" x1="106.0" y1="0" x2="676.4" y2="0"><stop offset="0.0000" stop-color="#5c5c5c"/><stop offset="0.0105" stop-color="#5b5b5b"/><stop offset="0.0245" stop-color="#585858"/><stop offset="0.0421" stop-color="#545454"/><stop offset="0.0596" stop-color="#505050"/><stop offset="0.0771" stop-color="#4e4e4e"/><stop offset="0.0912" stop-color="#4f4f4f"/><stop offset="0.1017" stop-color="#646464"/><stop offset="0.1069" stop-color="#777777"/><stop offset="0.1122" stop-color="#898989"/><stop offset="0.1175" stop-color="#989898"/><stop offset="0.1262" stop-color="#9d9d9d"/><stop offset="0.1403" stop-color="#9c9c9c"/><stop offset="0.1648" stop-color="#999999"/><stop offset="0.1911" stop-color="#979797"/><stop offset="0.2174" stop-color="#959595"/><stop offset="0.2437" stop-color="#969696"/><stop offset="0.2700" stop-color="#989898"/><stop offset="0.2963" stop-color="#9b9b9b"/><stop offset="0.3226" stop-color="#9e9e9e"/><stop offset="0.3489" stop-color="#a1a1a1"/><stop offset="0.3752" stop-color="#a4a4a4"/><stop offset="0.4015" stop-color="#a4a4a4"/><stop offset="0.4278" stop-color="#a4a4a4"/><stop offset="0.4541" stop-color="#a3a3a3"/><stop offset="0.4804" stop-color="#9f9f9f"/><stop offset="0.4988" stop-color="#9e9e9e"/><stop offset="0.5014" stop-color="#a4a4a4"/><stop offset="0.5242" stop-color="#a3a3a3"/><stop offset="0.5505" stop-color="#a1a1a1"/><stop offset="0.5768" stop-color="#9e9e9e"/><stop offset="0.6031" stop-color="#9b9b9b"/><stop offset="0.6294" stop-color="#9b9b9b"/><stop offset="0.6557" stop-color="#9b9b9b"/><stop offset="0.6820" stop-color="#999999"/><stop offset="0.7083" stop-color="#979797"/><stop offset="0.7346" stop-color="#929292"/><stop offset="0.7609" stop-color="#8d8d8d"/><stop offset="0.7872" stop-color="#8c8c8c"/><stop offset="0.8135" stop-color="#8b8b8b"/><stop offset="0.8398" stop-color="#898989"/><stop offset="0.8661" stop-color="#868686"/><stop offset="0.8871" stop-color="#828282"/><stop offset="0.9081" stop-color="#7c7c7c"/><stop offset="0.9257" stop-color="#757575"/><stop offset="0.9397" stop-color="#6c6c6c"/><stop offset="0.9537" stop-color="#5f5f5f"/><stop offset="0.9660" stop-color="#505050"/><stop offset="0.9765" stop-color="#3f3f3f"/><stop offset="0.9853" stop-color="#2d2d2d"/><stop offset="0.9923" stop-color="#2b2b2b"/><stop offset="1.0007" stop-color="#2b2b2b"/></linearGradient><linearGradient id="r27" gradientUnits="userSpaceOnUse" x1="106.0" y1="0" x2="676.4" y2="0"><stop offset="0.0000" stop-color="#5c5c5c"/><stop offset="0.0105" stop-color="#5b5b5b"/><stop offset="0.0245" stop-color="#585858"/><stop offset="0.0421" stop-color="#545454"/><stop offset="0.0596" stop-color="#505050"/><stop offset="0.0771" stop-color="#4e4e4e"/><stop offset="0.0912" stop-color="#4f4f4f"/><stop offset="0.1017" stop-color="#636363"/><stop offset="0.1069" stop-color="#767676"/><stop offset="0.1122" stop-color="#888888"/><stop offset="0.1175" stop-color="#969696"/><stop offset="0.1262" stop-color="#9d9d9d"/><stop offset="0.1403" stop-color="#9b9b9b"/><stop offset="0.1648" stop-color="#989898"/><stop offset="0.1911" stop-color="#969696"/><stop offset="0.2174" stop-color="#949494"/><stop offset="0.2437" stop-color="#959595"/><stop offset="0.2700" stop-color="#979797"/><stop offset="0.2963" stop-color="#9b9b9b"/><stop offset="0.3226" stop-color="#9f9f9f"/><stop offset="0.3489" stop-color="#a2a2a2"/><stop offset="0.3752" stop-color="#a6a6a6"/><stop offset="0.4015" stop-color="#a6a6a6"/><stop offset="0.4278" stop-color="#a6a6a6"/><stop offset="0.4541" stop-color="#a4a4a4"/><stop offset="0.4804" stop-color="#a0a0a0"/><stop offset="0.4988" stop-color="#9f9f9f"/><stop offset="0.5014" stop-color="#a4a4a4"/><stop offset="0.5242" stop-color="#a2a2a2"/><stop offset="0.5505" stop-color="#a1a1a1"/><stop offset="0.5768" stop-color="#9e9e9e"/><stop offset="0.6031" stop-color="#9c9c9c"/><stop offset="0.6294" stop-color="#9c9c9c"/><stop offset="0.6557" stop-color="#9c9c9c"/><stop offset="0.6820" stop-color="#9a9a9a"/><stop offset="0.7083" stop-color="#989898"/><stop offset="0.7346" stop-color="#929292"/><stop offset="0.7609" stop-color="#8d8d8d"/><stop offset="0.7872" stop-color="#8c8c8c"/><stop offset="0.8135" stop-color="#8a8a8a"/><stop offset="0.8398" stop-color="#888888"/><stop offset="0.8661" stop-color="#858585"/><stop offset="0.8871" stop-color="#828282"/><stop offset="0.9081" stop-color="#7c7c7c"/><stop offset="0.9257" stop-color="#757575"/><stop offset="0.9397" stop-color="#6c6c6c"/><stop offset="0.9537" stop-color="#5f5f5f"/><stop offset="0.9660" stop-color="#505050"/><stop offset="0.9765" stop-color="#3f3f3f"/><stop offset="0.9853" stop-color="#2d2d2d"/><stop offset="0.9923" stop-color="#2b2b2b"/><stop offset="1.0007" stop-color="#2b2b2b"/></linearGradient><linearGradient id="r28" gradientUnits="userSpaceOnUse" x1="106.0" y1="0" x2="676.4" y2="0"><stop offset="0.0000" stop-color="#5c5c5c"/><stop offset="0.0105" stop-color="#5b5b5b"/><stop offset="0.0245" stop-color="#585858"/><stop offset="0.0421" stop-color="#545454"/><stop offset="0.0596" stop-color="#505050"/><stop offset="0.0771" stop-color="#4e4e4e"/><stop offset="0.0912" stop-color="#4f4f4f"/><stop offset="0.1017" stop-color="#626262"/><stop offset="0.1069" stop-color="#737373"/><stop offset="0.1122" stop-color="#848484"/><stop offset="0.1175" stop-color="#939393"/><stop offset="0.1262" stop-color="#9a9a9a"/><stop offset="0.1403" stop-color="#989898"/><stop offset="0.1648" stop-color="#959595"/><stop offset="0.1911" stop-color="#939393"/><stop offset="0.2174" stop-color="#919191"/><stop offset="0.2437" stop-color="#929292"/><stop offset="0.2700" stop-color="#939393"/><stop offset="0.2963" stop-color="#9a9a9a"/><stop offset="0.3226" stop-color="#a1a1a1"/><stop offset="0.3489" stop-color="#a6a6a6"/><stop offset="0.3752" stop-color="#ababab"/><stop offset="0.4015" stop-color="#ababab"/><stop offset="0.4278" stop-color="#ababab"/><stop offset="0.4541" stop-color="#a8a8a8"/><stop offset="0.4804" stop-color="#a3a3a3"/><stop offset="0.4988" stop-color="#a2a2a2"/><stop offset="0.5014" stop-color="#a3a3a3"/><stop offset="0.5242" stop-color="#a2a2a2"/><stop offset="0.5505" stop-color="#a1a1a1"/><stop offset="0.5768" stop-color="#9f9f9f"/><stop offset="0.6031" stop-color="#9d9d9d"/><stop offset="0.6294" stop-color="#9d9d9d"/><stop offset="0.6557" stop-color="#9d9d9d"/><stop offset="0.6820" stop-color="#9b9b9b"/><stop offset="0.7083" stop-color="#999999"/><stop offset="0.7346" stop-color="#939393"/><stop offset="0.7609" stop-color="#8d8d8d"/><stop offset="0.7872" stop-color="#8b8b8b"/><stop offset="0.8135" stop-color="#898989"/><stop offset="0.8398" stop-color="#878787"/><stop offset="0.8661" stop-color="#848484"/><stop offset="0.8871" stop-color="#818181"/><stop offset="0.9081" stop-color="#7b7b7b"/><stop offset="0.9257" stop-color="#747474"/><stop offset="0.9397" stop-color="#6b6b6b"/><stop offset="0.9537" stop-color="#5f5f5f"/><stop offset="0.9660" stop-color="#505050"/><stop offset="0.9765" stop-color="#3f3f3f"/><stop offset="0.9853" stop-color="#2d2d2d"/><stop offset="0.9923" stop-color="#2b2b2b"/><stop offset="1.0007" stop-color="#2b2b2b"/></linearGradient><linearGradient id="r29" gradientUnits="userSpaceOnUse" x1="106.0" y1="0" x2="676.4" y2="0"><stop offset="0.0000" stop-color="#5c5c5c"/><stop offset="0.0105" stop-color="#5b5b5b"/><stop offset="0.0245" stop-color="#585858"/><stop offset="0.0421" stop-color="#545454"/><stop offset="0.0596" stop-color="#505050"/><stop offset="0.0771" stop-color="#4e4e4e"/><stop offset="0.0912" stop-color="#4f4f4f"/><stop offset="0.1017" stop-color="#626262"/><stop offset="0.1069" stop-color="#727272"/><stop offset="0.1122" stop-color="#838383"/><stop offset="0.1175" stop-color="#919191"/><stop offset="0.1262" stop-color="#989898"/><stop offset="0.1403" stop-color="#969696"/><stop offset="0.1648" stop-color="#949494"/><stop offset="0.1911" stop-color="#919191"/><stop offset="0.2174" stop-color="#8f8f8f"/><stop offset="0.2437" stop-color="#909090"/><stop offset="0.2700" stop-color="#919191"/><stop offset="0.2963" stop-color="#9a9a9a"/><stop offset="0.3226" stop-color="#a2a2a2"/><stop offset="0.3489" stop-color="#a8a8a8"/><stop offset="0.3752" stop-color="#adadad"/><stop offset="0.4015" stop-color="#adadad"/><stop offset="0.4278" stop-color="#adadad"/><stop offset="0.4541" stop-color="#aaaaaa"/><stop offset="0.4804" stop-color="#a5a5a5"/><stop offset="0.4988" stop-color="#a3a3a3"/><stop offset="0.5014" stop-color="#a2a2a2"/><stop offset="0.5242" stop-color="#a1a1a1"/><stop offset="0.5505" stop-color="#a1a1a1"/><stop offset="0.5768" stop-color="#9f9f9f"/><stop offset="0.6031" stop-color="#9e9e9e"/><stop offset="0.6294" stop-color="#9e9e9e"/><stop offset="0.6557" stop-color="#9e9e9e"/><stop offset="0.6820" stop-color="#9c9c9c"/><stop offset="0.7083" stop-color="#9a9a9a"/><stop offset="0.7346" stop-color="#949494"/><stop offset="0.7609" stop-color="#8d8d8d"/><stop offset="0.7872" stop-color="#8b8b8b"/><stop offset="0.8135" stop-color="#888888"/><stop offset="0.8398" stop-color="#868686"/><stop offset="0.8661" stop-color="#838383"/><stop offset="0.8871" stop-color="#808080"/><stop offset="0.9081" stop-color="#7a7a7a"/><stop offset="0.9257" stop-color="#737373"/><stop offset="0.9397" stop-color="#6a6a6a"/><stop offset="0.9537" stop-color="#5e5e5e"/><stop offset="0.9660" stop-color="#505050"/><stop offset="0.9765" stop-color="#3f3f3f"/><stop offset="0.9853" stop-color="#2d2d2d"/><stop offset="0.9923" stop-color="#2c2c2c"/><stop offset="1.0007" stop-color="#2b2b2b"/></linearGradient><linearGradient id="r30" gradientUnits="userSpaceOnUse" x1="106.0" y1="0" x2="676.4" y2="0"><stop offset="0.0000" stop-color="#5c5c5c"/><stop offset="0.0105" stop-color="#5b5b5b"/><stop offset="0.0245" stop-color="#585858"/><stop offset="0.0421" stop-color="#545454"/><stop offset="0.0596" stop-color="#505050"/><stop offset="0.0771" stop-color="#4e4e4e"/><stop offset="0.0912" stop-color="#4f4f4f"/><stop offset="0.1017" stop-color="#616161"/><stop offset="0.1069" stop-color="#707070"/><stop offset="0.1122" stop-color="#808080"/><stop offset="0.1175" stop-color="#8d8d8d"/><stop offset="0.1262" stop-color="#959595"/><stop offset="0.1403" stop-color="#939393"/><stop offset="0.1648" stop-color="#909090"/><stop offset="0.1911" stop-color="#8d8d8d"/><stop offset="0.2174" stop-color="#8a8a8a"/><stop offset="0.2437" stop-color="#8c8c8c"/><stop offset="0.2700" stop-color="#8e8e8e"/><stop offset="0.2963" stop-color="#989898"/><stop offset="0.3226" stop-color="#a2a2a2"/><stop offset="0.3489" stop-color="#a8a8a8"/><stop offset="0.3752" stop-color="#afafaf"/><stop offset="0.4015" stop-color="#aeaeae"/><stop offset="0.4278" stop-color="#adadad"/><stop offset="0.4541" stop-color="#aaaaaa"/><stop offset="0.4804" stop-color="#a4a4a4"/><stop offset="0.4988" stop-color="#a2a2a2"/><stop offset="0.5014" stop-color="#a1a1a1"/><stop offset="0.5242" stop-color="#a1a1a1"/><stop offset="0.5505" stop-color="#a1a1a1"/><stop offset="0.5768" stop-color="#a0a0a0"/><stop offset="0.6031" stop-color="#9f9f9f"/><stop offset="0.6294" stop-color="#a0a0a0"/><stop offset="0.6557" stop-color="#a1a1a1"/><stop offset="0.6820" stop-color="#9f9f9f"/><stop offset="0.7083" stop-color="#9e9e9e"/><stop offset="0.7346" stop-color="#979797"/><stop offset="0.7609" stop-color="#919191"/><stop offset="0.7872" stop-color="#8e8e8e"/><stop offset="0.8135" stop-color="#8c8c8c"/><stop offset="0.8398" stop-color="#8a8a8a"/><stop offset="0.8661" stop-color="#878787"/><stop offset="0.8871" stop-color="#838383"/><stop offset="0.9081" stop-color="#7d7d7d"/><stop offset="0.9257" stop-color="#757575"/><stop offset="0.9397" stop-color="#6c6c6c"/><stop offset="0.9537" stop-color="#606060"/><stop offset="0.9660" stop-color="#505050"/><stop offset="0.9765" stop-color="#3f3f3f"/><stop offset="0.9853" stop-color="#2c2c2c"/><stop offset="0.9923" stop-color="#2b2b2b"/><stop offset="1.0007" stop-color="#2a2a2a"/></linearGradient><linearGradient id="r31" gradientUnits="userSpaceOnUse" x1="106.0" y1="0" x2="676.4" y2="0"><stop offset="0.0000" stop-color="#5c5c5c"/><stop offset="0.0105" stop-color="#5b5b5b"/><stop offset="0.0245" stop-color="#585858"/><stop offset="0.0421" stop-color="#545454"/><stop offset="0.0596" stop-color="#505050"/><stop offset="0.0771" stop-color="#4e4e4e"/><stop offset="0.0912" stop-color="#4f4f4f"/><stop offset="0.1017" stop-color="#606060"/><stop offset="0.1069" stop-color="#6f6f6f"/><stop offset="0.1122" stop-color="#7e7e7e"/><stop offset="0.1175" stop-color="#8a8a8a"/><stop offset="0.1262" stop-color="#919191"/><stop offset="0.1403" stop-color="#8f8f8f"/><stop offset="0.1648" stop-color="#8c8c8c"/><stop offset="0.1911" stop-color="#888888"/><stop offset="0.2174" stop-color="#858585"/><stop offset="0.2437" stop-color="#888888"/><stop offset="0.2700" stop-color="#8b8b8b"/><stop offset="0.2963" stop-color="#969696"/><stop offset="0.3226" stop-color="#a2a2a2"/><stop offset="0.3489" stop-color="#a9a9a9"/><stop offset="0.3752" stop-color="#b0b0b0"/><stop offset="0.4015" stop-color="#afafaf"/><stop offset="0.4278" stop-color="#adadad"/><stop offset="0.4541" stop-color="#a9a9a9"/><stop offset="0.4804" stop-color="#a3a3a3"/><stop offset="0.4988" stop-color="#a1a1a1"/><stop offset="0.5014" stop-color="#9f9f9f"/><stop offset="0.5242" stop-color="#a0a0a0"/><stop offset="0.5505" stop-color="#a1a1a1"/><stop offset="0.5768" stop-color="#a1a1a1"/><stop offset="0.6031" stop-color="#a1a1a1"/><stop offset="0.6294" stop-color="#a2a2a2"/><stop offset="0.6557" stop-color="#a3a3a3"/><stop offset="0.6820" stop-color="#a2a2a2"/><stop offset="0.7083" stop-color="#a2a2a2"/><stop offset="0.7346" stop-color="#9b9b9b"/><stop offset="0.7609" stop-color="#959595"/><stop offset="0.7872" stop-color="#929292"/><stop offset="0.8135" stop-color="#909090"/><stop offset="0.8398" stop-color="#8e8e8e"/><stop offset="0.8661" stop-color="#8b8b8b"/><stop offset="0.8871" stop-color="#868686"/><stop offset="0.9081" stop-color="#808080"/><stop offset="0.9257" stop-color="#787878"/><stop offset="0.9397" stop-color="#6e6e6e"/><stop offset="0.9537" stop-color="#616161"/><stop offset="0.9660" stop-color="#515151"/><stop offset="0.9765" stop-color="#3f3f3f"/><stop offset="0.9853" stop-color="#2b2b2b"/><stop offset="0.9923" stop-color="#2a2a2a"/><stop offset="1.0007" stop-color="#292929"/></linearGradient><linearGradient id="r32" gradientUnits="userSpaceOnUse" x1="106.0" y1="0" x2="676.4" y2="0"><stop offset="0.0000" stop-color="#5c5c5c"/><stop offset="0.0105" stop-color="#5b5b5b"/><stop offset="0.0245" stop-color="#585858"/><stop offset="0.0421" stop-color="#545454"/><stop offset="0.0596" stop-color="#505050"/><stop offset="0.0771" stop-color="#4e4e4e"/><stop offset="0.0912" stop-color="#4f4f4f"/><stop offset="0.1017" stop-color="#5f5f5f"/><stop offset="0.1069" stop-color="#6d6d6d"/><stop offset="0.1122" stop-color="#7c7c7c"/><stop offset="0.1175" stop-color="#878787"/><stop offset="0.1262" stop-color="#8e8e8e"/><stop offset="0.1403" stop-color="#8c8c8c"/><stop offset="0.1648" stop-color="#8a8a8a"/><stop offset="0.1911" stop-color="#878787"/><stop offset="0.2174" stop-color="#838383"/><stop offset="0.2437" stop-color="#868686"/><stop offset="0.2700" stop-color="#898989"/><stop offset="0.2963" stop-color="#949494"/><stop offset="0.3226" stop-color="#9f9f9f"/><stop offset="0.3489" stop-color="#a7a7a7"/><stop offset="0.3752" stop-color="#afafaf"/><stop offset="0.4015" stop-color="#adadad"/><stop offset="0.4278" stop-color="#acacac"/><stop offset="0.4541" stop-color="#a8a8a8"/><stop offset="0.4804" stop-color="#a2a2a2"/><stop offset="0.4988" stop-color="#9f9f9f"/><stop offset="0.5014" stop-color="#9e9e9e"/><stop offset="0.5242" stop-color="#9f9f9f"/><stop offset="0.5505" stop-color="#a1a1a1"/><stop offset="0.5768" stop-color="#a1a1a1"/><stop offset="0.6031" stop-color="#a1a1a1"/><stop offset="0.6294" stop-color="#a2a2a2"/><stop offset="0.6557" stop-color="#a4a4a4"/><stop offset="0.6820" stop-color="#a4a4a4"/><stop offset="0.7083" stop-color="#a3a3a3"/><stop offset="0.7346" stop-color="#9c9c9c"/><stop offset="0.7609" stop-color="#959595"/><stop offset="0.7872" stop-color="#929292"/><stop offset="0.8135" stop-color="#8f8f8f"/><stop offset="0.8398" stop-color="#8d8d8d"/><stop offset="0.8661" stop-color="#8a8a8a"/><stop offset="0.8871" stop-color="#868686"/><stop offset="0.9081" stop-color="#7f7f7f"/><stop offset="0.9257" stop-color="#777777"/><stop offset="0.9397" stop-color="#6e6e6e"/><stop offset="0.9537" stop-color="#616161"/><stop offset="0.9660" stop-color="#515151"/><stop offset="0.9765" stop-color="#3f3f3f"/><stop offset="0.9853" stop-color="#2b2b2b"/><stop offset="0.9923" stop-color="#2a2a2a"/><stop offset="1.0007" stop-color="#292929"/></linearGradient><linearGradient id="r33" gradientUnits="userSpaceOnUse" x1="106.0" y1="0" x2="676.4" y2="0"><stop offset="0.0000" stop-color="#5c5c5c"/><stop offset="0.0105" stop-color="#5b5b5b"/><stop offset="0.0245" stop-color="#585858"/><stop offset="0.0421" stop-color="#545454"/><stop offset="0.0596" stop-color="#505050"/><stop offset="0.0771" stop-color="#4e4e4e"/><stop offset="0.0912" stop-color="#4f4f4f"/><stop offset="0.1017" stop-color="#5e5e5e"/><stop offset="0.1069" stop-color="#6c6c6c"/><stop offset="0.1122" stop-color="#797979"/><stop offset="0.1175" stop-color="#848484"/><stop offset="0.1262" stop-color="#8a8a8a"/><stop offset="0.1403" stop-color="#898989"/><stop offset="0.1648" stop-color="#878787"/><stop offset="0.1911" stop-color="#858585"/><stop offset="0.2174" stop-color="#828282"/><stop offset="0.2437" stop-color="#858585"/><stop offset="0.2700" stop-color="#878787"/><stop offset="0.2963" stop-color="#929292"/><stop offset="0.3226" stop-color="#9d9d9d"/><stop offset="0.3489" stop-color="#a5a5a5"/><stop offset="0.3752" stop-color="#adadad"/><stop offset="0.4015" stop-color="#acacac"/><stop offset="0.4278" stop-color="#ababab"/><stop offset="0.4541" stop-color="#a7a7a7"/><stop offset="0.4804" stop-color="#a0a0a0"/><stop offset="0.4988" stop-color="#9e9e9e"/><stop offset="0.5014" stop-color="#9d9d9d"/><stop offset="0.5242" stop-color="#9f9f9f"/><stop offset="0.5505" stop-color="#a1a1a1"/><stop offset="0.5768" stop-color="#a1a1a1"/><stop offset="0.6031" stop-color="#a1a1a1"/><stop offset="0.6294" stop-color="#a3a3a3"/><stop offset="0.6557" stop-color="#a6a6a6"/><stop offset="0.6820" stop-color="#a5a5a5"/><stop offset="0.7083" stop-color="#a4a4a4"/><stop offset="0.7346" stop-color="#9c9c9c"/><stop offset="0.7609" stop-color="#949494"/><stop offset="0.7872" stop-color="#919191"/><stop offset="0.8135" stop-color="#8e8e8e"/><stop offset="0.8398" stop-color="#8c8c8c"/><stop offset="0.8661" stop-color="#898989"/><stop offset="0.8871" stop-color="#858585"/><stop offset="0.9081" stop-color="#7e7e7e"/><stop offset="0.9257" stop-color="#767676"/><stop offset="0.9397" stop-color="#6d6d6d"/><stop offset="0.9537" stop-color="#606060"/><stop offset="0.9660" stop-color="#505050"/><stop offset="0.9765" stop-color="#3e3e3e"/><stop offset="0.9853" stop-color="#2b2b2b"/><stop offset="0.9923" stop-color="#292929"/><stop offset="1.0007" stop-color="#292929"/></linearGradient><linearGradient id="r34" gradientUnits="userSpaceOnUse" x1="106.0" y1="0" x2="676.4" y2="0"><stop offset="0.0000" stop-color="#5c5c5c"/><stop offset="0.0105" stop-color="#5b5b5b"/><stop offset="0.0245" stop-color="#585858"/><stop offset="0.0421" stop-color="#545454"/><stop offset="0.0596" stop-color="#505050"/><stop offset="0.0771" stop-color="#4e4e4e"/><stop offset="0.0912" stop-color="#4f4f4f"/><stop offset="0.1017" stop-color="#5e5e5e"/><stop offset="0.1069" stop-color="#6b6b6b"/><stop offset="0.1122" stop-color="#777777"/><stop offset="0.1175" stop-color="#828282"/><stop offset="0.1262" stop-color="#888888"/><stop offset="0.1403" stop-color="#878787"/><stop offset="0.1648" stop-color="#868686"/><stop offset="0.1911" stop-color="#848484"/><stop offset="0.2174" stop-color="#818181"/><stop offset="0.2437" stop-color="#838383"/><stop offset="0.2700" stop-color="#858585"/><stop offset="0.2963" stop-color="#909090"/><stop offset="0.3226" stop-color="#9a9a9a"/><stop offset="0.3489" stop-color="#a2a2a2"/><stop offset="0.3752" stop-color="#aaaaaa"/><stop offset="0.4015" stop-color="#a9a9a9"/><stop offset="0.4278" stop-color="#a8a8a8"/><stop offset="0.4541" stop-color="#a4a4a4"/><stop offset="0.4804" stop-color="#9e9e9e"/><stop offset="0.4988" stop-color="#9c9c9c"/><stop offset="0.5014" stop-color="#9c9c9c"/><stop offset="0.5242" stop-color="#9d9d9d"/><stop offset="0.5505" stop-color="#9f9f9f"/><stop offset="0.5768" stop-color="#a0a0a0"/><stop offset="0.6031" stop-color="#a1a1a1"/><stop offset="0.6294" stop-color="#a3a3a3"/><stop offset="0.6557" stop-color="#a5a5a5"/><stop offset="0.6820" stop-color="#a4a4a4"/><stop offset="0.7083" stop-color="#a3a3a3"/><stop offset="0.7346" stop-color="#9b9b9b"/><stop offset="0.7609" stop-color="#939393"/><stop offset="0.7872" stop-color="#909090"/><stop offset="0.8135" stop-color="#8d8d8d"/><stop offset="0.8398" stop-color="#8b8b8b"/><stop offset="0.8661" stop-color="#888888"/><stop offset="0.8871" stop-color="#848484"/><stop offset="0.9081" stop-color="#7d7d7d"/><stop offset="0.9257" stop-color="#757575"/><stop offset="0.9397" stop-color="#6c6c6c"/><stop offset="0.9537" stop-color="#5f5f5f"/><stop offset="0.9660" stop-color="#505050"/><stop offset="0.9765" stop-color="#3e3e3e"/><stop offset="0.9853" stop-color="#2b2b2b"/><stop offset="0.9923" stop-color="#292929"/><stop offset="1.0007" stop-color="#292929"/></linearGradient><linearGradient id="r35" gradientUnits="userSpaceOnUse" x1="106.0" y1="0" x2="676.4" y2="0"><stop offset="0.0000" stop-color="#5b5b5b"/><stop offset="0.0105" stop-color="#5a5a5a"/><stop offset="0.0245" stop-color="#575757"/><stop offset="0.0421" stop-color="#535353"/><stop offset="0.0596" stop-color="#4f4f4f"/><stop offset="0.0771" stop-color="#4d4d4d"/><stop offset="0.0912" stop-color="#4e4e4e"/><stop offset="0.1017" stop-color="#5d5d5d"/><stop offset="0.1069" stop-color="#696969"/><stop offset="0.1122" stop-color="#767676"/><stop offset="0.1175" stop-color="#808080"/><stop offset="0.1262" stop-color="#868686"/><stop offset="0.1403" stop-color="#858585"/><stop offset="0.1648" stop-color="#858585"/><stop offset="0.1911" stop-color="#838383"/><stop offset="0.2174" stop-color="#818181"/><stop offset="0.2437" stop-color="#828282"/><stop offset="0.2700" stop-color="#838383"/><stop offset="0.2963" stop-color="#8e8e8e"/><stop offset="0.3226" stop-color="#989898"/><stop offset="0.3489" stop-color="#9f9f9f"/><stop offset="0.3752" stop-color="#a6a6a6"/><stop offset="0.4015" stop-color="#a6a6a6"/><stop offset="0.4278" stop-color="#a6a6a6"/><stop offset="0.4541" stop-color="#a2a2a2"/><stop offset="0.4804" stop-color="#9b9b9b"/><stop offset="0.4988" stop-color="#999999"/><stop offset="0.5014" stop-color="#9a9a9a"/><stop offset="0.5242" stop-color="#9c9c9c"/><stop offset="0.5505" stop-color="#9e9e9e"/><stop offset="0.5768" stop-color="#9f9f9f"/><stop offset="0.6031" stop-color="#a1a1a1"/><stop offset="0.6294" stop-color="#a3a3a3"/><stop offset="0.6557" stop-color="#a5a5a5"/><stop offset="0.6820" stop-color="#a4a4a4"/><stop offset="0.7083" stop-color="#a2a2a2"/><stop offset="0.7346" stop-color="#9a9a9a"/><stop offset="0.7609" stop-color="#929292"/><stop offset="0.7872" stop-color="#8f8f8f"/><stop offset="0.8135" stop-color="#8c8c8c"/><stop offset="0.8398" stop-color="#8a8a8a"/><stop offset="0.8661" stop-color="#878787"/><stop offset="0.8871" stop-color="#828282"/><stop offset="0.9081" stop-color="#7c7c7c"/><stop offset="0.9257" stop-color="#747474"/><stop offset="0.9397" stop-color="#6b6b6b"/><stop offset="0.9537" stop-color="#5e5e5e"/><stop offset="0.9660" stop-color="#4f4f4f"/><stop offset="0.9765" stop-color="#3e3e3e"/><stop offset="0.9853" stop-color="#2b2b2b"/><stop offset="0.9923" stop-color="#292929"/><stop offset="1.0007" stop-color="#292929"/></linearGradient><linearGradient id="r36" gradientUnits="userSpaceOnUse" x1="106.0" y1="0" x2="676.4" y2="0"><stop offset="0.0000" stop-color="#585858"/><stop offset="0.0105" stop-color="#575757"/><stop offset="0.0245" stop-color="#545454"/><stop offset="0.0421" stop-color="#505050"/><stop offset="0.0596" stop-color="#4c4c4c"/><stop offset="0.0771" stop-color="#4a4a4a"/><stop offset="0.0912" stop-color="#4b4b4b"/><stop offset="0.1017" stop-color="#5a5a5a"/><stop offset="0.1069" stop-color="#666666"/><stop offset="0.1122" stop-color="#737373"/><stop offset="0.1175" stop-color="#7d7d7d"/><stop offset="0.1262" stop-color="#838383"/><stop offset="0.1403" stop-color="#838383"/><stop offset="0.1648" stop-color="#828282"/><stop offset="0.1911" stop-color="#818181"/><stop offset="0.2174" stop-color="#808080"/><stop offset="0.2437" stop-color="#808080"/><stop offset="0.2700" stop-color="#808080"/><stop offset="0.2963" stop-color="#888888"/><stop offset="0.3226" stop-color="#909090"/><stop offset="0.3489" stop-color="#969696"/><stop offset="0.3752" stop-color="#9d9d9d"/><stop offset="0.4015" stop-color="#9d9d9d"/><stop offset="0.4278" stop-color="#9d9d9d"/><stop offset="0.4541" stop-color="#9a9a9a"/><stop offset="0.4804" stop-color="#949494"/><stop offset="0.4988" stop-color="#939393"/><stop offset="0.5014" stop-color="#989898"/><stop offset="0.5242" stop-color="#9a9a9a"/><stop offset="0.5505" stop-color="#9b9b9b"/><stop offset="0.5768" stop-color="#9d9d9d"/><stop offset="0.6031" stop-color="#9e9e9e"/><stop offset="0.6294" stop-color="#a0a0a0"/><stop offset="0.6557" stop-color="#a2a2a2"/><stop offset="0.6820" stop-color="#a0a0a0"/><stop offset="0.7083" stop-color="#9f9f9f"/><stop offset="0.7346" stop-color="#989898"/><stop offset="0.7609" stop-color="#919191"/><stop offset="0.7872" stop-color="#8e8e8e"/><stop offset="0.8135" stop-color="#8b8b8b"/><stop offset="0.8398" stop-color="#898989"/><stop offset="0.8661" stop-color="#868686"/><stop offset="0.8871" stop-color="#828282"/><stop offset="0.9081" stop-color="#7b7b7b"/><stop offset="0.9257" stop-color="#737373"/><stop offset="0.9397" stop-color="#6a6a6a"/><stop offset="0.9537" stop-color="#5e5e5e"/><stop offset="0.9660" stop-color="#4e4e4e"/><stop offset="0.9765" stop-color="#3d3d3d"/><stop offset="0.9853" stop-color="#2b2b2b"/><stop offset="0.9923" stop-color="#292929"/><stop offset="1.0007" stop-color="#282828"/></linearGradient><linearGradient id="r37" gradientUnits="userSpaceOnUse" x1="106.0" y1="0" x2="676.4" y2="0"><stop offset="0.0000" stop-color="#525252"/><stop offset="0.0105" stop-color="#525252"/><stop offset="0.0245" stop-color="#4f4f4f"/><stop offset="0.0421" stop-color="#4a4a4a"/><stop offset="0.0596" stop-color="#464646"/><stop offset="0.0771" stop-color="#444444"/><stop offset="0.0912" stop-color="#464646"/><stop offset="0.1017" stop-color="#555555"/><stop offset="0.1069" stop-color="#626262"/><stop offset="0.1122" stop-color="#6f6f6f"/><stop offset="0.1175" stop-color="#7a7a7a"/><stop offset="0.1262" stop-color="#818181"/><stop offset="0.1403" stop-color="#808080"/><stop offset="0.1648" stop-color="#808080"/><stop offset="0.1911" stop-color="#808080"/><stop offset="0.2174" stop-color="#808080"/><stop offset="0.2437" stop-color="#7e7e7e"/><stop offset="0.2700" stop-color="#7d7d7d"/><stop offset="0.2963" stop-color="#838383"/><stop offset="0.3226" stop-color="#888888"/><stop offset="0.3489" stop-color="#8e8e8e"/><stop offset="0.3752" stop-color="#949494"/><stop offset="0.4015" stop-color="#949494"/><stop offset="0.4278" stop-color="#949494"/><stop offset="0.4541" stop-color="#929292"/><stop offset="0.4804" stop-color="#8e8e8e"/><stop offset="0.4988" stop-color="#8c8c8c"/><stop offset="0.5014" stop-color="#959595"/><stop offset="0.5242" stop-color="#979797"/><stop offset="0.5505" stop-color="#999999"/><stop offset="0.5768" stop-color="#9a9a9a"/><stop offset="0.6031" stop-color="#9b9b9b"/><stop offset="0.6294" stop-color="#9d9d9d"/><stop offset="0.6557" stop-color="#9e9e9e"/><stop offset="0.6820" stop-color="#9d9d9d"/><stop offset="0.7083" stop-color="#9c9c9c"/><stop offset="0.7346" stop-color="#969696"/><stop offset="0.7609" stop-color="#909090"/><stop offset="0.7872" stop-color="#8d8d8d"/><stop offset="0.8135" stop-color="#8a8a8a"/><stop offset="0.8398" stop-color="#888888"/><stop offset="0.8661" stop-color="#858585"/><stop offset="0.8871" stop-color="#818181"/><stop offset="0.9081" stop-color="#7a7a7a"/><stop offset="0.9257" stop-color="#727272"/><stop offset="0.9397" stop-color="#6a6a6a"/><stop offset="0.9537" stop-color="#5d5d5d"/><stop offset="0.9660" stop-color="#4e4e4e"/><stop offset="0.9765" stop-color="#3c3c3c"/><stop offset="0.9853" stop-color="#2a2a2a"/><stop offset="0.9923" stop-color="#282828"/><stop offset="1.0007" stop-color="#282828"/></linearGradient><linearGradient id="r38" gradientUnits="userSpaceOnUse" x1="106.0" y1="0" x2="676.4" y2="0"><stop offset="0.0000" stop-color="#4c4c4c"/><stop offset="0.0105" stop-color="#4b4b4b"/><stop offset="0.0245" stop-color="#484848"/><stop offset="0.0421" stop-color="#434343"/><stop offset="0.0596" stop-color="#3f3f3f"/><stop offset="0.0771" stop-color="#3e3e3e"/><stop offset="0.0912" stop-color="#3f3f3f"/><stop offset="0.1017" stop-color="#4d4d4d"/><stop offset="0.1069" stop-color="#5a5a5a"/><stop offset="0.1122" stop-color="#666666"/><stop offset="0.1175" stop-color="#707070"/><stop offset="0.1262" stop-color="#777777"/><stop offset="0.1403" stop-color="#777777"/><stop offset="0.1648" stop-color="#777777"/><stop offset="0.1911" stop-color="#777777"/><stop offset="0.2174" stop-color="#787878"/><stop offset="0.2437" stop-color="#777777"/><stop offset="0.2700" stop-color="#777777"/><stop offset="0.2963" stop-color="#7b7b7b"/><stop offset="0.3226" stop-color="#808080"/><stop offset="0.3489" stop-color="#848484"/><stop offset="0.3752" stop-color="#888888"/><stop offset="0.4015" stop-color="#898989"/><stop offset="0.4278" stop-color="#8a8a8a"/><stop offset="0.4541" stop-color="#888888"/><stop offset="0.4804" stop-color="#858585"/><stop offset="0.4988" stop-color="#858585"/><stop offset="0.5014" stop-color="#8d8d8d"/><stop offset="0.5242" stop-color="#8e8e8e"/><stop offset="0.5505" stop-color="#8f8f8f"/><stop offset="0.5768" stop-color="#8f8f8f"/><stop offset="0.6031" stop-color="#8f8f8f"/><stop offset="0.6294" stop-color="#909090"/><stop offset="0.6557" stop-color="#909090"/><stop offset="0.6820" stop-color="#909090"/><stop offset="0.7083" stop-color="#909090"/><stop offset="0.7346" stop-color="#8d8d8d"/><stop offset="0.7609" stop-color="#8b8b8b"/><stop offset="0.7872" stop-color="#898989"/><stop offset="0.8135" stop-color="#868686"/><stop offset="0.8398" stop-color="#848484"/><stop offset="0.8661" stop-color="#818181"/><stop offset="0.8871" stop-color="#7d7d7d"/><stop offset="0.9081" stop-color="#777777"/><stop offset="0.9257" stop-color="#6f6f6f"/><stop offset="0.9397" stop-color="#676767"/><stop offset="0.9537" stop-color="#5b5b5b"/><stop offset="0.9660" stop-color="#4c4c4c"/><stop offset="0.9765" stop-color="#3c3c3c"/><stop offset="0.9853" stop-color="#2a2a2a"/><stop offset="0.9923" stop-color="#292929"/><stop offset="1.0007" stop-color="#282828"/></linearGradient><linearGradient id="r39" gradientUnits="userSpaceOnUse" x1="106.0" y1="0" x2="676.4" y2="0"><stop offset="0.0000" stop-color="#444444"/><stop offset="0.0105" stop-color="#434343"/><stop offset="0.0245" stop-color="#404040"/><stop offset="0.0421" stop-color="#3c3c3c"/><stop offset="0.0596" stop-color="#383838"/><stop offset="0.0771" stop-color="#363636"/><stop offset="0.0912" stop-color="#373737"/><stop offset="0.1017" stop-color="#454545"/><stop offset="0.1069" stop-color="#515151"/><stop offset="0.1122" stop-color="#5d5d5d"/><stop offset="0.1175" stop-color="#676767"/><stop offset="0.1262" stop-color="#6d6d6d"/><stop offset="0.1403" stop-color="#6d6d6d"/><stop offset="0.1648" stop-color="#6e6e6e"/><stop offset="0.1911" stop-color="#6f6f6f"/><stop offset="0.2174" stop-color="#707070"/><stop offset="0.2437" stop-color="#717171"/><stop offset="0.2700" stop-color="#717171"/><stop offset="0.2963" stop-color="#747474"/><stop offset="0.3226" stop-color="#777777"/><stop offset="0.3489" stop-color="#7a7a7a"/><stop offset="0.3752" stop-color="#7d7d7d"/><stop offset="0.4015" stop-color="#7e7e7e"/><stop offset="0.4278" stop-color="#808080"/><stop offset="0.4541" stop-color="#7f7f7f"/><stop offset="0.4804" stop-color="#7d7d7d"/><stop offset="0.4988" stop-color="#7d7d7d"/><stop offset="0.5014" stop-color="#848484"/><stop offset="0.5242" stop-color="#848484"/><stop offset="0.5505" stop-color="#848484"/><stop offset="0.5768" stop-color="#848484"/><stop offset="0.6031" stop-color="#838383"/><stop offset="0.6294" stop-color="#838383"/><stop offset="0.6557" stop-color="#838383"/><stop offset="0.6820" stop-color="#848484"/><stop offset="0.7083" stop-color="#848484"/><stop offset="0.7346" stop-color="#848484"/><stop offset="0.7609" stop-color="#858585"/><stop offset="0.7872" stop-color="#848484"/><stop offset="0.8135" stop-color="#828282"/><stop offset="0.8398" stop-color="#808080"/><stop offset="0.8661" stop-color="#7d7d7d"/><stop offset="0.8871" stop-color="#797979"/><stop offset="0.9081" stop-color="#737373"/><stop offset="0.9257" stop-color="#6c6c6c"/><stop offset="0.9397" stop-color="#646464"/><stop offset="0.9537" stop-color="#585858"/><stop offset="0.9660" stop-color="#4a4a4a"/><stop offset="0.9765" stop-color="#3b3b3b"/><stop offset="0.9853" stop-color="#2a2a2a"/><stop offset="0.9923" stop-color="#292929"/><stop offset="1.0007" stop-color="#282828"/></linearGradient><linearGradient id="r40" gradientUnits="userSpaceOnUse" x1="106.0" y1="0" x2="676.4" y2="0"><stop offset="0.0000" stop-color="#3c3c3c"/><stop offset="0.0105" stop-color="#3b3b3b"/><stop offset="0.0245" stop-color="#383838"/><stop offset="0.0421" stop-color="#333333"/><stop offset="0.0596" stop-color="#303030"/><stop offset="0.0771" stop-color="#2e2e2e"/><stop offset="0.0912" stop-color="#2f2f2f"/><stop offset="0.1017" stop-color="#3c3c3c"/><stop offset="0.1069" stop-color="#474747"/><stop offset="0.1122" stop-color="#535353"/><stop offset="0.1175" stop-color="#5c5c5c"/><stop offset="0.1262" stop-color="#626262"/><stop offset="0.1403" stop-color="#626262"/><stop offset="0.1648" stop-color="#636363"/><stop offset="0.1911" stop-color="#646464"/><stop offset="0.2174" stop-color="#656565"/><stop offset="0.2437" stop-color="#666666"/><stop offset="0.2700" stop-color="#676767"/><stop offset="0.2963" stop-color="#6a6a6a"/><stop offset="0.3226" stop-color="#6e6e6e"/><stop offset="0.3489" stop-color="#707070"/><stop offset="0.3752" stop-color="#737373"/><stop offset="0.4015" stop-color="#747474"/><stop offset="0.4278" stop-color="#757575"/><stop offset="0.4541" stop-color="#757575"/><stop offset="0.4804" stop-color="#747474"/><stop offset="0.4988" stop-color="#747474"/><stop offset="0.5014" stop-color="#7c7c7c"/><stop offset="0.5242" stop-color="#7b7b7b"/><stop offset="0.5505" stop-color="#7b7b7b"/><stop offset="0.5768" stop-color="#7a7a7a"/><stop offset="0.6031" stop-color="#7a7a7a"/><stop offset="0.6294" stop-color="#7a7a7a"/><stop offset="0.6557" stop-color="#797979"/><stop offset="0.6820" stop-color="#797979"/><stop offset="0.7083" stop-color="#797979"/><stop offset="0.7346" stop-color="#7a7a7a"/><stop offset="0.7609" stop-color="#7a7a7a"/><stop offset="0.7872" stop-color="#797979"/><stop offset="0.8135" stop-color="#797979"/><stop offset="0.8398" stop-color="#777777"/><stop offset="0.8661" stop-color="#747474"/><stop offset="0.8871" stop-color="#707070"/><stop offset="0.9081" stop-color="#6b6b6b"/><stop offset="0.9257" stop-color="#656565"/><stop offset="0.9397" stop-color="#5d5d5d"/><stop offset="0.9537" stop-color="#535353"/><stop offset="0.9660" stop-color="#474747"/><stop offset="0.9765" stop-color="#3a3a3a"/><stop offset="0.9853" stop-color="#2b2b2b"/><stop offset="0.9923" stop-color="#2a2a2a"/><stop offset="1.0007" stop-color="#292929"/></linearGradient><linearGradient id="r41" gradientUnits="userSpaceOnUse" x1="106.0" y1="0" x2="676.4" y2="0"><stop offset="0.0000" stop-color="#323232"/><stop offset="0.0105" stop-color="#313131"/><stop offset="0.0245" stop-color="#2f2f2f"/><stop offset="0.0421" stop-color="#2b2b2b"/><stop offset="0.0596" stop-color="#282828"/><stop offset="0.0771" stop-color="#262626"/><stop offset="0.0912" stop-color="#272727"/><stop offset="0.1017" stop-color="#343434"/><stop offset="0.1069" stop-color="#3e3e3e"/><stop offset="0.1122" stop-color="#494949"/><stop offset="0.1175" stop-color="#525252"/><stop offset="0.1262" stop-color="#575757"/><stop offset="0.1403" stop-color="#575757"/><stop offset="0.1648" stop-color="#585858"/><stop offset="0.1911" stop-color="#595959"/><stop offset="0.2174" stop-color="#5b5b5b"/><stop offset="0.2437" stop-color="#5c5c5c"/><stop offset="0.2700" stop-color="#5d5d5d"/><stop offset="0.2963" stop-color="#616161"/><stop offset="0.3226" stop-color="#656565"/><stop offset="0.3489" stop-color="#676767"/><stop offset="0.3752" stop-color="#696969"/><stop offset="0.4015" stop-color="#6a6a6a"/><stop offset="0.4278" stop-color="#6b6b6b"/><stop offset="0.4541" stop-color="#6b6b6b"/><stop offset="0.4804" stop-color="#6b6b6b"/><stop offset="0.4988" stop-color="#6b6b6b"/><stop offset="0.5014" stop-color="#737373"/><stop offset="0.5242" stop-color="#727272"/><stop offset="0.5505" stop-color="#717171"/><stop offset="0.5768" stop-color="#717171"/><stop offset="0.6031" stop-color="#707070"/><stop offset="0.6294" stop-color="#707070"/><stop offset="0.6557" stop-color="#707070"/><stop offset="0.6820" stop-color="#6f6f6f"/><stop offset="0.7083" stop-color="#6e6e6e"/><stop offset="0.7346" stop-color="#6f6f6f"/><stop offset="0.7609" stop-color="#6f6f6f"/><stop offset="0.7872" stop-color="#6f6f6f"/><stop offset="0.8135" stop-color="#6f6f6f"/><stop offset="0.8398" stop-color="#6d6d6d"/><stop offset="0.8661" stop-color="#6b6b6b"/><stop offset="0.8871" stop-color="#686868"/><stop offset="0.9081" stop-color="#636363"/><stop offset="0.9257" stop-color="#5d5d5d"/><stop offset="0.9397" stop-color="#575757"/><stop offset="0.9537" stop-color="#4e4e4e"/><stop offset="0.9660" stop-color="#444444"/><stop offset="0.9765" stop-color="#383838"/><stop offset="0.9853" stop-color="#2c2c2c"/><stop offset="0.9923" stop-color="#2b2b2b"/><stop offset="1.0007" stop-color="#2a2a2a"/></linearGradient><linearGradient id="r42" gradientUnits="userSpaceOnUse" x1="106.0" y1="0" x2="676.4" y2="0"><stop offset="0.0000" stop-color="#272727"/><stop offset="0.0105" stop-color="#272727"/><stop offset="0.0245" stop-color="#262626"/><stop offset="0.0421" stop-color="#232323"/><stop offset="0.0596" stop-color="#212121"/><stop offset="0.0771" stop-color="#1f1f1f"/><stop offset="0.0912" stop-color="#202020"/><stop offset="0.1017" stop-color="#2d2d2d"/><stop offset="0.1069" stop-color="#393939"/><stop offset="0.1122" stop-color="#444444"/><stop offset="0.1175" stop-color="#4d4d4d"/><stop offset="0.1262" stop-color="#535353"/><stop offset="0.1403" stop-color="#545454"/><stop offset="0.1648" stop-color="#545454"/><stop offset="0.1911" stop-color="#555555"/><stop offset="0.2174" stop-color="#575757"/><stop offset="0.2437" stop-color="#585858"/><stop offset="0.2700" stop-color="#595959"/><stop offset="0.2963" stop-color="#5b5b5b"/><stop offset="0.3226" stop-color="#5d5d5d"/><stop offset="0.3489" stop-color="#5f5f5f"/><stop offset="0.3752" stop-color="#606060"/><stop offset="0.4015" stop-color="#616161"/><stop offset="0.4278" stop-color="#626262"/><stop offset="0.4541" stop-color="#616161"/><stop offset="0.4804" stop-color="#616161"/><stop offset="0.4988" stop-color="#616161"/><stop offset="0.5014" stop-color="#6a6a6a"/><stop offset="0.5242" stop-color="#6a6a6a"/><stop offset="0.5505" stop-color="#6a6a6a"/><stop offset="0.5768" stop-color="#696969"/><stop offset="0.6031" stop-color="#696969"/><stop offset="0.6294" stop-color="#696969"/><stop offset="0.6557" stop-color="#686868"/><stop offset="0.6820" stop-color="#686868"/><stop offset="0.7083" stop-color="#676767"/><stop offset="0.7346" stop-color="#686868"/><stop offset="0.7609" stop-color="#686868"/><stop offset="0.7872" stop-color="#696969"/><stop offset="0.8135" stop-color="#696969"/><stop offset="0.8398" stop-color="#676767"/><stop offset="0.8661" stop-color="#656565"/><stop offset="0.8871" stop-color="#626262"/><stop offset="0.9081" stop-color="#5d5d5d"/><stop offset="0.9257" stop-color="#585858"/><stop offset="0.9397" stop-color="#535353"/><stop offset="0.9537" stop-color="#4b4b4b"/><stop offset="0.9660" stop-color="#424242"/><stop offset="0.9765" stop-color="#373737"/><stop offset="0.9853" stop-color="#2c2c2c"/><stop offset="0.9923" stop-color="#2b2b2b"/><stop offset="1.0007" stop-color="#2a2a2a"/></linearGradient><linearGradient id="r43" gradientUnits="userSpaceOnUse" x1="106.0" y1="0" x2="676.4" y2="0"><stop offset="0.0000" stop-color="#202020"/><stop offset="0.0105" stop-color="#202020"/><stop offset="0.0245" stop-color="#1f1f1f"/><stop offset="0.0421" stop-color="#1e1e1e"/><stop offset="0.0596" stop-color="#1c1c1c"/><stop offset="0.0771" stop-color="#1a1a1a"/><stop offset="0.0912" stop-color="#1c1c1c"/><stop offset="0.1017" stop-color="#292929"/><stop offset="0.1069" stop-color="#343434"/><stop offset="0.1122" stop-color="#404040"/><stop offset="0.1175" stop-color="#494949"/><stop offset="0.1262" stop-color="#4f4f4f"/><stop offset="0.1403" stop-color="#505050"/><stop offset="0.1648" stop-color="#505050"/><stop offset="0.1911" stop-color="#525252"/><stop offset="0.2174" stop-color="#535353"/><stop offset="0.2437" stop-color="#545454"/><stop offset="0.2700" stop-color="#545454"/><stop offset="0.2963" stop-color="#555555"/><stop offset="0.3226" stop-color="#565656"/><stop offset="0.3489" stop-color="#575757"/><stop offset="0.3752" stop-color="#585858"/><stop offset="0.4015" stop-color="#585858"/><stop offset="0.4278" stop-color="#585858"/><stop offset="0.4541" stop-color="#585858"/><stop offset="0.4804" stop-color="#585858"/><stop offset="0.4988" stop-color="#585858"/><stop offset="0.5014" stop-color="#626262"/><stop offset="0.5242" stop-color="#626262"/><stop offset="0.5505" stop-color="#626262"/><stop offset="0.5768" stop-color="#626262"/><stop offset="0.6031" stop-color="#626262"/><stop offset="0.6294" stop-color="#616161"/><stop offset="0.6557" stop-color="#616161"/><stop offset="0.6820" stop-color="#606060"/><stop offset="0.7083" stop-color="#606060"/><stop offset="0.7346" stop-color="#616161"/><stop offset="0.7609" stop-color="#626262"/><stop offset="0.7872" stop-color="#636363"/><stop offset="0.8135" stop-color="#636363"/><stop offset="0.8398" stop-color="#616161"/><stop offset="0.8661" stop-color="#5f5f5f"/><stop offset="0.8871" stop-color="#5c5c5c"/><stop offset="0.9081" stop-color="#585858"/><stop offset="0.9257" stop-color="#545454"/><stop offset="0.9397" stop-color="#4e4e4e"/><stop offset="0.9537" stop-color="#474747"/><stop offset="0.9660" stop-color="#3f3f3f"/><stop offset="0.9765" stop-color="#363636"/><stop offset="0.9853" stop-color="#2c2c2c"/><stop offset="0.9923" stop-color="#2b2b2b"/><stop offset="1.0007" stop-color="#2a2a2a"/></linearGradient><linearGradient id="r44" gradientUnits="userSpaceOnUse" x1="106.0" y1="0" x2="676.4" y2="0"><stop offset="0.0000" stop-color="#1c1c1c"/><stop offset="0.0105" stop-color="#1c1c1c"/><stop offset="0.0245" stop-color="#1c1c1c"/><stop offset="0.0421" stop-color="#1b1b1b"/><stop offset="0.0596" stop-color="#1a1a1a"/><stop offset="0.0771" stop-color="#181818"/><stop offset="0.0912" stop-color="#191919"/><stop offset="0.1017" stop-color="#272727"/><stop offset="0.1069" stop-color="#323232"/><stop offset="0.1122" stop-color="#3e3e3e"/><stop offset="0.1175" stop-color="#484848"/><stop offset="0.1262" stop-color="#4e4e4e"/><stop offset="0.1403" stop-color="#4e4e4e"/><stop offset="0.1648" stop-color="#4f4f4f"/><stop offset="0.1911" stop-color="#505050"/><stop offset="0.2174" stop-color="#525252"/><stop offset="0.2437" stop-color="#525252"/><stop offset="0.2700" stop-color="#535353"/><stop offset="0.2963" stop-color="#545454"/><stop offset="0.3226" stop-color="#545454"/><stop offset="0.3489" stop-color="#565656"/><stop offset="0.3752" stop-color="#575757"/><stop offset="0.4015" stop-color="#575757"/><stop offset="0.4278" stop-color="#575757"/><stop offset="0.4541" stop-color="#575757"/><stop offset="0.4804" stop-color="#575757"/><stop offset="0.4988" stop-color="#575757"/><stop offset="0.5014" stop-color="#616161"/><stop offset="0.5242" stop-color="#616161"/><stop offset="0.5505" stop-color="#616161"/><stop offset="0.5768" stop-color="#616161"/><stop offset="0.6031" stop-color="#616161"/><stop offset="0.6294" stop-color="#606060"/><stop offset="0.6557" stop-color="#5f5f5f"/><stop offset="0.6820" stop-color="#5f5f5f"/><stop offset="0.7083" stop-color="#5f5f5f"/><stop offset="0.7346" stop-color="#606060"/><stop offset="0.7609" stop-color="#616161"/><stop offset="0.7872" stop-color="#616161"/><stop offset="0.8135" stop-color="#626262"/><stop offset="0.8398" stop-color="#606060"/><stop offset="0.8661" stop-color="#5e5e5e"/><stop offset="0.8871" stop-color="#5b5b5b"/><stop offset="0.9081" stop-color="#575757"/><stop offset="0.9257" stop-color="#525252"/><stop offset="0.9397" stop-color="#4d4d4d"/><stop offset="0.9537" stop-color="#464646"/><stop offset="0.9660" stop-color="#3e3e3e"/><stop offset="0.9765" stop-color="#353535"/><stop offset="0.9853" stop-color="#2b2b2b"/><stop offset="0.9923" stop-color="#2a2a2a"/><stop offset="1.0007" stop-color="#292929"/></linearGradient><linearGradient id="r45" gradientUnits="userSpaceOnUse" x1="106.0" y1="0" x2="676.4" y2="0"><stop offset="0.0000" stop-color="#1a1a1a"/><stop offset="0.0105" stop-color="#1a1a1a"/><stop offset="0.0245" stop-color="#1a1a1a"/><stop offset="0.0421" stop-color="#191919"/><stop offset="0.0596" stop-color="#181818"/><stop offset="0.0771" stop-color="#161616"/><stop offset="0.0912" stop-color="#171717"/><stop offset="0.1017" stop-color="#242424"/><stop offset="0.1069" stop-color="#303030"/><stop offset="0.1122" stop-color="#3b3b3b"/><stop offset="0.1175" stop-color="#454545"/><stop offset="0.1262" stop-color="#4b4b4b"/><stop offset="0.1403" stop-color="#4b4b4b"/><stop offset="0.1648" stop-color="#4c4c4c"/><stop offset="0.1911" stop-color="#4e4e4e"/><stop offset="0.2174" stop-color="#4f4f4f"/><stop offset="0.2437" stop-color="#505050"/><stop offset="0.2700" stop-color="#505050"/><stop offset="0.2963" stop-color="#515151"/><stop offset="0.3226" stop-color="#525252"/><stop offset="0.3489" stop-color="#535353"/><stop offset="0.3752" stop-color="#545454"/><stop offset="0.4015" stop-color="#545454"/><stop offset="0.4278" stop-color="#545454"/><stop offset="0.4541" stop-color="#545454"/><stop offset="0.4804" stop-color="#545454"/><stop offset="0.4988" stop-color="#545454"/><stop offset="0.5014" stop-color="#5e5e5e"/><stop offset="0.5242" stop-color="#5e5e5e"/><stop offset="0.5505" stop-color="#5e5e5e"/><stop offset="0.5768" stop-color="#5e5e5e"/><stop offset="0.6031" stop-color="#5e5e5e"/><stop offset="0.6294" stop-color="#5d5d5d"/><stop offset="0.6557" stop-color="#5d5d5d"/><stop offset="0.6820" stop-color="#5c5c5c"/><stop offset="0.7083" stop-color="#5c5c5c"/><stop offset="0.7346" stop-color="#5d5d5d"/><stop offset="0.7609" stop-color="#5e5e5e"/><stop offset="0.7872" stop-color="#5f5f5f"/><stop offset="0.8135" stop-color="#5f5f5f"/><stop offset="0.8398" stop-color="#5d5d5d"/><stop offset="0.8661" stop-color="#5b5b5b"/><stop offset="0.8871" stop-color="#585858"/><stop offset="0.9081" stop-color="#545454"/><stop offset="0.9257" stop-color="#505050"/><stop offset="0.9397" stop-color="#4b4b4b"/><stop offset="0.9537" stop-color="#444444"/><stop offset="0.9660" stop-color="#3c3c3c"/><stop offset="0.9765" stop-color="#343434"/><stop offset="0.9853" stop-color="#2b2b2b"/><stop offset="0.9923" stop-color="#292929"/><stop offset="1.0007" stop-color="#282828"/></linearGradient><linearGradient id="r46" gradientUnits="userSpaceOnUse" x1="106.0" y1="0" x2="676.4" y2="0"><stop offset="0.0000" stop-color="#171717"/><stop offset="0.0105" stop-color="#171717"/><stop offset="0.0245" stop-color="#171717"/><stop offset="0.0421" stop-color="#171717"/><stop offset="0.0596" stop-color="#151515"/><stop offset="0.0771" stop-color="#131313"/><stop offset="0.0912" stop-color="#141414"/><stop offset="0.1017" stop-color="#212121"/><stop offset="0.1069" stop-color="#2c2c2c"/><stop offset="0.1122" stop-color="#373737"/><stop offset="0.1175" stop-color="#414141"/><stop offset="0.1262" stop-color="#464646"/><stop offset="0.1403" stop-color="#474747"/><stop offset="0.1648" stop-color="#484848"/><stop offset="0.1911" stop-color="#494949"/><stop offset="0.2174" stop-color="#4a4a4a"/><stop offset="0.2437" stop-color="#4b4b4b"/><stop offset="0.2700" stop-color="#4c4c4c"/><stop offset="0.2963" stop-color="#4d4d4d"/><stop offset="0.3226" stop-color="#4e4e4e"/><stop offset="0.3489" stop-color="#4f4f4f"/><stop offset="0.3752" stop-color="#505050"/><stop offset="0.4015" stop-color="#505050"/><stop offset="0.4278" stop-color="#4f4f4f"/><stop offset="0.4541" stop-color="#4f4f4f"/><stop offset="0.4804" stop-color="#4f4f4f"/><stop offset="0.4988" stop-color="#4f4f4f"/><stop offset="0.5014" stop-color="#5a5a5a"/><stop offset="0.5242" stop-color="#5a5a5a"/><stop offset="0.5505" stop-color="#5a5a5a"/><stop offset="0.5768" stop-color="#5a5a5a"/><stop offset="0.6031" stop-color="#595959"/><stop offset="0.6294" stop-color="#595959"/><stop offset="0.6557" stop-color="#595959"/><stop offset="0.6820" stop-color="#585858"/><stop offset="0.7083" stop-color="#585858"/><stop offset="0.7346" stop-color="#595959"/><stop offset="0.7609" stop-color="#5a5a5a"/><stop offset="0.7872" stop-color="#5b5b5b"/><stop offset="0.8135" stop-color="#5b5b5b"/><stop offset="0.8398" stop-color="#595959"/><stop offset="0.8661" stop-color="#575757"/><stop offset="0.8871" stop-color="#545454"/><stop offset="0.9081" stop-color="#505050"/><stop offset="0.9257" stop-color="#4c4c4c"/><stop offset="0.9397" stop-color="#484848"/><stop offset="0.9537" stop-color="#424242"/><stop offset="0.9660" stop-color="#3b3b3b"/><stop offset="0.9765" stop-color="#333333"/><stop offset="0.9853" stop-color="#2b2b2b"/><stop offset="0.9923" stop-color="#292929"/><stop offset="1.0007" stop-color="#282828"/></linearGradient><linearGradient id="r47" gradientUnits="userSpaceOnUse" x1="106.0" y1="0" x2="676.4" y2="0"><stop offset="0.0000" stop-color="#121212"/><stop offset="0.0105" stop-color="#121212"/><stop offset="0.0245" stop-color="#121212"/><stop offset="0.0421" stop-color="#121212"/><stop offset="0.0596" stop-color="#101010"/><stop offset="0.0771" stop-color="#0e0e0e"/><stop offset="0.0912" stop-color="#101010"/><stop offset="0.1017" stop-color="#1c1c1c"/><stop offset="0.1069" stop-color="#272727"/><stop offset="0.1122" stop-color="#313131"/><stop offset="0.1175" stop-color="#3a3a3a"/><stop offset="0.1262" stop-color="#3f3f3f"/><stop offset="0.1403" stop-color="#404040"/><stop offset="0.1648" stop-color="#414141"/><stop offset="0.1911" stop-color="#434343"/><stop offset="0.2174" stop-color="#444444"/><stop offset="0.2437" stop-color="#454545"/><stop offset="0.2700" stop-color="#464646"/><stop offset="0.2963" stop-color="#474747"/><stop offset="0.3226" stop-color="#484848"/><stop offset="0.3489" stop-color="#484848"/><stop offset="0.3752" stop-color="#494949"/><stop offset="0.4015" stop-color="#494949"/><stop offset="0.4278" stop-color="#494949"/><stop offset="0.4541" stop-color="#494949"/><stop offset="0.4804" stop-color="#494949"/><stop offset="0.4988" stop-color="#494949"/><stop offset="0.5014" stop-color="#535353"/><stop offset="0.5242" stop-color="#535353"/><stop offset="0.5505" stop-color="#535353"/><stop offset="0.5768" stop-color="#535353"/><stop offset="0.6031" stop-color="#535353"/><stop offset="0.6294" stop-color="#535353"/><stop offset="0.6557" stop-color="#525252"/><stop offset="0.6820" stop-color="#525252"/><stop offset="0.7083" stop-color="#525252"/><stop offset="0.7346" stop-color="#535353"/><stop offset="0.7609" stop-color="#545454"/><stop offset="0.7872" stop-color="#545454"/><stop offset="0.8135" stop-color="#555555"/><stop offset="0.8398" stop-color="#535353"/><stop offset="0.8661" stop-color="#515151"/><stop offset="0.8871" stop-color="#4e4e4e"/><stop offset="0.9081" stop-color="#4b4b4b"/><stop offset="0.9257" stop-color="#474747"/><stop offset="0.9397" stop-color="#434343"/><stop offset="0.9537" stop-color="#3e3e3e"/><stop offset="0.9660" stop-color="#383838"/><stop offset="0.9765" stop-color="#323232"/><stop offset="0.9853" stop-color="#2c2c2c"/><stop offset="0.9923" stop-color="#2a2a2a"/><stop offset="1.0007" stop-color="#292929"/></linearGradient><linearGradient id="r48" gradientUnits="userSpaceOnUse" x1="106.0" y1="0" x2="676.4" y2="0"><stop offset="0.0000" stop-color="#090909"/><stop offset="0.0105" stop-color="#090909"/><stop offset="0.0245" stop-color="#090909"/><stop offset="0.0421" stop-color="#080808"/><stop offset="0.0596" stop-color="#070707"/><stop offset="0.0771" stop-color="#050505"/><stop offset="0.0912" stop-color="#060606"/><stop offset="0.1017" stop-color="#121212"/><stop offset="0.1069" stop-color="#1d1d1d"/><stop offset="0.1122" stop-color="#272727"/><stop offset="0.1175" stop-color="#303030"/><stop offset="0.1262" stop-color="#353535"/><stop offset="0.1403" stop-color="#363636"/><stop offset="0.1648" stop-color="#373737"/><stop offset="0.1911" stop-color="#383838"/><stop offset="0.2174" stop-color="#3a3a3a"/><stop offset="0.2437" stop-color="#3b3b3b"/><stop offset="0.2700" stop-color="#3c3c3c"/><stop offset="0.2963" stop-color="#3d3d3d"/><stop offset="0.3226" stop-color="#3d3d3d"/><stop offset="0.3489" stop-color="#3e3e3e"/><stop offset="0.3752" stop-color="#3f3f3f"/><stop offset="0.4015" stop-color="#3f3f3f"/><stop offset="0.4278" stop-color="#3f3f3f"/><stop offset="0.4541" stop-color="#3f3f3f"/><stop offset="0.4804" stop-color="#3f3f3f"/><stop offset="0.4988" stop-color="#3f3f3f"/><stop offset="0.5014" stop-color="#494949"/><stop offset="0.5242" stop-color="#494949"/><stop offset="0.5505" stop-color="#494949"/><stop offset="0.5768" stop-color="#494949"/><stop offset="0.6031" stop-color="#494949"/><stop offset="0.6294" stop-color="#484848"/><stop offset="0.6557" stop-color="#484848"/><stop offset="0.6820" stop-color="#484848"/><stop offset="0.7083" stop-color="#484848"/><stop offset="0.7346" stop-color="#494949"/><stop offset="0.7609" stop-color="#4a4a4a"/><stop offset="0.7872" stop-color="#4a4a4a"/><stop offset="0.8135" stop-color="#4b4b4b"/><stop offset="0.8398" stop-color="#494949"/><stop offset="0.8661" stop-color="#474747"/><stop offset="0.8871" stop-color="#454545"/><stop offset="0.9081" stop-color="#424242"/><stop offset="0.9257" stop-color="#3f3f3f"/><stop offset="0.9397" stop-color="#3d3d3d"/><stop offset="0.9537" stop-color="#393939"/><stop offset="0.9660" stop-color="#353535"/><stop offset="0.9765" stop-color="#313131"/><stop offset="0.9853" stop-color="#2d2d2d"/><stop offset="0.9923" stop-color="#2c2c2c"/><stop offset="1.0007" stop-color="#2b2b2b"/></linearGradient><linearGradient id="r49" gradientUnits="userSpaceOnUse" x1="106.0" y1="0" x2="676.4" y2="0"><stop offset="0.0000" stop-color="#000000"/><stop offset="0.0105" stop-color="#000000"/><stop offset="0.0245" stop-color="#000000"/><stop offset="0.0421" stop-color="#000000"/><stop offset="0.0596" stop-color="#000000"/><stop offset="0.0771" stop-color="#000000"/><stop offset="0.0912" stop-color="#000000"/><stop offset="0.1017" stop-color="#040404"/><stop offset="0.1069" stop-color="#0f0f0f"/><stop offset="0.1122" stop-color="#191919"/><stop offset="0.1175" stop-color="#212121"/><stop offset="0.1262" stop-color="#272727"/><stop offset="0.1403" stop-color="#282828"/><stop offset="0.1648" stop-color="#292929"/><stop offset="0.1911" stop-color="#2a2a2a"/><stop offset="0.2174" stop-color="#2b2b2b"/><stop offset="0.2437" stop-color="#2d2d2d"/><stop offset="0.2700" stop-color="#2e2e2e"/><stop offset="0.2963" stop-color="#2f2f2f"/><stop offset="0.3226" stop-color="#2f2f2f"/><stop offset="0.3489" stop-color="#303030"/><stop offset="0.3752" stop-color="#303030"/><stop offset="0.4015" stop-color="#303030"/><stop offset="0.4278" stop-color="#303030"/><stop offset="0.4541" stop-color="#303030"/><stop offset="0.4804" stop-color="#303030"/><stop offset="0.4988" stop-color="#303030"/><stop offset="0.5014" stop-color="#3b3b3b"/><stop offset="0.5242" stop-color="#3b3b3b"/><stop offset="0.5505" stop-color="#3b3b3b"/><stop offset="0.5768" stop-color="#3a3a3a"/><stop offset="0.6031" stop-color="#3a3a3a"/><stop offset="0.6294" stop-color="#3a3a3a"/><stop offset="0.6557" stop-color="#3a3a3a"/><stop offset="0.6820" stop-color="#3a3a3a"/><stop offset="0.7083" stop-color="#3a3a3a"/><stop offset="0.7346" stop-color="#3b3b3b"/><stop offset="0.7609" stop-color="#3b3b3b"/><stop offset="0.7872" stop-color="#3c3c3c"/><stop offset="0.8135" stop-color="#3d3d3d"/><stop offset="0.8398" stop-color="#3b3b3b"/><stop offset="0.8661" stop-color="#393939"/><stop offset="0.8871" stop-color="#383838"/><stop offset="0.9081" stop-color="#363636"/><stop offset="0.9257" stop-color="#353535"/><stop offset="0.9397" stop-color="#343434"/><stop offset="0.9537" stop-color="#323232"/><stop offset="0.9660" stop-color="#313131"/><stop offset="0.9765" stop-color="#313131"/><stop offset="0.9853" stop-color="#303030"/><stop offset="0.9923" stop-color="#2f2f2f"/><stop offset="1.0007" stop-color="#2e2e2e"/></linearGradient><linearGradient id="r50" gradientUnits="userSpaceOnUse" x1="106.0" y1="0" x2="676.4" y2="0"><stop offset="0.0000" stop-color="#000000"/><stop offset="0.0105" stop-color="#000000"/><stop offset="0.0245" stop-color="#000000"/><stop offset="0.0421" stop-color="#000000"/><stop offset="0.0596" stop-color="#000000"/><stop offset="0.0771" stop-color="#000000"/><stop offset="0.0912" stop-color="#000000"/><stop offset="0.1017" stop-color="#000000"/><stop offset="0.1069" stop-color="#000000"/><stop offset="0.1122" stop-color="#070707"/><stop offset="0.1175" stop-color="#0f0f0f"/><stop offset="0.1262" stop-color="#151515"/><stop offset="0.1403" stop-color="#161616"/><stop offset="0.1648" stop-color="#171717"/><stop offset="0.1911" stop-color="#181818"/><stop offset="0.2174" stop-color="#1a1a1a"/><stop offset="0.2437" stop-color="#1b1b1b"/><stop offset="0.2700" stop-color="#1c1c1c"/><stop offset="0.2963" stop-color="#1d1d1d"/><stop offset="0.3226" stop-color="#1d1d1d"/><stop offset="0.3489" stop-color="#1e1e1e"/><stop offset="0.3752" stop-color="#1f1f1f"/><stop offset="0.4015" stop-color="#1e1e1e"/><stop offset="0.4278" stop-color="#1e1e1e"/><stop offset="0.4541" stop-color="#1e1e1e"/><stop offset="0.4804" stop-color="#1e1e1e"/><stop offset="0.4988" stop-color="#1e1e1e"/><stop offset="0.5014" stop-color="#292929"/><stop offset="0.5242" stop-color="#292929"/><stop offset="0.5505" stop-color="#292929"/><stop offset="0.5768" stop-color="#282828"/><stop offset="0.6031" stop-color="#282828"/><stop offset="0.6294" stop-color="#282828"/><stop offset="0.6557" stop-color="#282828"/><stop offset="0.6820" stop-color="#282828"/><stop offset="0.7083" stop-color="#282828"/><stop offset="0.7346" stop-color="#292929"/><stop offset="0.7609" stop-color="#292929"/><stop offset="0.7872" stop-color="#2a2a2a"/><stop offset="0.8135" stop-color="#2b2b2b"/><stop offset="0.8398" stop-color="#2a2a2a"/><stop offset="0.8661" stop-color="#282828"/><stop offset="0.8871" stop-color="#272727"/><stop offset="0.9081" stop-color="#272727"/><stop offset="0.9257" stop-color="#272727"/><stop offset="0.9397" stop-color="#282828"/><stop offset="0.9537" stop-color="#2a2a2a"/><stop offset="0.9660" stop-color="#2c2c2c"/><stop offset="0.9765" stop-color="#303030"/><stop offset="0.9853" stop-color="#343434"/><stop offset="0.9923" stop-color="#333333"/><stop offset="1.0007" stop-color="#323232"/></linearGradient></defs><g filter="url(#hm)"><rect x="106.0" y="175.7" width="570.4" height="570.2" fill="#000"/><rect x="106.0" y="742.20" width="570.4" height="4.00" fill="url(#r0)"/><rect x="106.0" y="742.50" width="570.4" height="3.40" fill="url(#r1)" mask="url(#mk)"/><rect x="106.0" y="738.70" width="570.4" height="4.10" fill="url(#r1)"/><rect x="106.0" y="739.00" width="570.4" height="3.50" fill="url(#r2)" mask="url(#mk)"/><rect x="106.0" y="734.70" width="570.4" height="4.60" fill="url(#r2)"/><rect x="106.0" y="735.00" width="570.4" height="4.00" fill="url(#r3)" mask="url(#mk)"/><rect x="106.0" y="729.70" width="570.4" height="5.60" fill="url(#r3)"/><rect x="106.0" y="730.00" width="570.4" height="5.00" fill="url(#r4)" mask="url(#mk)"/><rect x="106.0" y="724.70" width="570.4" height="5.60" fill="url(#r4)"/><rect x="106.0" y="725.00" width="570.4" height="5.00" fill="url(#r5)" mask="url(#mk)"/><rect x="106.0" y="718.70" width="570.4" height="6.60" fill="url(#r5)"/><rect x="106.0" y="719.00" width="570.4" height="6.00" fill="url(#r6)" mask="url(#mk)"/><rect x="106.0" y="711.70" width="570.4" height="7.60" fill="url(#r6)"/><rect x="106.0" y="712.00" width="570.4" height="7.00" fill="url(#r7)" mask="url(#mk)"/><rect x="106.0" y="703.70" width="570.4" height="8.60" fill="url(#r7)"/><rect x="106.0" y="704.00" width="570.4" height="8.00" fill="url(#r8)" mask="url(#mk)"/><rect x="106.0" y="693.70" width="570.4" height="10.60" fill="url(#r8)"/><rect x="106.0" y="694.00" width="570.4" height="10.00" fill="url(#r9)" mask="url(#mk)"/><rect x="106.0" y="681.70" width="570.4" height="12.60" fill="url(#r9)"/><rect x="106.0" y="682.00" width="570.4" height="12.00" fill="url(#r10)" mask="url(#mk)"/><rect x="106.0" y="669.70" width="570.4" height="12.60" fill="url(#r10)"/><rect x="106.0" y="670.00" width="570.4" height="12.00" fill="url(#r11)" mask="url(#mk)"/><rect x="106.0" y="654.70" width="570.4" height="15.60" fill="url(#r11)"/><rect x="106.0" y="655.00" width="570.4" height="15.00" fill="url(#r12)" mask="url(#mk)"/><rect x="106.0" y="639.70" width="570.4" height="15.60" fill="url(#r12)"/><rect x="106.0" y="640.00" width="570.4" height="15.00" fill="url(#r13)" mask="url(#mk)"/><rect x="106.0" y="624.70" width="570.4" height="15.60" fill="url(#r13)"/><rect x="106.0" y="625.00" width="570.4" height="15.00" fill="url(#r14)" mask="url(#mk)"/><rect x="106.0" y="609.70" width="570.4" height="15.60" fill="url(#r14)"/><rect x="106.0" y="610.00" width="570.4" height="15.00" fill="url(#r15)" mask="url(#mk)"/><rect x="106.0" y="594.70" width="570.4" height="15.60" fill="url(#r15)"/><rect x="106.0" y="595.00" width="570.4" height="15.00" fill="url(#r16)" mask="url(#mk)"/><rect x="106.0" y="579.70" width="570.4" height="15.60" fill="url(#r16)"/><rect x="106.0" y="580.00" width="570.4" height="15.00" fill="url(#r17)" mask="url(#mk)"/><rect x="106.0" y="564.70" width="570.4" height="15.60" fill="url(#r17)"/><rect x="106.0" y="565.00" width="570.4" height="15.00" fill="url(#r18)" mask="url(#mk)"/><rect x="106.0" y="549.70" width="570.4" height="15.60" fill="url(#r18)"/><rect x="106.0" y="550.00" width="570.4" height="15.00" fill="url(#r19)" mask="url(#mk)"/><rect x="106.0" y="534.70" width="570.4" height="15.60" fill="url(#r19)"/><rect x="106.0" y="535.00" width="570.4" height="15.00" fill="url(#r20)" mask="url(#mk)"/><rect x="106.0" y="519.70" width="570.4" height="15.60" fill="url(#r20)"/><rect x="106.0" y="520.00" width="570.4" height="15.00" fill="url(#r21)" mask="url(#mk)"/><rect x="106.0" y="504.70" width="570.4" height="15.60" fill="url(#r21)"/><rect x="106.0" y="505.00" width="570.4" height="15.00" fill="url(#r22)" mask="url(#mk)"/><rect x="106.0" y="489.70" width="570.4" height="15.60" fill="url(#r22)"/><rect x="106.0" y="490.00" width="570.4" height="15.00" fill="url(#r23)" mask="url(#mk)"/><rect x="106.0" y="474.70" width="570.4" height="15.60" fill="url(#r23)"/><rect x="106.0" y="475.00" width="570.4" height="15.00" fill="url(#r24)" mask="url(#mk)"/><rect x="106.0" y="461.70" width="570.4" height="13.60" fill="url(#r24)"/><rect x="106.0" y="462.00" width="570.4" height="13.00" fill="url(#r25)" mask="url(#mk)"/><rect x="106.0" y="460.20" width="570.4" height="2.10" fill="url(#r25)"/><rect x="106.0" y="460.50" width="570.4" height="1.50" fill="url(#r26)" mask="url(#mk)"/><rect x="106.0" y="449.70" width="570.4" height="11.10" fill="url(#r26)"/><rect x="106.0" y="450.00" width="570.4" height="10.50" fill="url(#r27)" mask="url(#mk)"/><rect x="106.0" y="434.70" width="570.4" height="15.60" fill="url(#r27)"/><rect x="106.0" y="435.00" width="570.4" height="15.00" fill="url(#r28)" mask="url(#mk)"/><rect x="106.0" y="419.70" width="570.4" height="15.60" fill="url(#r28)"/><rect x="106.0" y="420.00" width="570.4" height="15.00" fill="url(#r29)" mask="url(#mk)"/><rect x="106.0" y="404.70" width="570.4" height="15.60" fill="url(#r29)"/><rect x="106.0" y="405.00" width="570.4" height="15.00" fill="url(#r30)" mask="url(#mk)"/><rect x="106.0" y="389.70" width="570.4" height="15.60" fill="url(#r30)"/><rect x="106.0" y="390.00" width="570.4" height="15.00" fill="url(#r31)" mask="url(#mk)"/><rect x="106.0" y="374.70" width="570.4" height="15.60" fill="url(#r31)"/><rect x="106.0" y="375.00" width="570.4" height="15.00" fill="url(#r32)" mask="url(#mk)"/><rect x="106.0" y="359.70" width="570.4" height="15.60" fill="url(#r32)"/><rect x="106.0" y="360.00" width="570.4" height="15.00" fill="url(#r33)" mask="url(#mk)"/><rect x="106.0" y="344.70" width="570.4" height="15.60" fill="url(#r33)"/><rect x="106.0" y="345.00" width="570.4" height="15.00" fill="url(#r34)" mask="url(#mk)"/><rect x="106.0" y="329.70" width="570.4" height="15.60" fill="url(#r34)"/><rect x="106.0" y="330.00" width="570.4" height="15.00" fill="url(#r35)" mask="url(#mk)"/><rect x="106.0" y="314.70" width="570.4" height="15.60" fill="url(#r35)"/><rect x="106.0" y="315.00" width="570.4" height="15.00" fill="url(#r36)" mask="url(#mk)"/><rect x="106.0" y="299.70" width="570.4" height="15.60" fill="url(#r36)"/><rect x="106.0" y="300.00" width="570.4" height="15.00" fill="url(#r37)" mask="url(#mk)"/><rect x="106.0" y="284.70" width="570.4" height="15.60" fill="url(#r37)"/><rect x="106.0" y="285.00" width="570.4" height="15.00" fill="url(#r38)" mask="url(#mk)"/><rect x="106.0" y="269.70" width="570.4" height="15.60" fill="url(#r38)"/><rect x="106.0" y="270.00" width="570.4" height="15.00" fill="url(#r39)" mask="url(#mk)"/><rect x="106.0" y="254.70" width="570.4" height="15.60" fill="url(#r39)"/><rect x="106.0" y="255.00" width="570.4" height="15.00" fill="url(#r40)" mask="url(#mk)"/><rect x="106.0" y="239.70" width="570.4" height="15.60" fill="url(#r40)"/><rect x="106.0" y="240.00" width="570.4" height="15.00" fill="url(#r41)" mask="url(#mk)"/><rect x="106.0" y="224.70" width="570.4" height="15.60" fill="url(#r41)"/><rect x="106.0" y="225.00" width="570.4" height="15.00" fill="url(#r42)" mask="url(#mk)"/><rect x="106.0" y="211.70" width="570.4" height="13.60" fill="url(#r42)"/><rect x="106.0" y="212.00" width="570.4" height="13.00" fill="url(#r43)" mask="url(#mk)"/><rect x="106.0" y="202.70" width="570.4" height="9.60" fill="url(#r43)"/><rect x="106.0" y="203.00" width="570.4" height="9.00" fill="url(#r44)" mask="url(#mk)"/><rect x="106.0" y="195.70" width="570.4" height="7.60" fill="url(#r44)"/><rect x="106.0" y="196.00" width="570.4" height="7.00" fill="url(#r45)" mask="url(#mk)"/><rect x="106.0" y="189.70" width="570.4" height="6.60" fill="url(#r45)"/><rect x="106.0" y="190.00" width="570.4" height="6.00" fill="url(#r46)" mask="url(#mk)"/><rect x="106.0" y="184.70" width="570.4" height="5.60" fill="url(#r46)"/><rect x="106.0" y="185.00" width="570.4" height="5.00" fill="url(#r47)" mask="url(#mk)"/><rect x="106.0" y="180.70" width="570.4" height="4.60" fill="url(#r47)"/><rect x="106.0" y="181.00" width="570.4" height="4.00" fill="url(#r48)" mask="url(#mk)"/><rect x="106.0" y="177.70" width="570.4" height="3.60" fill="url(#r48)"/><rect x="106.0" y="178.00" width="570.4" height="3.00" fill="url(#r49)" mask="url(#mk)"/><rect x="106.0" y="175.40" width="570.4" height="2.90" fill="url(#r49)"/><rect x="106.0" y="175.70" width="570.4" height="2.30" fill="url(#r50)" mask="url(#mk)"/></g>
<path d="M106.0 745.9L135.5 745.9L135.2 743.8L134.2 740.8L132.5 737.3L130.4 733.6L127.7 729.9L124.6 726.3L121.2 723.1L117.7 720.3L114.2 718.0L110.9 716.3L108.0 715.2L106.0 714.8Z" fill="#fff"/>
<rect x="121" y="736.8" width="1" height="2" fill="#000"/><path d="M600.6 195.6L616 190.6" stroke="#fff" stroke-width="1.1"/><path d="M644 720h3.4M645.7 718.4v3.2M645 728h3.6M646.8 726.6v2.8M641 730h1.5M638.5 732.5h1.2" stroke="#fff" stroke-width="1.3"/>
<rect class="sp" x="106.0" y="175.7" width="570.4" height="570.2"/>
<path class="tk" d="M106.14 745.9v6.94M106.0 745.76h-6.94"/>
<path class="tk" d="M175.77 745.9v6.94M106.0 676.16h-6.94"/>
<path class="tk" d="M245.40 745.9v6.94M106.0 606.55h-6.94"/>
<path class="tk" d="M315.03 745.9v6.94M106.0 536.95h-6.94"/>
<path class="tk" d="M384.65 745.9v6.94M106.0 467.34h-6.94"/>
<path class="tk" d="M454.28 745.9v6.94M106.0 397.74h-6.94"/>
<path class="tk" d="M523.91 745.9v6.94M106.0 328.13h-6.94"/>
<path class="tk" d="M593.54 745.9v6.94M106.0 258.53h-6.94"/>
<path class="tk" d="M663.17 745.9v6.94M106.0 188.92h-6.94"/>
<path d="M391.34 168.76V752.84M99.06 461.26H683.34" stroke="#0000ff" stroke-width="1" fill="none"/>
<defs><linearGradient id="hot" x1="0" y1="1" x2="0" y2="0">
<stop offset="0" stop-color="rgb(11,0,0)"/>
<stop offset="0.365079" stop-color="rgb(255,0,0)"/>
<stop offset="0.746032" stop-color="rgb(255,255,0)"/>
<stop offset="1" stop-color="rgb(255,255,255)"/>
</linearGradient></defs>
<rect x="712.0" y="112.9" width="35.0" height="696.0" fill="url(#hot)"/>
<rect class="sp" x="712.0" y="112.9" width="35.0" height="696.0"/>
<path class="tk" d="M747.0 690.9h6.94"/>
<path class="tk" d="M747.0 571.9h6.94"/>
<path class="tk" d="M747.0 452.9h6.94"/>
<path class="tk" d="M747.0 333.9h6.94"/>
<path class="tk" d="M747.0 214.9h6.94"/>
<clipPath id="c1"><rect x="911.05" y="113.0" width="273.95000000000005" height="119.85"/></clipPath>
<path class="bl" clip-path="url(#c1)" d="M911.05 232.85H1008.55V218.98H1014.21V217.70H1020.04V214.90H1024.99V204.80H1031.17V197.80H1036.83V192.80H1042.13V118.80H1047.61V118.80H1053.09V165.10H1058.92V176.90H1064.22V186.60H1070.05V193.90H1076.06V196.00H1081.01V196.90H1086.84V197.80H1092.14V201.80H1098.15V200.10H1103.98V200.95H1109.28V202.70H1115.11V207.00H1120.41V204.00H1126.07V204.80H1131.90V206.60H1137.55V207.70H1143.38V207.70H1148.16V206.60H1153.99V207.50H1159.29V212.80H1164.94V208.90H1170.60V207.85H1175.90V211.00H1182.26V170.00H1187.91"/>
<rect class="sp" x="911.05" y="113.0" width="273.95000000000005" height="119.85"/>
<path class="tk" d="M911.05 232.85h-6.94"/>
<path class="tk" d="M911.05 196.9h-6.94"/>
<path class="tk" d="M911.05 160.95h-6.94"/>
<path class="tk" d="M911.05 125.0h-6.94"/>
<path class="tk" d="M911.90 232.85v6.94"/>
<path class="tk" d="M957.69 232.85v6.94"/>
<path class="tk" d="M1003.48 232.85v6.94"/>
<path class="tk" d="M1049.27 232.85v6.94"/>
<path class="tk" d="M1095.06 232.85v6.94"/>
<path class="tk" d="M1140.85 232.85v6.94"/>
<clipPath id="c2"><rect x="911.05" y="285.0" width="273.95000000000005" height="119.89999999999998"/></clipPath>
<path class="bl" clip-path="url(#c2)" d="M913.7 404.9V401.85H919.27V372.07H924.84V290.95H930.41V360.97H935.98V367.90H941.55V371.90H947.12V372.90H952.69V373.80H958.26V375.00H963.83V375.00H969.40V375.90H974.97V375.90H980.54V376.90H986.11V381.90H991.68V381.90H997.25V384.10H1002.82V381.90H1008.39V385.90H1013.96V388.00H1019.53V386.90H1025.10V384.95H1030.67V391.07H1036.24V387.85H1041.81V387.85H1047.38V389.80H1052.95V391.90H1058.52V390.70H1064.09V390.70H1069.66V396.90H1075.23V390.70H1080.80V392.70H1086.37V389.90H1091.94V397.80H1097.51V394.00H1103.08V394.90H1108.65V390.70H1114.22V391.50H1119.79V391.50H1125.36V397.80H1130.93V393.00H1136.50V394.90H1142.07V393.00H1147.64V390.70H1153.21V391.90H1158.78V390.70H1164.35V393.00H1169.92V391.90H1175.49V394.90H1181.06V351.60H1186.63"/>
<rect class="sp" x="911.05" y="285.0" width="273.95000000000005" height="119.89999999999998"/>
<path class="tk" d="M911.05 374.8h-6.94"/>
<path class="tk" d="M911.05 338.45h-6.94"/>
<path class="tk" d="M911.05 302.07h-6.94"/>
<path class="tk" d="M928.95 404.9v6.94"/>
<path class="tk" d="M966.35 404.9v6.94"/>
<path class="tk" d="M1003.75 404.9v6.94"/>
<path class="tk" d="M1041.15 404.9v6.94"/>
<path class="tk" d="M1078.55 404.9v6.94"/>
<path class="tk" d="M1115.95 404.9v6.94"/>
<path class="tk" d="M1153.35 404.9v6.94"/>
<clipPath id="c3"><rect x="911.05" y="517.0" width="273.95000000000005" height="119.89999999999998"/></clipPath>
<path class="bl" clip-path="url(#c3)" style="stroke-width:1.7" d="M911.05 576.4H1185.0M911.05 576.3L911.71 575.96L912.37 576.53L913.03 576.46L913.69 576.05L914.35 576.25L915.01 576.21L915.67 576.37L916.33 576.48L916.99 575.93L917.65 575.87L918.31 576.52L918.97 576.20L919.63 576.46L920.29 575.85L920.95 576.21L921.61 576.43L922.27 576.03L922.93 576.61L923.59 576.57L924.25 575.87L924.91 575.87L925.57 576.28L926.23 576.60L926.89 576.15L927.55 576.02L928.21 576.19L928.87 575.87L929.53 576.03L930.19 576.20L930.85 576.25L931.51 576.04L932.17 576.03L932.83 576.03L933.49 576.22L934.15 576.08L934.81 575.87L935.47 576.52L936.13 576.30L936.79 576.36L937.45 576.00L938.11 576.64L938.77 576.54L939.43 575.95L940.09 576.12L940.75 576.43L941.41 576.42L942.07 576.60L942.73 576.19L943.39 576.51L944.05 576.39L944.71 576.09L945.37 576.32L946.03 576.56L946.69 576.53L947.35 576.25L948.01 576.32L948.67 575.88L949.33 576.04L949.99 576.49L950.65 576.18L951.31 575.99L951.97 576.29L952.63 576.41L953.29 576.39L953.95 576.15L954.61 576.20L955.27 576.26L955.93 576.47L956.59 576.27L957.25 576.16L957.91 576.24L958.57 575.87L959.23 575.88L959.89 576.41L960.55 576.64L961.21 576.32L961.87 576.16L962.53 575.99L963.19 576.25L963.85 576.64L964.51 576.47L965.17 576.28L965.83 576.54L966.49 576.04L967.15 576.26L967.81 576.61L968.47 576.31L969.13 576.22L969.79 576.07L970.45 576.29L971.11 576.62L971.77 575.85L972.43 576.48L973.09 576.51L973.75 576.56L974.41 576.44L975.07 576.50L975.73 576.26L976.39 576.30L977.05 576.19L977.71 575.89L978.37 576.55L979.03 576.31L979.69 576.01L980.35 576.25L981.01 576.24L981.67 576.14L982.33 576.13L982.99 576.28L983.65 576.35L984.31 576.34L984.97 576.22L985.63 575.87L986.29 576.03L986.95 575.99L987.61 576.32L988.27 576.54L988.93 576.49L989.59 576.49L990.25 576.50L990.91 576.05L991.57 576.52L992.23 576.39L992.89 575.92L993.55 575.86L994.21 575.86L994.87 576.45L995.53 576.05L996.19 575.94L996.85 576.35L997.51 576.13L998.17 575.91L998.83 575.98L999.49 576.27L1000.15 575.98L1000.81 576.07L1001.47 576.42L1002.13 576.21L1002.79 576.11L1003.45 576.23L1004.11 575.87L1004.77 576.16L1005.43 576.19L1006.09 576.00L1006.75 575.94L1007.41 576.57L1008.07 576.26L1008.73 576.02L1009.39 576.33L1010.05 576.50L1010.71 575.87L1011.37 575.86L1012.03 575.97L1012.69 576.43L1013.35 575.98L1014.01 576.41L1014.67 576.39L1015.33 576.29L1015.99 576.03L1016.65 576.63L1017.31 576.49L1017.97 576.26L1018.63 576.03L1019.29 576.37L1019.95 576.17L1020.61 576.31L1021.27 576.11L1021.93 576.35L1022.59 575.90L1023.25 576.09L1023.91 576.62L1024.57 576.55L1025.23 576.10L1025.89 576.54L1026.55 576.10L1027.21 576.60L1027.87 576.45L1028.53 576.18L1029.19 576.05L1029.85 575.86L1030.51 576.55L1031.17 575.88L1031.83 576.51L1032.49 576.62L1033.15 576.31L1033.81 575.99L1034.47 576.54L1035.13 576.63L1035.79 576.41L1036.45 576.26L1037.11 576.15L1037.77 576.13L1038.43 576.01L1039.09 576.39L1039.75 576.20L1040.41 576.01L1041.07 575.93L1041.73 576.38L1042.39 576.09L1043.05 576.25L1043.71 576.11L1044.37 576.55L1045.03 576.57L1045.69 575.86L1046.35 576.01L1047.01 576.11L1047.67 576.64L1048.33 576.48L1048.99 576.12L1049.65 576.02L1050.31 576.39L1050.97 576.52L1051.63 576.60L1052.29 576.13L1052.95 576.56L1053.61 576.40L1054.27 576.24L1054.93 576.64L1055.59 576.04L1056.25 576.43L1056.91 575.92L1057.57 575.99L1058.23 576.58L1058.89 576.02L1059.55 576.46L1060.21 576.33L1060.87 576.52L1061.53 576.14L1062.19 576.12L1062.85 576.08L1063.51 576.54L1064.17 576.33L1064.83 576.61L1065.49 576.56L1066.15 575.96L1066.81 576.29L1067.47 575.93L1068.13 575.88L1068.79 575.91L1069.45 576.54L1070.11 576.48L1070.77 576.51L1071.43 576.12L1072.09 576.34L1072.75 576.48L1073.41 576.15L1074.07 576.31L1074.73 576.03L1075.39 575.92L1076.05 576.06L1076.71 576.56L1077.37 576.30L1078.03 576.59L1078.69 576.22L1079.35 576.07L1080.01 576.48L1080.67 576.51L1081.33 575.86L1081.99 576.39L1082.65 575.92L1083.31 575.94L1083.97 576.56L1084.63 575.88L1085.29 576.04L1085.95 576.64L1086.61 576.19L1087.27 575.94L1087.93 575.98L1088.59 576.04L1089.25 576.45L1089.91 575.93L1090.57 576.58L1091.23 576.15L1091.89 576.63L1092.55 576.58L1093.21 576.09L1093.87 576.05L1094.53 576.23L1095.19 575.93L1095.85 576.37L1096.51 575.88L1097.17 575.86L1097.83 576.64L1098.49 576.09L1099.15 576.33L1099.81 576.21L1100.47 576.10L1101.13 575.90L1101.79 576.58L1102.45 576.63L1103.11 576.63L1103.77 575.94L1104.43 576.02L1105.09 576.34L1105.75 576.63L1106.41 576.28L1107.07 576.40L1107.73 576.38L1108.39 576.06L1109.05 576.28L1109.71 576.10L1110.37 576.05L1111.03 575.92L1111.69 576.07L1112.35 576.64L1113.01 576.21L1113.67 576.37L1114.33 576.36L1114.99 576.60L1115.65 576.16L1116.31 576.10L1116.97 576.11L1117.63 576.10L1118.29 576.53L1118.95 576.56L1119.61 576.09L1120.27 576.12L1120.93 576.29L1121.59 576.31L1122.25 576.33L1122.91 576.05L1123.57 575.87L1124.23 576.05L1124.89 575.91L1125.55 576.29L1126.21 575.91L1126.87 575.91L1127.53 576.36L1128.19 576.08L1128.85 576.48L1129.51 576.24L1130.17 576.54L1130.83 575.97L1131.49 576.25L1132.15 576.49L1132.81 575.91L1133.47 576.61L1134.13 575.99L1134.79 576.47L1135.45 576.64L1136.11 576.51L1136.77 576.11L1137.43 575.94L1138.09 576.26L1138.75 576.59L1139.41 576.08L1140.07 576.57L1140.73 575.96L1141.39 576.58L1142.05 575.88L1142.71 576.10L1143.37 576.57L1144.03 576.49L1144.69 576.58L1145.35 576.52L1146.01 576.45L1146.67 576.40L1147.33 575.99L1147.99 576.20L1148.65 575.98L1149.31 576.42L1149.97 576.38L1150.63 576.05L1151.29 575.90L1151.95 576.62L1152.61 576.50L1153.27 576.29L1153.93 576.28L1154.59 576.53L1155.25 576.21L1155.91 576.17L1156.57 576.12L1157.23 576.06L1157.89 575.87L1158.55 576.37L1159.21 576.18L1159.87 576.31L1160.53 575.90L1161.19 576.13L1161.85 575.96L1162.51 575.95L1163.17 576.06L1163.83 576.51L1164.49 576.17L1165.15 576.17L1165.81 576.34L1166.47 576.04L1167.13 575.86L1167.79 576.27L1168.45 576.25L1169.11 576.37L1169.77 576.20L1170.43 576.40L1171.09 576.44L1171.75 576.04L1172.41 576.25L1173.07 576.23L1173.73 576.03L1174.39 576.18L1175.05 576.30L1175.71 576.58L1176.37 576.58L1177.03 576.07L1177.69 576.37L1178.35 575.89L1179.01 575.91L1179.67 576.26L1180.33 576.55L1180.99 575.98L1181.65 576.46L1182.31 576.56L1182.97 576.10L1183.63 576.40L1184.29 576.53L1184.95 576.15L1185.61 576.41M937.0 576.3V500M971.0 576.3V569.7M981.8 576.3V571.3M1137.6 576.3V574.6M1143.0 576.3V574.3M1175.2 576.3V500M1181.0 576.3V500"/>
<rect class="sp" x="911.05" y="517.0" width="273.95000000000005" height="119.89999999999998"/>
<path class="tk" d="M911.05 526.0h-6.94"/>
<path class="tk" d="M911.05 551.25h-6.94"/>
<path class="tk" d="M911.05 576.5h-6.94"/>
<path class="tk" d="M911.05 601.75h-6.94"/>
<path class="tk" d="M911.05 627.0h-6.94"/>
<path class="tk" d="M911.97 636.9v6.94"/>
<path class="tk" d="M978.20 636.9v6.94"/>
<path class="tk" d="M1044.43 636.9v6.94"/>
<path class="tk" d="M1110.66 636.9v6.94"/>
<path class="tk" d="M1176.89 636.9v6.94"/>
<rect x="1108.5" y="519.8" width="73.5" height="16.0" rx="2.2" fill="#fff" fill-opacity="0.8" stroke="#ccc" stroke-opacity="0.8" stroke-width="1"/><path class="bl" d="M1111.5 527.85h22.3"/>
<clipPath id="c4"><rect x="911.05" y="689.0" width="273.95000000000005" height="119.89999999999998"/></clipPath>
<path class="bl" clip-path="url(#c4)" style="stroke-width:1.7" d="M911.05 748.4H1185.0M911.05 748.3L911.71 748.61L912.37 748.61L913.03 747.90L913.69 747.92L914.35 748.52L915.01 748.44L915.67 748.39L916.33 748.10L916.99 748.33L917.65 748.34L918.31 748.31L918.97 747.98L919.63 748.19L920.29 748.16L920.95 748.43L921.61 748.65L922.27 748.61L922.93 748.29L923.59 748.21L924.25 748.06L924.91 747.88L925.57 747.87L926.23 748.22L926.89 748.10L927.55 748.15L928.21 748.56L928.87 748.27L929.53 748.30L930.19 748.04L930.85 747.87L931.51 748.11L932.17 747.96L932.83 748.26L933.49 748.65L934.15 748.39L934.81 748.00L935.47 748.56L936.13 748.49L936.79 748.44L937.45 748.58L938.11 748.46L938.77 748.48L939.43 748.13L940.09 748.63L940.75 748.62L941.41 747.98L942.07 748.45L942.73 748.42L943.39 748.22L944.05 748.27L944.71 748.24L945.37 748.59L946.03 748.25L946.69 748.52L947.35 748.13L948.01 748.56L948.67 748.57L949.33 748.22L949.99 748.30L950.65 748.59L951.31 748.43L951.97 748.24L952.63 748.03L953.29 748.11L953.95 748.41L954.61 747.98L955.27 748.58L955.93 748.06L956.59 748.58L957.25 748.10L957.91 748.62L958.57 748.41L959.23 748.25L959.89 748.26L960.55 748.37L961.21 748.32L961.87 748.10L962.53 748.02L963.19 748.26L963.85 748.60L964.51 748.35L965.17 747.91L965.83 748.51L966.49 748.43L967.15 748.58L967.81 748.00L968.47 748.45L969.13 747.90L969.79 748.37L970.45 748.07L971.11 748.03L971.77 748.55L972.43 747.94L973.09 748.27L973.75 748.53L974.41 748.05L975.07 748.02L975.73 748.55L976.39 748.19L977.05 748.42L977.71 747.88L978.37 748.14L979.03 747.99L979.69 748.39L980.35 747.92L981.01 748.61L981.67 747.87L982.33 748.43L982.99 747.87L983.65 748.05L984.31 748.50L984.97 747.98L985.63 748.00L986.29 748.40L986.95 748.16L987.61 747.88L988.27 748.64L988.93 747.97L989.59 747.88L990.25 748.13L990.91 748.34L991.57 748.44L992.23 747.94L992.89 748.12L993.55 747.87L994.21 748.21L994.87 748.46L995.53 748.44L996.19 748.57L996.85 748.45L997.51 748.54L998.17 748.41L998.83 748.23L999.49 748.03L1000.15 748.38L1000.81 748.10L1001.47 747.93L1002.13 748.21L1002.79 748.55L1003.45 747.95L1004.11 748.32L1004.77 748.16L1005.43 748.26L1006.09 747.97L1006.75 748.62L1007.41 748.06L1008.07 748.33L1008.73 748.19L1009.39 747.86L1010.05 748.30L1010.71 747.96L1011.37 747.90L1012.03 747.88L1012.69 747.98L1013.35 747.93L1014.01 748.36L1014.67 748.26L1015.33 748.64L1015.99 748.60L1016.65 748.65L1017.31 748.04L1017.97 748.21L1018.63 748.05L1019.29 748.32L1019.95 748.35L1020.61 748.49L1021.27 748.42L1021.93 748.06L1022.59 748.19L1023.25 748.27L1023.91 747.85L1024.57 747.88L1025.23 748.18L1025.89 747.94L1026.55 748.43L1027.21 748.04L1027.87 747.93L1028.53 748.00L1029.19 748.04L1029.85 748.02L1030.51 748.27L1031.17 748.22L1031.83 748.10L1032.49 748.36L1033.15 748.02L1033.81 748.58L1034.47 748.62L1035.13 748.43L1035.79 748.20L1036.45 748.26L1037.11 748.31L1037.77 747.89L1038.43 748.18L1039.09 748.27L1039.75 747.99L1040.41 747.93L1041.07 748.49L1041.73 748.14L1042.39 748.27L1043.05 748.59L1043.71 748.34L1044.37 748.08L1045.03 748.64L1045.69 748.15L1046.35 747.87L1047.01 748.40L1047.67 747.93L1048.33 748.09L1048.99 748.52L1049.65 748.39L1050.31 747.86L1050.97 748.21L1051.63 748.18L1052.29 748.24L1052.95 748.02L1053.61 748.32L1054.27 747.91L1054.93 748.08L1055.59 748.15L1056.25 748.60L1056.91 747.91L1057.57 748.45L1058.23 748.00L1058.89 748.31L1059.55 748.16L1060.21 748.22L1060.87 748.45L1061.53 748.17L1062.19 747.95L1062.85 747.95L1063.51 747.91L1064.17 748.53L1064.83 748.36L1065.49 748.62L1066.15 748.40L1066.81 747.87L1067.47 748.38L1068.13 748.47L1068.79 748.43L1069.45 748.25L1070.11 748.14L1070.77 748.22L1071.43 748.49L1072.09 748.07L1072.75 748.27L1073.41 748.23L1074.07 748.61L1074.73 748.49L1075.39 748.60L1076.05 748.52L1076.71 748.09L1077.37 748.04L1078.03 748.24L1078.69 748.06L1079.35 748.19L1080.01 748.39L1080.67 748.58L1081.33 748.32L1081.99 748.50L1082.65 747.93L1083.31 748.13L1083.97 748.65L1084.63 747.97L1085.29 748.18L1085.95 747.90L1086.61 747.92L1087.27 748.57L1087.93 748.64L1088.59 748.37L1089.25 747.95L1089.91 748.09L1090.57 748.04L1091.23 748.39L1091.89 748.39L1092.55 748.20L1093.21 748.27L1093.87 747.94L1094.53 748.28L1095.19 748.61L1095.85 748.45L1096.51 747.93L1097.17 748.26L1097.83 748.42L1098.49 748.06L1099.15 748.57L1099.81 748.22L1100.47 748.41L1101.13 748.17L1101.79 748.65L1102.45 748.48L1103.11 748.31L1103.77 747.97L1104.43 748.20L1105.09 747.87L1105.75 748.33L1106.41 748.56L1107.07 747.99L1107.73 748.26L1108.39 748.24L1109.05 748.17L1109.71 748.42L1110.37 748.60L1111.03 748.41L1111.69 748.23L1112.35 748.62L1113.01 748.11L1113.67 748.45L1114.33 748.38L1114.99 748.46L1115.65 748.53L1116.31 748.03L1116.97 748.35L1117.63 748.17L1118.29 748.38L1118.95 748.63L1119.61 748.36L1120.27 747.86L1120.93 748.22L1121.59 748.42L1122.25 748.56L1122.91 748.37L1123.57 748.50L1124.23 747.86L1124.89 748.60L1125.55 748.43L1126.21 748.34L1126.87 748.57L1127.53 748.56L1128.19 747.93L1128.85 748.50L1129.51 748.46L1130.17 748.01L1130.83 748.45L1131.49 748.32L1132.15 748.00L1132.81 748.49L1133.47 747.96L1134.13 748.34L1134.79 748.20L1135.45 748.05L1136.11 748.30L1136.77 748.22L1137.43 748.01L1138.09 748.62L1138.75 747.91L1139.41 747.85L1140.07 748.24L1140.73 748.52L1141.39 748.38L1142.05 748.45L1142.71 748.24L1143.37 748.39L1144.03 748.12L1144.69 748.06L1145.35 748.25L1146.01 747.87L1146.67 747.91L1147.33 748.45L1147.99 747.99L1148.65 748.45L1149.31 748.48L1149.97 748.17L1150.63 748.39L1151.29 748.48L1151.95 748.54L1152.61 747.96L1153.27 747.98L1153.93 748.16L1154.59 748.22L1155.25 748.09L1155.91 747.86L1156.57 748.30L1157.23 748.62L1157.89 748.14L1158.55 748.28L1159.21 748.16L1159.87 748.20L1160.53 748.55L1161.19 748.10L1161.85 748.37L1162.51 748.24L1163.17 748.28L1163.83 748.58L1164.49 747.91L1165.15 748.51L1165.81 748.09L1166.47 748.37L1167.13 748.49L1167.79 748.37L1168.45 748.16L1169.11 748.52L1169.77 747.92L1170.43 748.36L1171.09 748.16L1171.75 748.27L1172.41 748.53L1173.07 748.49L1173.73 748.35L1174.39 748.10L1175.05 748.04L1175.71 748.22L1176.37 748.04L1177.03 748.07L1177.69 748.62L1178.35 747.94L1179.01 748.50L1179.67 748.15L1180.33 748.14L1180.99 748.10L1181.65 747.91L1182.31 748.22L1182.97 747.98L1183.63 748.20L1184.29 748.08L1184.95 748.57L1185.61 748.59M1075.2 748.3V680M1151.9 748.3V719.3M1153.6 748.3V745.1M1165.5 748.3V741.0M993.0 748.3V746.8M936.0 748.3V747.0"/>
<rect class="sp" x="911.05" y="689.0" width="273.95000000000005" height="119.89999999999998"/>
<path class="tk" d="M911.05 698.0h-6.94"/>
<path class="tk" d="M911.05 723.25h-6.94"/>
<path class="tk" d="M911.05 748.5h-6.94"/>
<path class="tk" d="M911.05 773.75h-6.94"/>
<path class="tk" d="M911.05 799.0h-6.94"/>
<path class="tk" d="M911.97 808.9v6.94"/>
<path class="tk" d="M978.20 808.9v6.94"/>
<path class="tk" d="M1044.43 808.9v6.94"/>
<path class="tk" d="M1110.66 808.9v6.94"/>
<path class="tk" d="M1176.89 808.9v6.94"/>
<rect x="1108.9" y="692.0" width="73.39999999999986" height="15.600000000000023" rx="2.2" fill="#fff" fill-opacity="0.8" stroke="#ccc" stroke-opacity="0.8" stroke-width="1"/><path class="bl" d="M1111.9 699.85h22.3"/>
<filter id="tf" x="0" y="0" width="1245" height="870" filterUnits="userSpaceOnUse"><feOffset dx="0" dy="0"/></filter><g filter="url(#tf)"><text x="6.2" y="23.1" font-size="16.67">2025-05-27: HAWKI</text><text x="335.6" y="23.1" font-size="12.5">type info</text><text x="628.8" y="23.1" font-size="12.5">set-up info</text><text x="6.6" y="45.1" font-size="12.5">ORIGFILE:</text><text x="74.6" y="45.6" font-size="12.5">HAWKI_IMG_DARK_Darks148_0028.fits</text><text x="6.6" y="61.9" font-size="12.5">ARCFILE:</text><text x="74.6" y="61.9" font-size="12.5">HAWKI.2025-05-28T10:45:50.486.fits</text><text x="6.6" y="80" font-size="12.5">raw_type:</text><text x="74.6" y="80" font-size="12.5">DARK</text><text x="6.6" y="97" font-size="12.5">do_class:</text><text x="74.6" y="96" font-size="12.5">DARK</text><text x="6.6" y="113.6" font-size="12.5">extension:</text><text x="74.6" y="113.6" font-size="12.5">4</text><text x="335.6" y="45.0" font-size="12.5">DPR.CATG:</text><text x="404.6" y="45.0" font-size="12.5">CALIB</text><text x="335.6" y="62.0" font-size="12.5">DPR.TYPE:</text><text x="404.6" y="62.0" font-size="12.5">DARK</text><text x="335.6" y="79.7" font-size="12.5">DPR.TECH:</text><text x="404.6" y="79.7" font-size="12.5">IMAGE</text><text x="335.6" y="96.4" font-size="12.5">TPL.ID:</text><text x="404.6" y="96.8" font-size="12.5">HAWKI_img_cal_Darks</text><text x="628.9" y="42.7" font-size="10.42">DET.NCORRS.NAME:</text><text x="759.0" y="42.7" font-size="10.42">NonDest</text><text x="628.9" y="55.9" font-size="10.42">DET.DIT:</text><text x="759.0" y="55.9" font-size="10.42">300.0000000</text><text x="628.9" y="68.9" font-size="10.42">DET.NDIT:</text><text x="759.0" y="68.9" font-size="10.42">1</text><text x="628.9" y="81.9" font-size="10.42">DET.RSPEED:</text><text x="759.0" y="81.9" font-size="10.42">8</text><text x="6.0" y="863.7" font-size="10.42">powered by QC: www.eso.org/HC</text><text x="1239.4" y="863.7" font-size="10.42" text-anchor="end">created by qc_rawdisp.py v1.2.3 on 2025-05-28T12:39:04</text><text x="106.14" y="768.9" font-size="9.72" text-anchor="middle">0</text><text x="91.1" y="749.36" font-size="9.72" text-anchor="end">0</text><text x="175.77" y="768.9" font-size="9.72" text-anchor="middle">250</text><text x="91.1" y="679.76" font-size="9.72" text-anchor="end">250</text><text x="245.4" y="768.9" font-size="9.72" text-anchor="middle">500</text><text x="91.1" y="610.15" font-size="9.72" text-anchor="end">500</text><text x="315.03" y="768.9" font-size="9.72" text-anchor="middle">750</text><text x="91.1" y="540.55" font-size="9.72" text-anchor="end">750</text><text x="384.65" y="768.9" font-size="9.72" text-anchor="middle">1000</text><text x="91.1" y="470.94" font-size="9.72" text-anchor="end">1000</text><text x="454.28" y="768.9" font-size="9.72" text-anchor="middle">1250</text><text x="91.1" y="401.34" font-size="9.72" text-anchor="end">1250</text><text x="523.91" y="768.9" font-size="9.72" text-anchor="middle">1500</text><text x="91.1" y="331.73" font-size="9.72" text-anchor="end">1500</text><text x="593.54" y="768.9" font-size="9.72" text-anchor="middle">1750</text><text x="91.1" y="262.13" font-size="9.72" text-anchor="end">1750</text><text x="663.17" y="768.9" font-size="9.72" text-anchor="middle">2000</text><text x="91.1" y="192.52" font-size="9.72" text-anchor="end">2000</text><text x="391.6" y="786.8" font-size="10.42" text-anchor="middle">X</text><text x="53.0" y="460.9" font-size="10.42" text-anchor="middle" transform="rotate(-90 53.0 460.9)">Y</text><text x="762.0" y="694.5" font-size="9.72">40</text><text x="762.0" y="575.5" font-size="9.72">45</text><text x="762.0" y="456.5" font-size="9.72">50</text><text x="762.0" y="337.5" font-size="9.72">55</text><text x="762.0" y="218.5" font-size="9.72">60</text><text x="896.2" y="236.45" font-size="9.72" text-anchor="end">0</text><text x="896.2" y="200.5" font-size="9.72" text-anchor="end">2</text><text x="896.2" y="164.55" font-size="9.72" text-anchor="end">4</text><text x="896.2" y="128.6" font-size="9.72" text-anchor="end">6</text><text x="911.0" y="255.85" font-size="9.72" text-anchor="middle">-6000</text><text x="1002.58" y="255.85" font-size="9.72" text-anchor="middle">-2000</text><text x="1095.06" y="255.85" font-size="9.72" text-anchor="middle">2000</text><text x="1048.0" y="273.8" font-size="10.42" text-anchor="middle">counts</text><text x="878.1" y="173.7" font-size="10.42" text-anchor="middle" transform="rotate(-90 878.1 173.7)">log frequency</text><text x="1194.1" y="174.95" font-size="10.42" text-anchor="middle" transform="rotate(90 1194.1 174.95)">histogram (detail)</text><text x="896.2" y="378.4" font-size="9.72" text-anchor="end">2</text><text x="896.2" y="342.05" font-size="9.72" text-anchor="end">4</text><text x="896.2" y="305.67" font-size="9.72" text-anchor="end">6</text><text x="928.95" y="427.9" font-size="9.72" text-anchor="middle">0</text><text x="1003.75" y="427.9" font-size="9.72" text-anchor="middle">20000</text><text x="1078.55" y="427.9" font-size="9.72" text-anchor="middle">40000</text><text x="1153.35" y="427.9" font-size="9.72" text-anchor="middle">60000</text><text x="1048.0" y="445.8" font-size="10.42" text-anchor="middle">counts</text><text x="878.1" y="345.7" font-size="10.42" text-anchor="middle" transform="rotate(-90 878.1 345.7)">log frequency</text><text x="1194.1" y="349.25" font-size="10.42" text-anchor="middle" transform="rotate(90 1194.1 349.25)">histogram (full)</text><text x="896.2" y="529.6" font-size="9.72" text-anchor="end">5000</text><text x="896.2" y="554.85" font-size="9.72" text-anchor="end">2500</text><text x="896.2" y="580.1" font-size="9.72" text-anchor="end">0</text><text x="895.2" y="605.35" font-size="9.72" text-anchor="end">−2500</text><text x="895.2" y="630.6" font-size="9.72" text-anchor="end">−5000</text><text x="911.97" y="659.9" font-size="9.72" text-anchor="middle">0</text><text x="978.2" y="659.9" font-size="9.72" text-anchor="middle">500</text><text x="1044.43" y="659.9" font-size="9.72" text-anchor="middle">1000</text><text x="1110.66" y="659.9" font-size="9.72" text-anchor="middle">1500</text><text x="1176.89" y="659.9" font-size="9.72" text-anchor="middle">2000</text><text x="1048.0" y="677.9" font-size="10.42" text-anchor="middle">X</text><text x="850.0" y="578.0" font-size="10.42" text-anchor="middle" transform="rotate(-90 850.0 578.0)">counts</text><text x="1193.4" y="575.3" font-size="10.42" text-anchor="middle" transform="rotate(90 1193.4 575.3)">cut in x</text><text x="1137.3" y="531.35" font-size="9.72">y=1024</text><text x="896.2" y="701.6" font-size="9.72" text-anchor="end">5000</text><text x="896.2" y="726.85" font-size="9.72" text-anchor="end">2500</text><text x="896.2" y="752.1" font-size="9.72" text-anchor="end">0</text><text x="895.2" y="777.35" font-size="9.72" text-anchor="end">−2500</text><text x="895.2" y="802.6" font-size="9.72" text-anchor="end">−5000</text><text x="911.97" y="831.9" font-size="9.72" text-anchor="middle">0</text><text x="978.2" y="831.9" font-size="9.72" text-anchor="middle">500</text><text x="1044.43" y="831.9" font-size="9.72" text-anchor="middle">1000</text><text x="1110.66" y="831.9" font-size="9.72" text-anchor="middle">1500</text><text x="1176.89" y="831.9" font-size="9.72" text-anchor="middle">2000</text><text x="1048.6" y="849.6" font-size="10.42" text-anchor="middle">Y</text><text x="850.0" y="750.0" font-size="10.42" text-anchor="middle" transform="rotate(-90 850.0 750.0)">counts</text><text x="1193.9" y="749.5" font-size="10.42" text-anchor="middle" transform="rotate(90 1193.9 749.5)">cut in y</text><text x="1137.7" y="703.35" font-size="9.72">x=1024</text></g>
</svg></body></html>
